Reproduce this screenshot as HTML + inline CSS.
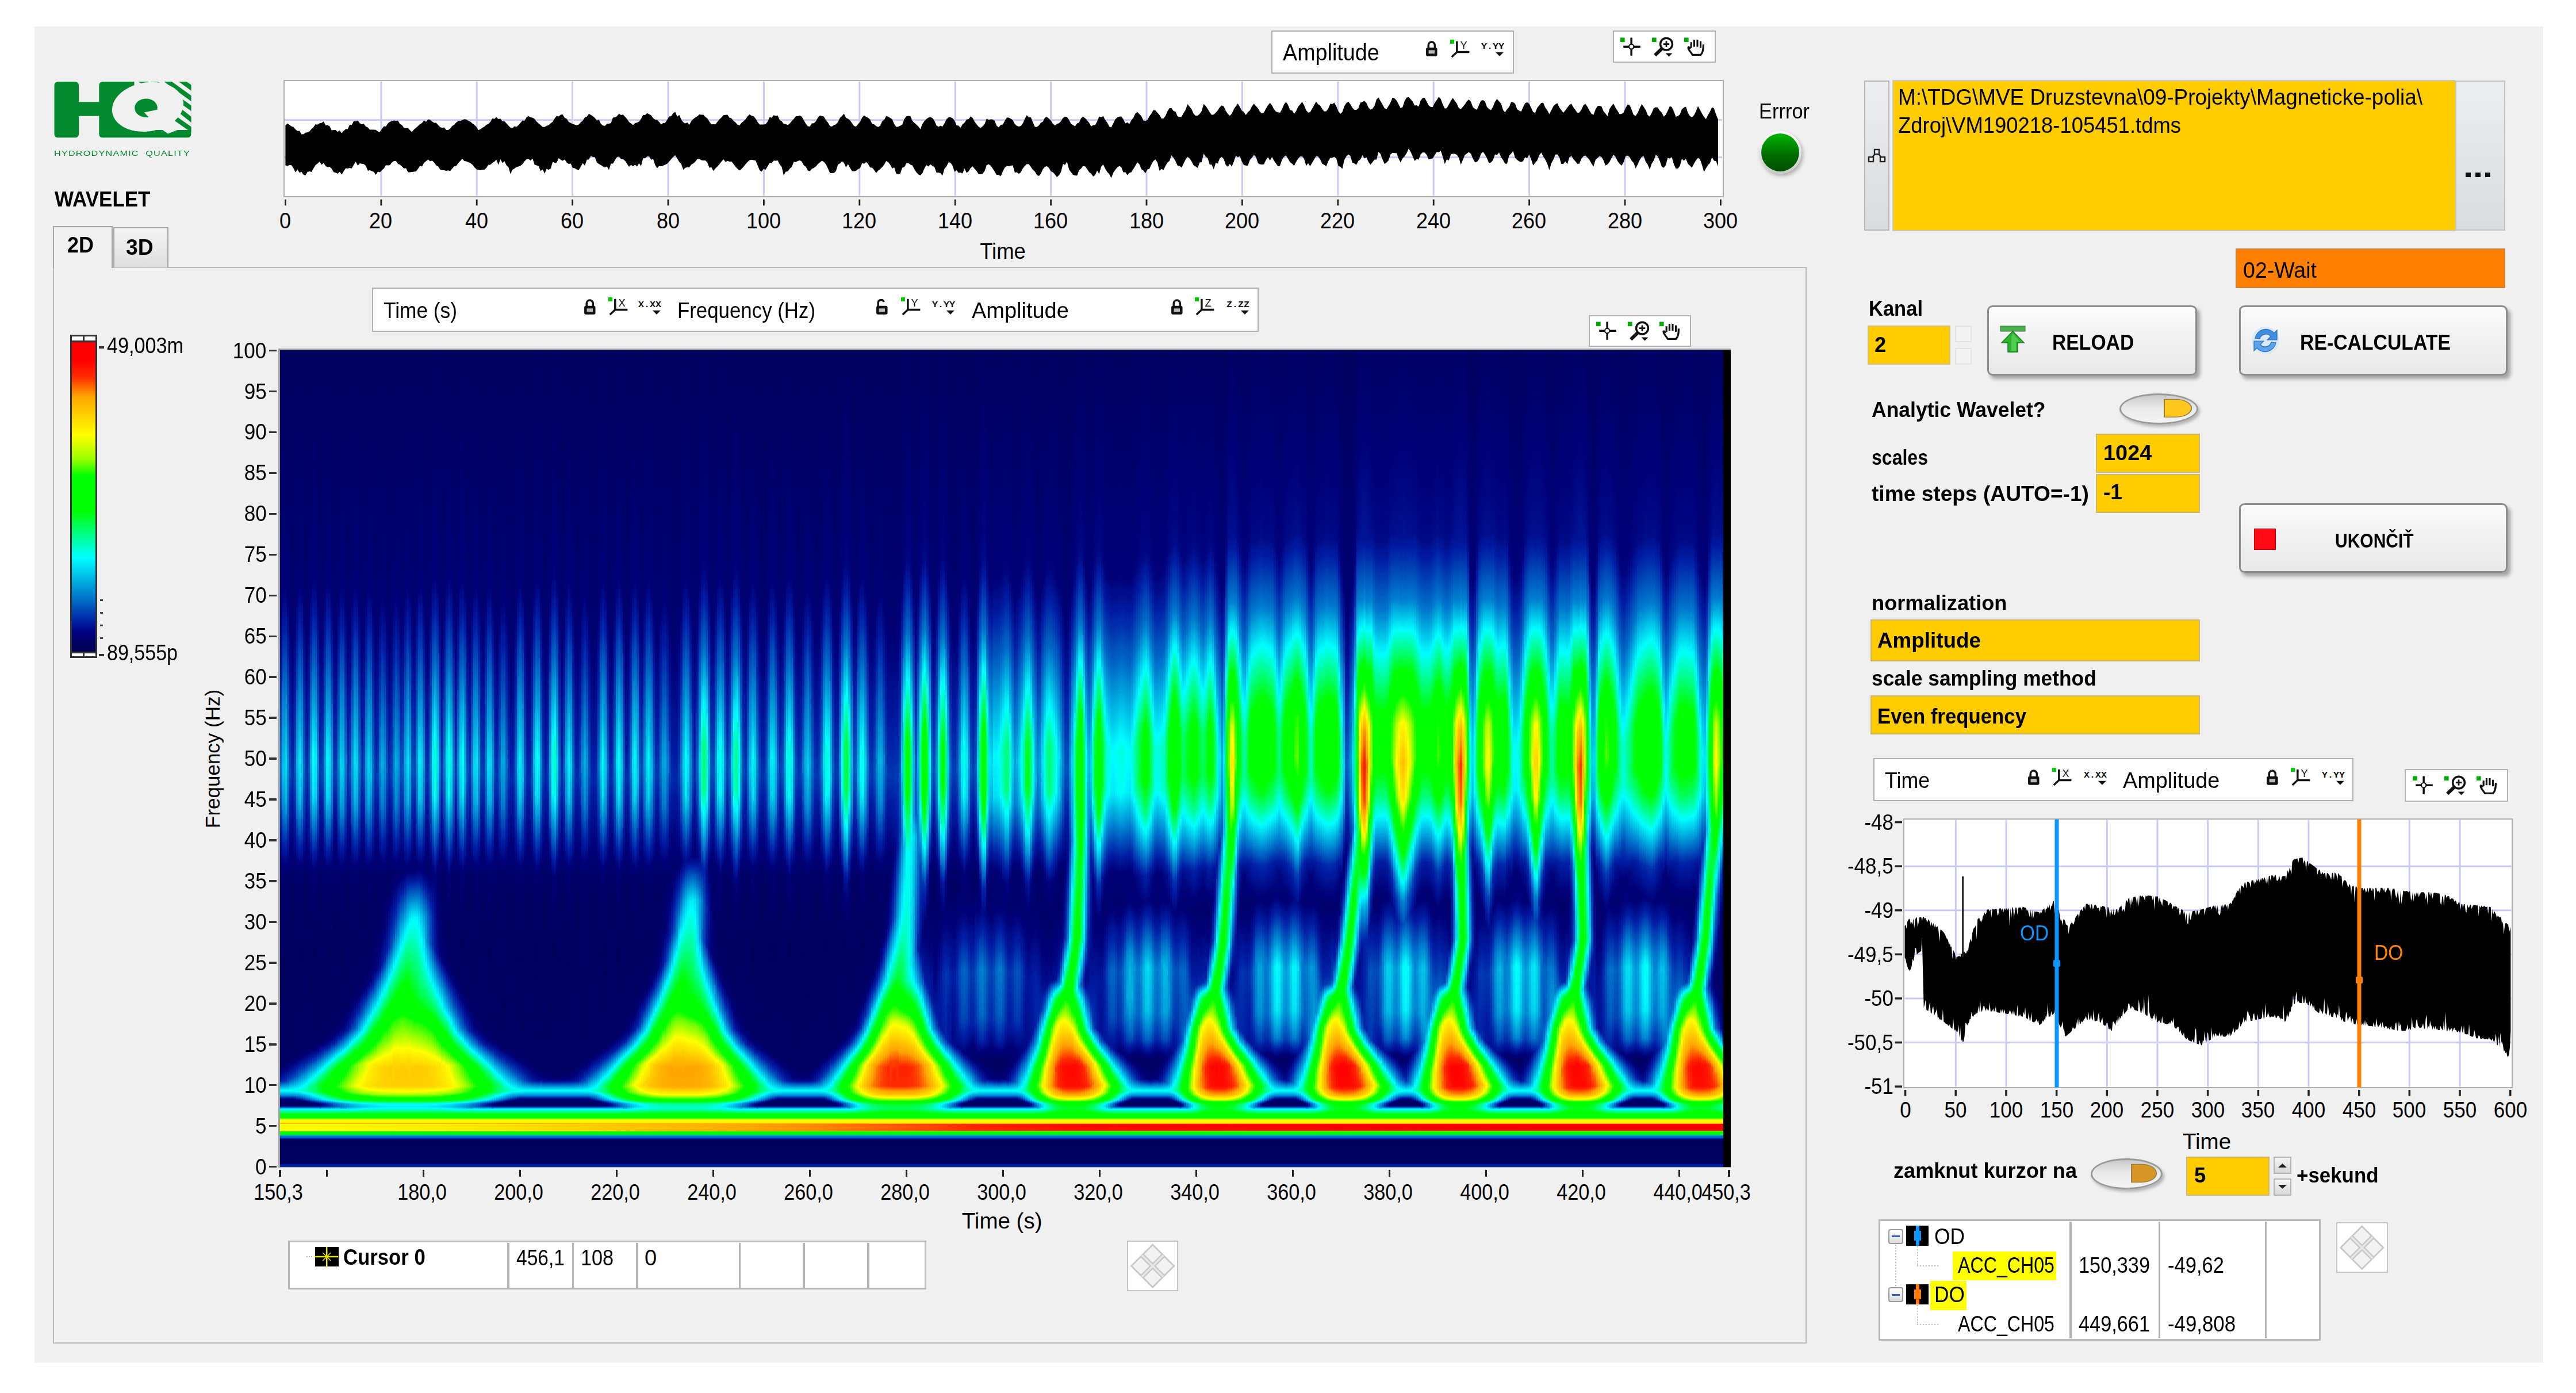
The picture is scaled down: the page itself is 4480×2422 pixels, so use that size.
<!DOCTYPE html><html><head><meta charset="utf-8"><title>WAVELET</title><style>html,body{margin:0;padding:0;background:#fff}
body{width:4480px;height:2422px;position:relative;overflow:hidden;font-family:"Liberation Sans",sans-serif;color:#000}
.a{position:absolute}
.t{position:absolute;white-space:nowrap;line-height:1;display:block}
#spec{position:absolute;left:0;top:0;width:2510px;height:1420px}
#spec .cols{display:flex;width:2510px}
#spec .cols i{flex:1 1 0;display:block;background:linear-gradient(var(--g))}
#spec .low{position:relative;width:2510px}
#spec .low b{position:absolute;left:0;width:2510px;display:block}
</style></head><body><svg width="0" height="0" style="position:absolute"><filter id="cm" x="0" y="0" width="100%" height="100%" color-interpolation-filters="sRGB"><feColorMatrix type="matrix" values="0.9412 0.0588 0 0 0 0.9412 0.0588 0 0 0 0.9412 0.0588 0 0 0 0 0 0 0 1"/><feComponentTransfer><feFuncR type="table" tableValues="0 0 0 0 0 0 0 0 0 0 0 0 0 0 0 0 0 0 0 0 0 0 0 0 0 0 0 0 0 0 0 0 0 0 0 0 0 0 0 0 0 0 0 0 0 0 0 0 0 0 0 0 0 0 0 0 0 0 0.077 0.154 0.231 0.308 0.385 0.462 0.538 0.615 0.692 0.769 0.846 0.923 1 1 1 1 1 1 1 1 1 1 1 1 1 1 1 1 1 1 1 1 1 1 1 1 1 1 1 1 1 1 1"/><feFuncG type="table" tableValues="0 0 0 0 0 0 0.024 0.047 0.071 0.094 0.118 0.162 0.206 0.25 0.294 0.338 0.382 0.426 0.471 0.515 0.559 0.603 0.647 0.691 0.735 0.779 0.824 0.868 0.912 0.956 1 1 1 1 1 1 1 1 1 1 1 1 1 1 1 1 1 1 1 1 1 1 1 1 1 1 1 1 1 1 1 1 1 1 1 1 1 1 1 1 1 0.971 0.941 0.912 0.882 0.853 0.824 0.794 0.765 0.735 0.706 0.676 0.647 0.577 0.507 0.437 0.367 0.297 0.227 0.157 0.125 0.094 0.063 0.031 0 0 0 0 0 0 0"/><feFuncB type="table" tableValues="0.361 0.383 0.405 0.427 0.449 0.471 0.506 0.541 0.576 0.612 0.647 0.667 0.686 0.706 0.725 0.745 0.765 0.784 0.804 0.82 0.837 0.853 0.869 0.886 0.902 0.918 0.935 0.951 0.967 0.984 1 0.938 0.875 0.813 0.751 0.689 0.626 0.564 0.502 0.439 0.376 0.314 0.251 0.188 0.125 0.063 0 0 0 0 0 0 0 0 0 0 0 0 0 0 0 0 0 0 0 0 0 0 0 0 0 0 0 0 0 0 0 0 0 0 0 0 0 0 0 0 0 0 0 0 0 0 0 0 0 0 0 0 0 0 0"/></feComponentTransfer></filter></svg><div class="a" style="left:60px;top:46px;width:4363px;height:2323px;background:#f0f0f0"></div><svg class="a" style="left:94px;top:141.6px" width="239" height="98" viewBox="0 0 239 98"><defs><clipPath id="lc"><rect x="0" y="0" width="238.5" height="97.5" rx="6"/></clipPath></defs><g clip-path="url(#lc)"><rect x="0.5" y="0" width="42.5" height="97.5" rx="6" fill="#038a2e"/><rect x="30" y="35.3" width="60" height="24.4" fill="#038a2e"/><path d="M78.3 6a6 6 0 0 1 6-6H238.5V91.5a6 6 0 0 1-6 6H84.3a6 6 0 0 1-6-6z" fill="#038a2e"/><rect x="139.5" y="-2" width="102" height="86" fill="#f0f0f0"/><g stroke="#038a2e" stroke-width="8" fill="none"><path d="M147 -4L171 8.5"/><path d="M170 -3L241 48"/><path d="M194 -3L241 31"/><path d="M219 -3.5L241 12.5"/><path d="M216 48L241 68"/><path d="M209 62.5L241 85"/></g><ellipse cx="163" cy="43.8" rx="62.5" ry="42.5" fill="#f0f0f0" transform="rotate(-9 163 44)"/><path d="M186 82L226 79.5L198 90.5z" fill="#f0f0f0"/><ellipse cx="160" cy="45.7" rx="19.8" ry="16.2" fill="#038a2e"/><path d="M156.5 53.4L183 48V66L166 63L161.5 58.5z" fill="#f0f0f0"/></g></svg><span class="t" id="t1" style="font-size:13.5px;top:260.1px;color:#038a2e;left:94.0px;transform-origin:0 0;transform:scaleX(1.2013);letter-spacing:1px;">HYDRODYNAMIC&nbsp;&nbsp;QUALITY</span><span class="t" id="t2" style="font-size:37.4px;top:328.1px;font-weight:bold;left:94.5px;transform-origin:0 0;transform:scaleX(0.9356);">WAVELET</span><div class="a" style="left:92.0px;top:464.0px;width:3050.0px;height:1872.0px;border:2.5px solid #b9b9b9;box-sizing:border-box;background:#f0f0f0"></div><div class="a" style="left:92.0px;top:393.0px;width:104.0px;height:73.0px;border:2px solid #a6a6a6;border-bottom:none;box-sizing:border-box;background:#f0f0f0"></div><div class="a" style="left:197.0px;top:395.0px;width:96.0px;height:70.0px;border:2px solid #a6a6a6;border-bottom:none;box-sizing:border-box;background:linear-gradient(#f4f4f4,#dedede)"></div><span class="t" id="t3" style="font-size:39.0px;top:405.8px;font-weight:bold;left:117.4px;transform-origin:0 0;transform:scaleX(0.9226);">2D</span><span class="t" id="t4" style="font-size:39.0px;top:410.0px;font-weight:bold;left:219.0px;transform-origin:0 0;transform:scaleX(0.9567);">3D</span><div class="a" style="left:492.5px;top:139.0px;width:2505.0px;height:204.0px;background:#fff;border:2.5px solid #b0b0b0;box-sizing:border-box"></div><svg class="a" style="left:0;top:0" width="3100" height="360" viewBox="0 0 3100 360"><rect x="661.3" y="141.5" width="3" height="199" fill="#c9c9f5"/><rect x="827.7" y="141.5" width="3" height="199" fill="#c9c9f5"/><rect x="994.1" y="141.5" width="3" height="199" fill="#c9c9f5"/><rect x="1160.5" y="141.5" width="3" height="199" fill="#c9c9f5"/><rect x="1326.9" y="141.5" width="3" height="199" fill="#c9c9f5"/><rect x="1493.3" y="141.5" width="3" height="199" fill="#c9c9f5"/><rect x="1659.7" y="141.5" width="3" height="199" fill="#c9c9f5"/><rect x="1826.1" y="141.5" width="3" height="199" fill="#c9c9f5"/><rect x="1992.5" y="141.5" width="3" height="199" fill="#c9c9f5"/><rect x="2158.9" y="141.5" width="3" height="199" fill="#c9c9f5"/><rect x="2325.3" y="141.5" width="3" height="199" fill="#c9c9f5"/><rect x="2491.7" y="141.5" width="3" height="199" fill="#c9c9f5"/><rect x="2658.1" y="141.5" width="3" height="199" fill="#c9c9f5"/><rect x="2824.5" y="141.5" width="3" height="199" fill="#c9c9f5"/><rect x="495" y="207.2" width="2500" height="3" fill="#c9c9f5"/><rect x="495" y="271.9" width="2500" height="3" fill="#c9c9f5"/><polygon points="496.4,217.9 499.9,214.8 503.4,217.0 506.9,219.8 510.4,220.7 513.9,225.0 517.4,227.8 520.9,227.4 524.4,233.4 527.8,233.2 531.3,230.7 534.8,229.9 538.3,228.6 541.8,224.3 545.3,221.1 548.8,216.1 552.3,216.8 555.8,214.3 559.3,213.8 562.8,211.3 566.3,217.7 569.8,217.5 573.3,219.5 576.8,226.4 580.3,225.9 583.8,226.1 587.3,229.3 590.7,226.8 594.2,231.5 597.7,227.6 601.2,224.6 604.7,224.5 608.2,216.8 611.7,217.3 615.2,210.6 618.7,211.1 622.2,209.6 625.7,214.3 629.2,216.3 632.7,215.2 636.2,220.0 639.7,221.4 643.2,225.4 646.7,225.6 650.2,225.5 653.6,225.7 657.1,228.5 660.6,229.7 664.1,223.9 667.6,219.5 671.1,220.1 674.6,214.4 678.1,211.8 681.6,210.5 685.1,209.5 688.6,209.9 692.1,209.8 695.6,215.4 699.1,217.4 702.6,222.5 706.1,222.8 709.6,222.4 713.1,226.5 716.5,229.4 720.0,225.0 723.5,222.2 727.0,218.9 730.5,215.9 734.0,213.8 737.5,209.5 741.0,211.7 744.5,207.6 748.0,208.2 751.5,211.3 755.0,213.5 758.5,213.5 762.0,217.4 765.5,221.1 769.0,222.2 772.5,221.4 776.0,226.0 779.4,226.0 782.9,223.6 786.4,218.9 789.9,216.9 793.4,212.9 796.9,210.2 800.4,210.2 803.9,209.0 807.4,207.2 810.9,207.8 814.4,209.9 817.9,211.6 821.4,214.6 824.9,216.9 828.4,220.6 831.9,226.2 835.4,224.7 838.9,222.2 842.3,220.3 845.8,216.9 849.3,215.6 852.8,212.1 856.3,206.0 859.8,206.7 863.3,203.7 866.8,206.9 870.3,206.2 873.8,211.1 877.3,210.7 880.8,214.4 884.3,218.4 887.8,222.0 891.3,222.5 894.8,219.5 898.3,220.4 901.8,217.6 905.2,213.5 908.7,209.5 912.2,210.0 915.7,204.0 919.2,201.8 922.7,204.1 926.2,204.7 929.7,206.8 933.2,211.5 936.7,214.5 940.2,217.4 943.7,220.7 947.2,220.7 950.7,218.8 954.2,217.4 957.7,214.2 961.2,211.7 964.6,205.9 968.1,201.5 971.6,202.4 975.1,199.4 978.6,199.1 982.1,205.0 985.6,206.4 989.1,211.9 992.6,213.7 996.1,215.4 999.6,216.7 1003.1,217.7 1006.6,216.4 1010.1,212.6 1013.6,209.8 1017.1,203.9 1020.6,203.0 1024.1,197.9 1027.5,199.8 1031.0,202.1 1034.5,205.1 1038.0,209.5 1041.5,208.0 1045.0,215.2 1048.5,218.3 1052.0,219.0 1055.5,215.2 1059.0,215.1 1062.5,214.0 1066.0,204.6 1069.5,204.0 1073.0,202.1 1076.5,197.7 1080.0,200.0 1083.5,199.3 1087.0,202.9 1090.4,206.8 1093.9,212.1 1097.4,214.5 1100.9,217.5 1104.4,214.1 1107.9,213.2 1111.4,211.5 1114.9,206.7 1118.4,199.7 1121.9,199.9 1125.4,196.7 1128.9,198.5 1132.4,200.6 1135.9,205.6 1139.4,207.9 1142.9,208.6 1146.4,212.1 1149.9,216.4 1153.3,213.9 1156.8,213.5 1160.3,208.3 1163.8,202.5 1167.3,201.9 1170.8,196.7 1174.3,194.4 1177.8,202.7 1181.3,199.7 1184.8,208.0 1188.3,212.6 1191.8,214.6 1195.3,213.1 1198.8,216.9 1202.3,210.5 1205.8,206.9 1209.3,204.2 1212.8,202.2 1216.2,199.1 1219.7,199.6 1223.2,199.4 1226.7,203.3 1230.2,206.1 1233.7,211.6 1237.2,216.2 1240.7,216.0 1244.2,216.3 1247.7,211.7 1251.2,207.6 1254.7,204.2 1258.2,200.3 1261.7,199.8 1265.2,199.6 1268.7,204.7 1272.2,205.7 1275.7,210.2 1279.1,212.8 1282.6,216.8 1286.1,217.9 1289.6,213.4 1293.1,210.7 1296.6,207.4 1300.1,202.0 1303.6,198.9 1307.1,201.2 1310.6,201.9 1314.1,206.3 1317.6,212.3 1321.1,216.4 1324.6,216.6 1328.1,216.6 1331.6,215.8 1335.1,211.2 1338.6,203.7 1342.0,204.7 1345.5,200.3 1349.0,201.4 1352.5,200.8 1356.0,209.0 1359.5,210.8 1363.0,215.6 1366.5,215.8 1370.0,217.5 1373.5,214.7 1377.0,210.4 1380.5,206.7 1384.0,202.3 1387.5,202.1 1391.0,200.7 1394.5,203.1 1398.0,209.3 1401.4,215.1 1404.9,219.6 1408.4,220.1 1411.9,214.5 1415.4,214.2 1418.9,211.1 1422.4,204.4 1425.9,200.7 1429.4,201.7 1432.9,202.8 1436.4,208.9 1439.9,212.9 1443.4,219.3 1446.9,219.9 1450.4,217.3 1453.9,216.2 1457.4,212.0 1460.9,204.8 1464.3,201.7 1467.8,197.8 1471.3,204.8 1474.8,206.6 1478.3,209.2 1481.8,214.2 1485.3,219.1 1488.8,220.3 1492.3,215.8 1495.8,212.0 1499.3,204.5 1502.8,200.6 1506.3,203.3 1509.8,204.7 1513.3,208.1 1516.8,215.4 1520.3,216.3 1523.8,219.3 1527.2,220.8 1530.7,218.7 1534.2,210.7 1537.7,208.5 1541.2,201.8 1544.7,203.1 1548.2,205.0 1551.7,207.5 1555.2,215.7 1558.7,220.7 1562.2,220.2 1565.7,218.5 1569.2,216.6 1572.7,207.1 1576.2,202.3 1579.7,201.6 1583.2,201.9 1586.7,209.9 1590.1,213.6 1593.6,216.6 1597.1,219.7 1600.6,224.8 1604.1,215.8 1607.6,210.4 1611.1,207.0 1614.6,204.5 1618.1,203.8 1621.6,205.2 1625.1,210.0 1628.6,218.1 1632.1,220.5 1635.6,218.4 1639.1,220.0 1642.6,214.3 1646.1,207.3 1649.6,203.7 1653.0,204.0 1656.5,205.4 1660.0,209.5 1663.5,217.7 1667.0,218.6 1670.5,222.0 1674.0,216.3 1677.5,213.3 1681.0,207.8 1684.5,207.3 1688.0,202.4 1691.5,204.9 1695.0,211.5 1698.5,216.2 1702.0,220.5 1705.5,222.2 1709.0,219.4 1712.5,215.4 1715.9,206.2 1719.4,208.4 1722.9,207.6 1726.4,207.7 1729.9,210.0 1733.4,218.7 1736.9,221.6 1740.4,216.9 1743.9,216.5 1747.4,210.3 1750.9,204.4 1754.4,204.5 1757.9,206.6 1761.4,208.8 1764.9,215.8 1768.4,218.8 1771.9,220.0 1775.4,218.9 1778.8,214.4 1782.3,206.8 1785.8,200.3 1789.3,204.3 1792.8,204.1 1796.3,212.5 1799.8,220.6 1803.3,220.7 1806.8,218.0 1810.3,213.3 1813.8,211.5 1817.3,204.6 1820.8,203.6 1824.3,206.2 1827.8,209.8 1831.3,215.2 1834.8,218.3 1838.2,215.3 1841.7,214.3 1845.2,210.8 1848.7,205.1 1852.2,203.1 1855.7,203.4 1859.2,208.5 1862.7,215.6 1866.2,217.5 1869.7,219.6 1873.2,214.6 1876.7,213.0 1880.2,205.6 1883.7,203.0 1887.2,205.5 1890.7,209.2 1894.2,213.5 1897.7,219.7 1901.1,217.5 1904.6,217.6 1908.1,211.3 1911.6,202.6 1915.1,204.0 1918.6,201.7 1922.1,208.6 1925.6,213.0 1929.1,220.0 1932.6,221.4 1936.1,214.6 1939.6,207.4 1943.1,203.9 1946.6,202.7 1950.1,202.5 1953.6,207.2 1957.1,214.5 1960.6,212.8 1964.0,215.4 1967.5,209.3 1971.0,204.9 1974.5,197.4 1978.0,194.7 1981.5,198.3 1985.0,201.9 1988.5,209.5 1992.0,210.6 1995.5,208.6 1999.0,201.9 2002.5,197.5 2006.0,191.3 2009.5,192.1 2013.0,196.1 2016.5,199.9 2020.0,206.3 2023.5,206.0 2026.9,201.4 2030.4,193.6 2033.9,187.9 2037.4,187.9 2040.9,192.9 2044.4,194.1 2047.9,202.2 2051.4,203.4 2054.9,203.1 2058.4,196.6 2061.9,191.1 2065.4,181.1 2068.9,185.6 2072.4,190.1 2075.9,198.0 2079.4,201.2 2082.9,200.9 2086.4,198.1 2089.8,193.3 2093.3,180.7 2096.8,184.1 2100.3,189.2 2103.8,195.2 2107.3,199.8 2110.8,199.2 2114.3,195.9 2117.8,191.9 2121.3,186.6 2124.8,183.2 2128.3,184.9 2131.8,192.7 2135.3,198.0 2138.8,201.3 2142.3,197.5 2145.8,189.8 2149.3,184.7 2152.7,179.9 2156.2,185.7 2159.7,192.4 2163.2,194.8 2166.7,199.9 2170.2,195.1 2173.7,192.0 2177.2,185.1 2180.7,180.3 2184.2,184.5 2187.7,188.3 2191.2,194.3 2194.7,197.2 2198.2,195.4 2201.7,188.7 2205.2,182.9 2208.7,178.7 2212.2,183.3 2215.6,190.0 2219.1,194.0 2222.6,195.2 2226.1,195.9 2229.6,190.1 2233.1,181.6 2236.6,177.2 2240.1,182.6 2243.6,191.2 2247.1,191.9 2250.6,197.8 2254.1,193.1 2257.6,185.4 2261.1,181.5 2264.6,176.9 2268.1,183.2 2271.6,191.8 2275.0,195.7 2278.5,194.9 2282.0,189.0 2285.5,182.7 2289.0,176.4 2292.5,181.6 2296.0,183.6 2299.5,189.4 2303.0,193.7 2306.5,193.4 2310.0,188.9 2313.5,180.2 2317.0,180.9 2320.5,178.6 2324.0,184.7 2327.5,193.3 2331.0,197.9 2334.5,194.7 2337.9,184.8 2341.4,179.2 2344.9,176.8 2348.4,180.9 2351.9,187.3 2355.4,190.9 2358.9,191.0 2362.4,188.2 2365.9,178.5 2369.4,177.3 2372.9,175.4 2376.4,179.0 2379.9,187.1 2383.4,190.5 2386.9,189.1 2390.4,184.1 2393.9,173.1 2397.4,169.4 2400.8,175.7 2404.3,181.5 2407.8,188.1 2411.3,189.7 2414.8,184.2 2418.3,178.2 2421.8,169.8 2425.3,171.0 2428.8,174.7 2432.3,181.2 2435.8,188.1 2439.3,186.3 2442.8,175.6 2446.3,169.7 2449.8,168.7 2453.3,172.6 2456.8,176.5 2460.3,183.4 2463.7,183.1 2467.2,185.2 2470.7,174.8 2474.2,170.2 2477.7,170.2 2481.2,176.4 2484.7,183.3 2488.2,186.1 2491.7,186.1 2495.2,178.7 2498.7,173.9 2502.2,168.3 2505.7,172.2 2509.2,181.5 2512.7,188.7 2516.2,187.9 2519.7,181.7 2523.2,175.4 2526.6,170.2 2530.1,175.2 2533.6,180.0 2537.1,187.9 2540.6,189.8 2544.1,185.7 2547.6,181.6 2551.1,176.1 2554.6,173.1 2558.1,176.9 2561.6,186.3 2565.1,189.3 2568.6,190.7 2572.1,182.5 2575.6,175.0 2579.1,174.1 2582.6,176.5 2586.1,186.1 2589.5,189.4 2593.0,191.6 2596.5,185.5 2600.0,177.0 2603.5,172.0 2607.0,176.3 2610.5,179.9 2614.0,191.1 2617.5,195.2 2621.0,190.0 2624.5,186.2 2628.0,177.5 2631.5,177.7 2635.0,180.4 2638.5,190.0 2642.0,192.2 2645.5,194.0 2649.0,186.1 2652.4,179.6 2655.9,177.8 2659.4,180.5 2662.9,187.5 2666.4,195.1 2669.9,196.2 2673.4,187.6 2676.9,183.3 2680.4,179.0 2683.9,178.5 2687.4,187.1 2690.9,191.5 2694.4,198.4 2697.9,191.9 2701.4,184.7 2704.9,181.2 2708.4,179.4 2711.8,186.6 2715.3,191.6 2718.8,196.1 2722.3,192.1 2725.8,186.9 2729.3,182.5 2732.8,180.2 2736.3,186.5 2739.8,191.2 2743.3,196.2 2746.8,195.4 2750.3,190.4 2753.8,183.1 2757.3,180.4 2760.8,185.8 2764.3,192.2 2767.8,198.1 2771.3,199.7 2774.7,190.5 2778.2,184.5 2781.7,183.7 2785.2,184.9 2788.7,193.4 2792.2,197.5 2795.7,202.0 2799.2,189.6 2802.7,184.0 2806.2,180.3 2809.7,187.4 2813.2,192.8 2816.7,198.5 2820.2,198.0 2823.7,195.4 2827.2,187.4 2830.7,181.8 2834.2,182.8 2837.6,190.7 2841.1,199.8 2844.6,201.5 2848.1,196.3 2851.6,188.3 2855.1,181.0 2858.6,185.8 2862.1,191.2 2865.6,200.1 2869.1,202.7 2872.6,196.2 2876.1,188.0 2879.6,186.4 2883.1,187.0 2886.6,192.4 2890.1,195.9 2893.6,202.7 2897.1,199.3 2900.5,192.4 2904.0,184.5 2907.5,186.2 2911.0,193.5 2914.5,202.9 2918.0,201.8 2921.5,198.9 2925.0,189.9 2928.5,186.9 2932.0,185.6 2935.5,195.9 2939.0,201.7 2942.5,204.1 2946.0,200.5 2949.5,193.7 2953.0,184.5 2956.5,190.8 2960.0,197.4 2963.4,203.0 2966.9,207.2 2970.4,200.0 2973.9,193.9 2977.4,186.5 2980.9,188.4 2984.4,199.2 2987.9,207.4 2987.9,289.3 2984.4,280.1 2980.9,279.6 2977.4,273.3 2973.9,283.5 2970.4,287.0 2966.9,292.7 2963.4,298.9 2960.0,286.7 2956.5,277.0 2953.0,274.5 2949.5,278.7 2946.0,284.4 2942.5,291.6 2939.0,288.0 2935.5,284.9 2932.0,276.1 2928.5,279.6 2925.0,276.1 2921.5,288.8 2918.0,293.0 2914.5,293.2 2911.0,285.4 2907.5,272.9 2904.0,275.8 2900.5,274.3 2897.1,286.7 2893.6,291.8 2890.1,290.1 2886.6,280.1 2883.1,271.7 2879.6,269.3 2876.1,279.1 2872.6,284.2 2869.1,294.8 2865.6,286.0 2862.1,281.2 2858.6,271.4 2855.1,272.8 2851.6,278.2 2848.1,285.9 2844.6,292.8 2841.1,283.2 2837.6,279.5 2834.2,273.0 2830.7,270.6 2827.2,271.6 2823.7,281.9 2820.2,288.1 2816.7,284.7 2813.2,280.2 2809.7,273.0 2806.2,269.1 2802.7,274.7 2799.2,281.6 2795.7,285.7 2792.2,287.7 2788.7,278.9 2785.2,272.8 2781.7,271.4 2778.2,274.7 2774.7,278.2 2771.3,289.4 2767.8,284.5 2764.3,278.0 2760.8,273.9 2757.3,270.5 2753.8,271.4 2750.3,275.9 2746.8,284.6 2743.3,285.1 2739.8,280.5 2736.3,276.6 2732.8,271.0 2729.3,273.4 2725.8,285.4 2722.3,280.5 2718.8,285.3 2715.3,285.1 2711.8,272.9 2708.4,268.4 2704.9,268.8 2701.4,277.8 2697.9,284.1 2694.4,296.1 2690.9,284.3 2687.4,277.6 2683.9,272.1 2680.4,265.2 2676.9,270.1 2673.4,278.9 2669.9,283.2 2666.4,287.5 2662.9,277.2 2659.4,268.5 2655.9,275.0 2652.4,273.2 2649.0,280.0 2645.5,281.7 2642.0,280.6 2638.5,277.9 2635.0,274.4 2631.5,262.6 2628.0,267.3 2624.5,270.6 2621.0,284.8 2617.5,284.5 2614.0,278.2 2610.5,273.2 2607.0,265.2 2603.5,269.3 2600.0,268.6 2596.5,278.3 2593.0,282.4 2589.5,283.6 2586.1,275.3 2582.6,268.8 2579.1,264.0 2575.6,267.4 2572.1,277.1 2568.6,281.5 2565.1,282.2 2561.6,275.8 2558.1,267.5 2554.6,264.6 2551.1,267.1 2547.6,269.4 2544.1,278.0 2540.6,286.2 2537.1,274.2 2533.6,269.0 2530.1,267.4 2526.6,267.2 2523.2,268.6 2519.7,278.9 2516.2,277.1 2512.7,285.3 2509.2,272.8 2505.7,262.3 2502.2,264.7 2498.7,264.3 2495.2,269.6 2491.7,275.3 2488.2,276.2 2484.7,276.9 2481.2,269.2 2477.7,265.3 2474.2,265.1 2470.7,268.5 2467.2,277.5 2463.7,276.5 2460.3,279.7 2456.8,271.7 2453.3,263.9 2449.8,258.3 2446.3,266.6 2442.8,271.7 2439.3,275.2 2435.8,282.5 2432.3,275.5 2428.8,266.3 2425.3,266.2 2421.8,265.8 2418.3,268.6 2414.8,279.1 2411.3,282.7 2407.8,285.0 2404.3,276.8 2400.8,267.5 2397.4,264.0 2393.9,277.4 2390.4,277.6 2386.9,281.9 2383.4,286.2 2379.9,281.6 2376.4,273.4 2372.9,275.6 2369.4,269.8 2365.9,277.2 2362.4,279.8 2358.9,286.6 2355.4,284.2 2351.9,282.8 2348.4,271.0 2344.9,268.5 2341.4,272.0 2337.9,278.3 2334.5,293.5 2331.0,290.0 2327.5,288.2 2324.0,275.5 2320.5,272.6 2317.0,274.3 2313.5,274.5 2310.0,280.3 2306.5,289.2 2303.0,286.6 2299.5,284.7 2296.0,277.2 2292.5,272.3 2289.0,271.3 2285.5,277.3 2282.0,283.0 2278.5,288.7 2275.0,283.8 2271.6,288.4 2268.1,276.2 2264.6,271.7 2261.1,271.9 2257.6,275.9 2254.1,281.5 2250.6,288.3 2247.1,284.4 2243.6,282.1 2240.1,275.9 2236.6,270.3 2233.1,272.5 2229.6,277.7 2226.1,287.9 2222.6,289.2 2219.1,284.3 2215.6,279.2 2212.2,272.8 2208.7,279.2 2205.2,273.2 2201.7,277.9 2198.2,285.7 2194.7,286.0 2191.2,285.8 2187.7,283.4 2184.2,272.7 2180.7,269.6 2177.2,274.2 2173.7,278.0 2170.2,288.0 2166.7,287.7 2163.2,287.1 2159.7,280.7 2156.2,271.5 2152.7,273.2 2149.3,270.6 2145.8,280.9 2142.3,289.5 2138.8,285.0 2135.3,289.9 2131.8,286.8 2128.3,276.6 2124.8,272.5 2121.3,275.2 2117.8,284.5 2114.3,283.3 2110.8,294.5 2107.3,286.2 2103.8,285.9 2100.3,275.0 2096.8,272.2 2093.3,267.3 2089.8,281.8 2086.4,282.6 2082.9,292.1 2079.4,289.5 2075.9,287.6 2072.4,280.7 2068.9,275.5 2065.4,272.6 2061.9,277.3 2058.4,284.6 2054.9,291.4 2051.4,288.5 2047.9,288.1 2044.4,280.3 2040.9,274.6 2037.4,270.3 2033.9,279.7 2030.4,282.7 2026.9,288.4 2023.5,295.6 2020.0,293.8 2016.5,296.9 2013.0,282.8 2009.5,277.2 2006.0,280.1 2002.5,285.8 1999.0,293.6 1995.5,294.5 1992.0,301.2 1988.5,296.6 1985.0,294.3 1981.5,285.4 1978.0,282.2 1974.5,288.3 1971.0,294.0 1967.5,299.4 1964.0,300.6 1960.6,304.5 1957.1,299.3 1953.6,299.7 1950.1,290.4 1946.6,288.7 1943.1,291.1 1939.6,295.3 1936.1,300.4 1932.6,309.4 1929.1,302.6 1925.6,298.9 1922.1,293.2 1918.6,286.0 1915.1,289.8 1911.6,302.6 1908.1,296.6 1904.6,304.2 1901.1,307.0 1897.7,301.7 1894.2,299.4 1890.7,294.0 1887.2,289.2 1883.7,288.8 1880.2,293.1 1876.7,296.0 1873.2,305.2 1869.7,304.9 1866.2,304.1 1862.7,299.4 1859.2,294.8 1855.7,281.3 1852.2,286.8 1848.7,284.9 1845.2,299.0 1841.7,304.8 1838.2,308.0 1834.8,303.6 1831.3,299.4 1827.8,297.9 1824.3,292.0 1820.8,288.9 1817.3,290.1 1813.8,294.0 1810.3,301.7 1806.8,306.0 1803.3,304.2 1799.8,298.3 1796.3,295.3 1792.8,290.2 1789.3,285.6 1785.8,285.2 1782.3,288.5 1778.8,292.9 1775.4,299.5 1771.9,302.3 1768.4,299.6 1764.9,300.0 1761.4,287.5 1757.9,288.1 1754.4,289.0 1750.9,288.6 1747.4,291.6 1743.9,298.2 1740.4,306.6 1736.9,303.8 1733.4,304.2 1729.9,298.6 1726.4,293.1 1722.9,288.0 1719.4,285.6 1715.9,287.2 1712.5,297.2 1709.0,301.9 1705.5,303.1 1702.0,302.7 1698.5,297.4 1695.0,293.4 1691.5,289.2 1688.0,292.3 1684.5,298.1 1681.0,300.6 1677.5,293.0 1674.0,301.6 1670.5,299.9 1667.0,300.6 1663.5,295.9 1660.0,298.7 1656.5,287.8 1653.0,283.1 1649.6,282.2 1646.1,289.2 1642.6,293.2 1639.1,305.2 1635.6,301.1 1632.1,300.0 1628.6,299.9 1625.1,290.5 1621.6,288.6 1618.1,285.8 1614.6,289.6 1611.1,286.9 1607.6,292.9 1604.1,301.3 1600.6,304.8 1597.1,303.3 1593.6,299.6 1590.1,294.0 1586.7,287.5 1583.2,286.2 1579.7,283.5 1576.2,284.2 1572.7,290.4 1569.2,291.5 1565.7,301.8 1562.2,302.6 1558.7,302.3 1555.2,291.1 1551.7,293.1 1548.2,286.6 1544.7,281.7 1541.2,280.0 1537.7,286.2 1534.2,290.4 1530.7,294.0 1527.2,296.7 1523.8,300.7 1520.3,295.7 1516.8,291.6 1513.3,291.2 1509.8,285.2 1506.3,281.7 1502.8,284.8 1499.3,283.8 1495.8,292.6 1492.3,293.9 1488.8,297.0 1485.3,297.7 1481.8,297.5 1478.3,291.9 1474.8,285.2 1471.3,291.1 1467.8,283.3 1464.3,280.5 1460.9,284.3 1457.4,286.0 1453.9,297.2 1450.4,300.8 1446.9,301.0 1443.4,301.0 1439.9,292.9 1436.4,285.7 1432.9,281.5 1429.4,279.5 1425.9,282.3 1422.4,285.2 1418.9,289.6 1415.4,292.1 1411.9,293.6 1408.4,297.8 1404.9,296.6 1401.4,289.7 1398.0,287.4 1394.5,281.1 1391.0,278.7 1387.5,280.1 1384.0,281.7 1380.5,281.5 1377.0,290.2 1373.5,293.3 1370.0,298.1 1366.5,298.4 1363.0,305.1 1359.5,290.3 1356.0,285.7 1352.5,279.1 1349.0,279.6 1345.5,279.2 1342.0,283.6 1338.6,283.2 1335.1,289.0 1331.6,295.0 1328.1,293.4 1324.6,298.6 1321.1,295.9 1317.6,287.4 1314.1,279.1 1310.6,278.6 1307.1,277.7 1303.6,278.4 1300.1,281.6 1296.6,285.6 1293.1,290.0 1289.6,293.7 1286.1,296.4 1282.6,293.6 1279.1,290.0 1275.7,285.3 1272.2,280.7 1268.7,280.9 1265.2,279.7 1261.7,281.5 1258.2,276.9 1254.7,281.0 1251.2,285.4 1247.7,289.4 1244.2,292.8 1240.7,297.2 1237.2,290.7 1233.7,291.8 1230.2,282.5 1226.7,279.0 1223.2,279.1 1219.7,278.5 1216.2,276.3 1212.8,276.6 1209.3,280.9 1205.8,284.2 1202.3,285.9 1198.8,290.9 1195.3,290.7 1191.8,291.8 1188.3,295.2 1184.8,284.9 1181.3,281.6 1177.8,275.6 1174.3,269.9 1170.8,272.8 1167.3,276.7 1163.8,280.7 1160.3,284.8 1156.8,286.6 1153.3,287.9 1149.9,289.2 1146.4,288.6 1142.9,292.4 1139.4,287.1 1135.9,276.3 1132.4,277.8 1128.9,271.7 1125.4,272.1 1121.9,275.3 1118.4,275.1 1114.9,288.8 1111.4,283.9 1107.9,289.3 1104.4,286.5 1100.9,289.1 1097.4,286.7 1093.9,290.0 1090.4,284.4 1087.0,279.6 1083.5,276.7 1080.0,276.4 1076.5,272.2 1073.0,273.1 1069.5,278.5 1066.0,284.6 1062.5,284.4 1059.0,295.6 1055.5,289.2 1052.0,291.2 1048.5,289.2 1045.0,287.0 1041.5,284.9 1038.0,282.5 1034.5,273.2 1031.0,272.8 1027.5,271.2 1024.1,277.3 1020.6,277.7 1017.1,288.1 1013.6,283.6 1010.1,289.6 1006.6,295.7 1003.1,294.7 999.6,292.4 996.1,292.1 992.6,284.4 989.1,285.1 985.6,282.5 982.1,277.3 978.6,279.6 975.1,277.8 971.6,275.0 968.1,282.7 964.6,283.1 961.2,281.5 957.7,293.1 954.2,295.2 950.7,293.6 947.2,301.7 943.7,294.4 940.2,297.4 936.7,288.7 933.2,287.5 929.7,286.3 926.2,275.7 922.7,279.0 919.2,276.4 915.7,276.7 912.2,280.4 908.7,285.6 905.2,288.0 901.8,289.5 898.3,290.5 894.8,292.9 891.3,295.1 887.8,302.5 884.3,290.6 880.8,287.4 877.3,280.2 873.8,283.4 870.3,276.8 866.8,286.5 863.3,277.7 859.8,281.0 856.3,283.3 852.8,286.4 849.3,286.5 845.8,292.0 842.3,294.9 838.9,294.9 835.4,296.1 831.9,295.4 828.4,294.2 824.9,290.5 821.4,286.0 817.9,283.6 814.4,281.9 810.9,280.4 807.4,280.0 803.9,276.1 800.4,280.0 796.9,283.8 793.4,288.6 789.9,289.2 786.4,293.3 782.9,297.2 779.4,296.2 776.0,297.0 772.5,296.1 769.0,295.9 765.5,294.8 762.0,289.6 758.5,287.4 755.0,282.5 751.5,279.3 748.0,280.6 744.5,277.2 741.0,280.2 737.5,283.0 734.0,289.4 730.5,288.2 727.0,293.4 723.5,298.1 720.0,298.6 716.5,298.9 713.1,299.5 709.6,299.5 706.1,292.4 702.6,292.9 699.1,289.6 695.6,286.2 692.1,284.7 688.6,279.7 685.1,279.9 681.6,282.2 678.1,287.3 674.6,287.6 671.1,287.2 667.6,292.9 664.1,296.1 660.6,299.5 657.1,298.6 653.6,304.0 650.2,299.1 646.7,297.6 643.2,295.9 639.7,296.8 636.2,288.3 632.7,285.2 629.2,284.7 625.7,284.1 622.2,288.0 618.7,281.0 615.2,286.8 611.7,292.8 608.2,292.1 604.7,293.1 601.2,292.4 597.7,298.0 594.2,303.4 590.7,298.4 587.3,302.1 583.8,300.2 580.3,299.3 576.8,293.5 573.3,290.1 569.8,290.7 566.3,288.8 562.8,283.5 559.3,286.5 555.8,281.1 552.3,284.3 548.8,287.0 545.3,292.6 541.8,298.9 538.3,298.1 534.8,298.7 531.3,304.9 527.8,303.7 524.4,298.7 520.9,300.2 517.4,294.9 513.9,299.4 510.4,292.6 506.9,287.3 503.4,286.9 499.9,288.5 496.4,287.6" fill="#000"/><rect x="495.0" y="346.8" width="2.8" height="10.5" fill="#222"/><rect x="661.4" y="346.8" width="2.8" height="10.5" fill="#222"/><rect x="827.8" y="346.8" width="2.8" height="10.5" fill="#222"/><rect x="994.2" y="346.8" width="2.8" height="10.5" fill="#222"/><rect x="1160.6" y="346.8" width="2.8" height="10.5" fill="#222"/><rect x="1327.0" y="346.8" width="2.8" height="10.5" fill="#222"/><rect x="1493.4" y="346.8" width="2.8" height="10.5" fill="#222"/><rect x="1659.8" y="346.8" width="2.8" height="10.5" fill="#222"/><rect x="1826.2" y="346.8" width="2.8" height="10.5" fill="#222"/><rect x="1992.6" y="346.8" width="2.8" height="10.5" fill="#222"/><rect x="2159.0" y="346.8" width="2.8" height="10.5" fill="#222"/><rect x="2325.4" y="346.8" width="2.8" height="10.5" fill="#222"/><rect x="2491.8" y="346.8" width="2.8" height="10.5" fill="#222"/><rect x="2658.2" y="346.8" width="2.8" height="10.5" fill="#222"/><rect x="2824.6" y="346.8" width="2.8" height="10.5" fill="#222"/><rect x="2991.0" y="346.8" width="2.8" height="10.5" fill="#222"/></svg><span class="t" id="t5" style="font-size:38.3px;top:364.9px;left:495.9px;transform-origin:0 0;transform-origin:50% 0;transform:translateX(-50%) scaleX(0.9400);">0</span><span class="t" id="t6" style="font-size:38.3px;top:364.9px;left:662.3px;transform-origin:0 0;transform-origin:50% 0;transform:translateX(-50%) scaleX(0.9400);">20</span><span class="t" id="t7" style="font-size:38.3px;top:364.9px;left:828.7px;transform-origin:0 0;transform-origin:50% 0;transform:translateX(-50%) scaleX(0.9400);">40</span><span class="t" id="t8" style="font-size:38.3px;top:364.9px;left:995.1px;transform-origin:0 0;transform-origin:50% 0;transform:translateX(-50%) scaleX(0.9400);">60</span><span class="t" id="t9" style="font-size:38.3px;top:364.9px;left:1161.5px;transform-origin:0 0;transform-origin:50% 0;transform:translateX(-50%) scaleX(0.9400);">80</span><span class="t" id="t10" style="font-size:38.3px;top:364.9px;left:1327.9px;transform-origin:0 0;transform-origin:50% 0;transform:translateX(-50%) scaleX(0.9400);">100</span><span class="t" id="t11" style="font-size:38.3px;top:364.9px;left:1494.3px;transform-origin:0 0;transform-origin:50% 0;transform:translateX(-50%) scaleX(0.9400);">120</span><span class="t" id="t12" style="font-size:38.3px;top:364.9px;left:1660.7px;transform-origin:0 0;transform-origin:50% 0;transform:translateX(-50%) scaleX(0.9400);">140</span><span class="t" id="t13" style="font-size:38.3px;top:364.9px;left:1827.1px;transform-origin:0 0;transform-origin:50% 0;transform:translateX(-50%) scaleX(0.9400);">160</span><span class="t" id="t14" style="font-size:38.3px;top:364.9px;left:1993.5px;transform-origin:0 0;transform-origin:50% 0;transform:translateX(-50%) scaleX(0.9400);">180</span><span class="t" id="t15" style="font-size:38.3px;top:364.9px;left:2159.9px;transform-origin:0 0;transform-origin:50% 0;transform:translateX(-50%) scaleX(0.9400);">200</span><span class="t" id="t16" style="font-size:38.3px;top:364.9px;left:2326.3px;transform-origin:0 0;transform-origin:50% 0;transform:translateX(-50%) scaleX(0.9400);">220</span><span class="t" id="t17" style="font-size:38.3px;top:364.9px;left:2492.7px;transform-origin:0 0;transform-origin:50% 0;transform:translateX(-50%) scaleX(0.9400);">240</span><span class="t" id="t18" style="font-size:38.3px;top:364.9px;left:2659.1px;transform-origin:0 0;transform-origin:50% 0;transform:translateX(-50%) scaleX(0.9400);">260</span><span class="t" id="t19" style="font-size:38.3px;top:364.9px;left:2825.5px;transform-origin:0 0;transform-origin:50% 0;transform:translateX(-50%) scaleX(0.9400);">280</span><span class="t" id="t20" style="font-size:38.3px;top:364.9px;left:2991.9px;transform-origin:0 0;transform-origin:50% 0;transform:translateX(-50%) scaleX(0.9400);">300</span><span class="t" id="t21" style="font-size:38.7px;top:417.8px;left:1743.6px;transform-origin:0 0;transform-origin:50% 0;transform:translateX(-50%) scaleX(0.9415);">Time</span><div class="a" style="left:2210.7px;top:53.3px;width:422.5px;height:74.7px;background:#fff;border:2px solid #b0b0b0;box-sizing:border-box"></div><span class="t" id="t22" style="font-size:40.0px;top:70.7px;left:2230.7px;transform-origin:0 0;transform:scaleX(0.9428);">Amplitude</span><svg class="a" style="left:2479.0px;top:70.5px" width="21.6" height="27.8" viewBox="0 0 6.2 8"><path d="M1.5 3.6V2.2a1.6 1.6 0 0 1 3.2 0V3.6" fill="none" stroke="#111" stroke-width="1"/><rect x=".3" y="3.4" width="5.6" height="4.3" rx=".8" fill="#111"/><rect x="1.6" y="4.7" width="3" height="1.7" fill="#bbb"/></svg><svg class="a" style="left:2522.0px;top:69.0px" width="35.5" height="31.3" viewBox="0 0 10.2 9"><rect x="0" y="0" width="2" height="2" fill="#0c0"/><path d="M3.4 .8V6.2H9.6M3.4 6.2L.8 8.6" fill="none" stroke="#111" stroke-width="1"/><text x="5" y="4.6" font-family="Liberation Sans" font-size="5.2" fill="#111">Y</text></svg><svg class="a" style="left:2576.0px;top:72.0px" width="41.7" height="27.8" viewBox="0 0 12 8"><text x="0" y="3.6" font-family="Liberation Mono" font-weight="bold" font-size="4.3" fill="#111" textLength="11.5" lengthAdjust="spacingAndGlyphs">Y.YY</text><path d="M7.2 5.4h4l-2 2z" fill="#111"/></svg><div class="a" style="left:2804.7px;top:53.3px;width:179.0px;height:56.0px;background:#fff;border:2px solid #b4b4b4;box-sizing:border-box"></div><svg class="a" style="left:2817.8px;top:62.2px" width="38.3" height="38.3" viewBox="0 0 11 11"><rect x="0" y="1" width="2.2" height="2.2" fill="#0a0"/><path d="M5.5 1V10M1.5 5.5H10" stroke="#111" stroke-width="1"/><circle cx="5.5" cy="5.5" r="1.2" fill="#fff" stroke="#111" stroke-width=".6"/></svg><svg class="a" style="left:2873.3px;top:62.2px" width="41.7" height="38.3" viewBox="0 0 12 11"><rect x="0" y="1" width="2.2" height="2.2" fill="#0a0"/><circle cx="7.2" cy="4.2" r="3" fill="#fff" stroke="#111" stroke-width="1"/><path d="M5.7 4.2h3M7.2 2.7v3" stroke="#111" stroke-width=".8"/><path d="M5 6.4L1.5 9.8" stroke="#111" stroke-width="1.7"/><path d="M6.8 8.8h3.4l-1.7 1.7z" fill="#111"/></svg><svg class="a" style="left:2928.8px;top:62.2px" width="38.3" height="38.3" viewBox="0 0 11 11"><rect x="0" y="1" width="2.2" height="2.2" fill="#0a0"/><path d="M3.5 6V3.2M5 5.5V2M6.6 5.5V2M8.2 6V2.8M3.2 6.5C2 5 1.6 5.8 2.5 7.2L4.2 9.6H8.2C9.4 8.6 9.6 7 9.6 4.4" fill="none" stroke="#111" stroke-width=".9"/></svg><span class="t" id="t23" style="font-size:37.0px;top:175.3px;left:3058.6px;transform-origin:0 0;transform:scaleX(0.9308);">Errror</span><div class="a" style="left:3059.0px;top:227.5px;width:74.0px;height:74.0px;border-radius:50%;background:linear-gradient(#fdfdfd,#c8c8c8);box-shadow:3px 4px 6px rgba(0,0,0,.28)"></div><div class="a" style="left:3063.0px;top:231.5px;width:66.0px;height:66.0px;border-radius:50%;background:linear-gradient(#00b400,#006a00 60%,#004f00)"></div><div class="a" style="left:3242.4px;top:140.0px;width:43.5px;height:261.0px;background:linear-gradient(#eceef0,#d9dcde);border:2px solid #b8b8b8;box-sizing:border-box"></div><svg class="a" style="left:3248px;top:258px" width="32" height="26" viewBox="0 0 32 26"><g fill="#eee" stroke="#222" stroke-width="2.4"><path d="M6 18L16 6L26 18" fill="none"/><rect x="12" y="2" width="8" height="8"/><rect x="2" y="15" width="8" height="8"/><rect x="22" y="15" width="8" height="8"/></g></svg><div class="a" style="left:3290.5px;top:139.0px;width:979.0px;height:263.0px;background:#ffcc00;border:2px solid #c8c8c8;border-right:none;box-sizing:border-box"></div><span class="t" id="t24" style="font-size:38.5px;top:150.4px;left:3301.4px;transform-origin:0 0;transform:scaleX(0.9579);">M:\TDG\MVE Druzstevna\09-Projekty\Magneticke-polia\</span><span class="t" id="t25" style="font-size:38.5px;top:199.2px;left:3301.4px;transform-origin:0 0;transform:scaleX(0.9460);">Zdroj\VM190218-105451.tdms</span><div class="a" style="left:4269.5px;top:140.0px;width:87.5px;height:261.0px;background:linear-gradient(#eceef0,#d9dcde);border:2px solid #c4c4c4;box-sizing:border-box"></div><div class="a" style="left:4288.0px;top:300.0px;width:9.0px;height:8.0px;background:#111"></div><div class="a" style="left:4305.0px;top:300.0px;width:9.0px;height:8.0px;background:#111"></div><div class="a" style="left:4322.0px;top:300.0px;width:9.0px;height:8.0px;background:#111"></div><div class="a" style="left:3888.4px;top:431.7px;width:468.4px;height:69.0px;background:#ff8000;border:2px solid #c88040;box-sizing:border-box"></div><span class="t" id="t26" style="font-size:38.0px;top:450.8px;left:3901.0px;transform-origin:0 0;transform:scaleX(0.9883);">02-Wait</span><span class="t" id="t27" style="font-size:36.5px;top:518.8px;font-weight:bold;left:3250.0px;transform-origin:0 0;transform:scaleX(0.9456);">Kanal</span><div class="a" style="left:3247.7px;top:566.3px;width:144.5px;height:68.0px;background:#ffcc00;border:2px solid #d4c070;box-sizing:border-box"></div><span class="t" id="t28" style="font-size:36.0px;top:582.1px;font-weight:bold;left:3260.0px;transform-origin:0 0;">2</span><div class="a" style="left:3399.5px;top:566.3px;width:29.0px;height:29.0px;border:2px solid #e4e4e4;box-sizing:border-box;background:#f3f3f3"></div><div class="a" style="left:3399.5px;top:605.0px;width:29.0px;height:29.0px;border:2px solid #e4e4e4;box-sizing:border-box;background:#f3f3f3"></div><div class="a" style="left:3456.3px;top:531.2px;width:364.5px;height:121.6px;border:3px solid #8c8c8c;border-radius:9px;box-sizing:border-box;background:linear-gradient(#fcfcfc,#f1f1f1 50%,#e9e9e9);box-shadow:5px 6px 6px rgba(0,0,0,.32)"></div><svg class="a" style="left:3478px;top:566px" width="46" height="48" viewBox="0 0 46 48"><rect x="1" y="1" width="43" height="9" fill="#4caf50" stroke="#2e7d32" stroke-width="1"/><path d="M22.5 10L42 30H31V46H14V30H3z" fill="#2eb52e" stroke="#1b7a1b" stroke-width="1.5"/><path d="M22.5 14L35 28H28V44H20V20z" fill="#6fdc6f" opacity=".55"/></svg><span class="t" id="t29" style="font-size:37.5px;top:576.8px;font-weight:bold;left:3569.3px;transform-origin:0 0;transform:scaleX(0.8987);">RELOAD</span><div class="a" style="left:3893.5px;top:531.2px;width:467.5px;height:121.6px;border:3px solid #8c8c8c;border-radius:9px;box-sizing:border-box;background:linear-gradient(#fcfcfc,#f1f1f1 50%,#e9e9e9);box-shadow:5px 6px 6px rgba(0,0,0,.32)"></div><svg class="a" style="left:3914px;top:566px" width="52" height="52" viewBox="0 0 52 52"><circle cx="26" cy="26" r="24" fill="#dbeaf8"/><path d="M8 22A19 19 0 0 1 41 13L46 8V25H29L35 19A11 11 0 0 0 16 23z" fill="#3f8ee0" stroke="#2a6fc0" stroke-width="1.2"/><path d="M44 30A19 19 0 0 1 11 39L6 44V27H23L17 33A11 11 0 0 0 36 29z" fill="#5aa2ea" stroke="#2a6fc0" stroke-width="1.2"/></svg><span class="t" id="t30" style="font-size:37.5px;top:576.8px;font-weight:bold;left:4000.0px;transform-origin:0 0;transform:scaleX(0.9005);">RE-CALCULATE</span><span class="t" id="t31" style="font-size:37.0px;top:694.3px;font-weight:bold;left:3255.3px;transform-origin:0 0;transform:scaleX(0.9595);">Analytic Wavelet?</span><div class="a" style="left:3686.4px;top:684.0px;width:136.6px;height:54.0px;border-radius:50%;background:linear-gradient(#c9c9c9,#e9e9e9 45%,#f4f4f4);border:3px solid #9a9a9a;box-sizing:border-box;box-shadow:3px 4px 5px rgba(0,0,0,.25)"></div><svg class="a" style="left:3762.9px;top:693.2px" width="49.2" height="33.5" viewBox="0 0 100 100" preserveAspectRatio="none"><path d="M2 4H40C80 4 98 30 98 50C98 70 80 96 40 96H2z" fill="#ffc81e" stroke="#9a8040" stroke-width="4"/></svg><span class="t" id="t32" style="font-size:37.0px;top:777.0px;font-weight:bold;left:3255.0px;transform-origin:0 0;transform:scaleX(0.8659);">scales</span><div class="a" style="left:3644.7px;top:754.0px;width:181.0px;height:68.4px;background:#ffcc00;border:2px solid #cdb870;box-sizing:border-box"></div><span class="t" id="t33" style="font-size:36.5px;top:769.9px;font-weight:bold;left:3658.3px;transform-origin:0 0;transform:scaleX(1.0394);">1024</span><span class="t" id="t34" style="font-size:37.0px;top:839.7px;font-weight:bold;left:3255.0px;transform-origin:0 0;transform:scaleX(1.0037);">time steps (AUTO=-1)</span><div class="a" style="left:3644.7px;top:824.4px;width:181.0px;height:68.0px;background:#ffcc00;border:2px solid #cdb870;box-sizing:border-box"></div><span class="t" id="t35" style="font-size:36.5px;top:838.1px;font-weight:bold;left:3658.3px;transform-origin:0 0;transform:scaleX(1.0164);">-1</span><div class="a" style="left:3893.5px;top:874.6px;width:467.5px;height:121.2px;border:3px solid #8c8c8c;border-radius:9px;box-sizing:border-box;background:linear-gradient(#fcfcfc,#f1f1f1 50%,#e9e9e9);box-shadow:5px 6px 6px rgba(0,0,0,.32)"></div><div class="a" style="left:3919.6px;top:918.8px;width:38.2px;height:37.7px;background:#ff0a14;border:1px solid #c00;box-sizing:border-box"></div><span class="t" id="t36" style="font-size:35.0px;top:921.9px;font-weight:bold;left:4060.8px;transform-origin:0 0;transform:scaleX(0.8574);">UKONČIŤ</span><span class="t" id="t37" style="font-size:37.0px;top:1029.7px;font-weight:bold;left:3255.0px;transform-origin:0 0;transform:scaleX(0.9791);">normalization</span><div class="a" style="left:3252.8px;top:1077.0px;width:573.0px;height:73.0px;background:#ffcc00;border:2px solid #cdb870;box-sizing:border-box"></div><span class="t" id="t38" style="font-size:37.0px;top:1095.1px;font-weight:bold;left:3265.3px;transform-origin:0 0;transform:scaleX(0.9951);">Amplitude</span><span class="t" id="t39" style="font-size:37.0px;top:1161.4px;font-weight:bold;left:3255.0px;transform-origin:0 0;transform:scaleX(0.9549);">scale sampling method</span><div class="a" style="left:3252.8px;top:1208.8px;width:573.0px;height:68.0px;background:#ffcc00;border:2px solid #cdb870;box-sizing:border-box"></div><span class="t" id="t40" style="font-size:37.0px;top:1226.7px;font-weight:bold;left:3265.3px;transform-origin:0 0;transform:scaleX(0.9399);">Even frequency</span><div class="a" style="left:3257.8px;top:1317.6px;width:835.7px;height:75.4px;background:#fff;border:2px solid #b0b0b0;box-sizing:border-box"></div><span class="t" id="t41" style="font-size:38.5px;top:1337.8px;left:3278.0px;transform-origin:0 0;transform:scaleX(0.9272);">Time</span><svg class="a" style="left:3526.0px;top:1337.5px" width="21.6" height="27.8" viewBox="0 0 6.2 8"><path d="M1.5 3.6V2.2a1.6 1.6 0 0 1 3.2 0V3.6" fill="none" stroke="#111" stroke-width="1"/><rect x=".3" y="3.4" width="5.6" height="4.3" rx=".8" fill="#111"/><rect x="1.6" y="4.7" width="3" height="1.7" fill="#bbb"/></svg><svg class="a" style="left:3569.0px;top:1335.0px" width="35.5" height="31.3" viewBox="0 0 10.2 9"><rect x="0" y="0" width="2" height="2" fill="#0c0"/><path d="M3.4 .8V6.2H9.6M3.4 6.2L.8 8.6" fill="none" stroke="#111" stroke-width="1"/><text x="5" y="4.6" font-family="Liberation Sans" font-size="5.2" fill="#111">X</text></svg><svg class="a" style="left:3623.5px;top:1338.5px" width="41.7" height="27.8" viewBox="0 0 12 8"><text x="0" y="3.6" font-family="Liberation Mono" font-weight="bold" font-size="4.3" fill="#111" textLength="11.5" lengthAdjust="spacingAndGlyphs">X.XX</text><path d="M7.2 5.4h4l-2 2z" fill="#111"/></svg><span class="t" id="t42" style="font-size:38.5px;top:1337.8px;left:3691.5px;transform-origin:0 0;transform:scaleX(0.9830);">Amplitude</span><svg class="a" style="left:3940.5px;top:1337.5px" width="21.6" height="27.8" viewBox="0 0 6.2 8"><path d="M1.5 3.6V2.2a1.6 1.6 0 0 1 3.2 0V3.6" fill="none" stroke="#111" stroke-width="1"/><rect x=".3" y="3.4" width="5.6" height="4.3" rx=".8" fill="#111"/><rect x="1.6" y="4.7" width="3" height="1.7" fill="#bbb"/></svg><svg class="a" style="left:3983.5px;top:1335.0px" width="35.5" height="31.3" viewBox="0 0 10.2 9"><rect x="0" y="0" width="2" height="2" fill="#0c0"/><path d="M3.4 .8V6.2H9.6M3.4 6.2L.8 8.6" fill="none" stroke="#111" stroke-width="1"/><text x="5" y="4.6" font-family="Liberation Sans" font-size="5.2" fill="#111">Y</text></svg><svg class="a" style="left:4037.5px;top:1338.5px" width="41.7" height="27.8" viewBox="0 0 12 8"><text x="0" y="3.6" font-family="Liberation Mono" font-weight="bold" font-size="4.3" fill="#111" textLength="11.5" lengthAdjust="spacingAndGlyphs">Y.YY</text><path d="M7.2 5.4h4l-2 2z" fill="#111"/></svg><div class="a" style="left:4182.4px;top:1336.7px;width:179.4px;height:57.3px;background:#fff;border:2px solid #b4b4b4;box-sizing:border-box"></div><svg class="a" style="left:4195.6px;top:1346.2px" width="38.3" height="38.3" viewBox="0 0 11 11"><rect x="0" y="1" width="2.2" height="2.2" fill="#0a0"/><path d="M5.5 1V10M1.5 5.5H10" stroke="#111" stroke-width="1"/><circle cx="5.5" cy="5.5" r="1.2" fill="#fff" stroke="#111" stroke-width=".6"/></svg><svg class="a" style="left:4251.2px;top:1346.2px" width="41.7" height="38.3" viewBox="0 0 12 11"><rect x="0" y="1" width="2.2" height="2.2" fill="#0a0"/><circle cx="7.2" cy="4.2" r="3" fill="#fff" stroke="#111" stroke-width="1"/><path d="M5.7 4.2h3M7.2 2.7v3" stroke="#111" stroke-width=".8"/><path d="M5 6.4L1.5 9.8" stroke="#111" stroke-width="1.7"/><path d="M6.8 8.8h3.4l-1.7 1.7z" fill="#111"/></svg><svg class="a" style="left:4306.8px;top:1346.2px" width="38.3" height="38.3" viewBox="0 0 11 11"><rect x="0" y="1" width="2.2" height="2.2" fill="#0a0"/><path d="M3.5 6V3.2M5 5.5V2M6.6 5.5V2M8.2 6V2.8M3.2 6.5C2 5 1.6 5.8 2.5 7.2L4.2 9.6H8.2C9.4 8.6 9.6 7 9.6 4.4" fill="none" stroke="#111" stroke-width=".9"/></svg><div class="a" style="left:3309.6px;top:1422.6px;width:1060.7px;height:469.9px;background:#fff;border:2.5px solid #b0b0b0;box-sizing:border-box"></div><svg class="a" style="left:0;top:0" width="4480" height="1910" viewBox="0 0 4480 1910"><rect x="3399.8" y="1425.6" width="3" height="463.9" fill="#c9c9f5"/><rect x="3487.5" y="1425.6" width="3" height="463.9" fill="#c9c9f5"/><rect x="3575.1" y="1425.6" width="3" height="463.9" fill="#c9c9f5"/><rect x="3662.8" y="1425.6" width="3" height="463.9" fill="#c9c9f5"/><rect x="3750.5" y="1425.6" width="3" height="463.9" fill="#c9c9f5"/><rect x="3838.2" y="1425.6" width="3" height="463.9" fill="#c9c9f5"/><rect x="3925.9" y="1425.6" width="3" height="463.9" fill="#c9c9f5"/><rect x="4013.5" y="1425.6" width="3" height="463.9" fill="#c9c9f5"/><rect x="4101.2" y="1425.6" width="3" height="463.9" fill="#c9c9f5"/><rect x="4188.9" y="1425.6" width="3" height="463.9" fill="#c9c9f5"/><rect x="4276.6" y="1425.6" width="3" height="463.9" fill="#c9c9f5"/><rect x="3312.6" y="1504.7" width="1054.7" height="3" fill="#c9c9f5"/><rect x="3312.6" y="1581.3" width="1054.7" height="3" fill="#c9c9f5"/><rect x="3312.6" y="1657.9" width="1054.7" height="3" fill="#c9c9f5"/><rect x="3312.6" y="1734.5" width="1054.7" height="3" fill="#c9c9f5"/><rect x="3312.6" y="1811.1" width="1054.7" height="3" fill="#c9c9f5"/><polygon points="3312.6,1609.9 3314.1,1607.4 3315.6,1614.7 3317.1,1602.4 3318.6,1599.9 3320.1,1597.3 3321.6,1598.7 3323.1,1607.4 3324.6,1602.8 3326.1,1607.8 3327.6,1596.5 3329.2,1614.5 3330.7,1599.5 3332.2,1595.3 3333.7,1595.2 3335.2,1612.2 3336.7,1603.9 3338.2,1594.7 3339.7,1594.8 3341.2,1594.4 3342.7,1601.4 3344.2,1594.1 3345.7,1594.0 3347.2,1597.4 3348.8,1595.9 3350.3,1600.0 3351.8,1604.0 3353.3,1598.7 3354.8,1599.6 3356.3,1603.3 3357.8,1610.1 3359.3,1602.5 3360.8,1610.5 3362.3,1604.4 3363.8,1613.7 3365.3,1606.6 3366.8,1612.5 3368.4,1611.2 3369.9,1610.6 3371.4,1618.4 3372.9,1638.3 3374.4,1616.7 3375.9,1616.6 3377.4,1618.1 3378.9,1619.6 3380.4,1621.1 3381.9,1623.5 3383.4,1626.4 3384.9,1631.1 3386.4,1632.1 3388.0,1635.0 3389.5,1642.5 3391.0,1640.6 3392.5,1646.5 3394.0,1646.3 3395.5,1667.3 3397.0,1652.0 3398.5,1654.9 3400.0,1657.7 3401.5,1668.7 3403.0,1663.4 3404.5,1663.6 3406.0,1662.6 3407.6,1661.5 3409.1,1664.4 3410.6,1659.3 3412.1,1658.2 3413.6,1657.7 3415.1,1656.1 3416.6,1655.0 3418.1,1657.7 3419.6,1657.3 3421.1,1651.8 3422.6,1656.0 3424.1,1643.5 3425.6,1638.0 3427.2,1631.7 3428.7,1637.7 3430.2,1621.6 3431.7,1616.6 3433.2,1612.2 3434.7,1613.4 3436.2,1607.4 3437.7,1633.3 3439.2,1598.5 3440.7,1597.0 3442.2,1595.5 3443.7,1602.9 3445.2,1599.7 3446.8,1603.4 3448.3,1593.4 3449.8,1591.3 3451.3,1586.5 3452.8,1590.2 3454.3,1587.8 3455.8,1581.9 3457.3,1581.3 3458.8,1581.2 3460.3,1585.1 3461.8,1581.0 3463.3,1595.6 3464.8,1580.7 3466.4,1580.6 3467.9,1581.8 3469.4,1580.3 3470.9,1580.2 3472.4,1580.2 3473.9,1591.8 3475.4,1590.0 3476.9,1579.7 3478.4,1579.6 3479.9,1579.5 3481.4,1583.8 3482.9,1579.2 3484.4,1586.2 3486.0,1579.0 3487.5,1582.3 3489.0,1578.7 3490.5,1581.1 3492.0,1581.8 3493.5,1578.3 3495.0,1610.7 3496.5,1578.1 3498.0,1596.0 3499.5,1577.8 3501.0,1577.7 3502.5,1595.8 3504.0,1585.3 3505.6,1577.3 3507.1,1578.7 3508.6,1590.6 3510.1,1579.0 3511.6,1576.8 3513.1,1579.2 3514.6,1576.6 3516.1,1583.8 3517.6,1576.7 3519.1,1577.2 3520.6,1577.7 3522.1,1578.2 3523.6,1578.7 3525.2,1584.8 3526.7,1582.1 3528.2,1588.8 3529.7,1594.3 3531.2,1581.3 3532.7,1596.1 3534.2,1582.3 3535.7,1597.7 3537.2,1591.1 3538.7,1583.8 3540.2,1586.0 3541.7,1584.8 3543.2,1585.3 3544.8,1585.8 3546.3,1586.3 3547.8,1589.3 3549.3,1584.4 3550.8,1587.3 3552.3,1582.0 3553.8,1580.8 3555.3,1579.6 3556.8,1588.3 3558.3,1578.8 3559.8,1580.7 3561.3,1574.8 3562.8,1578.9 3564.4,1572.4 3565.9,1583.6 3567.4,1575.6 3568.9,1574.4 3570.4,1567.6 3571.9,1566.4 3573.4,1588.8 3574.9,1571.8 3576.4,1574.5 3577.9,1582.0 3579.4,1581.9 3580.9,1582.6 3582.4,1594.8 3583.9,1600.9 3585.5,1600.3 3587.0,1609.2 3588.5,1598.3 3590.0,1598.9 3591.5,1601.6 3593.0,1608.2 3594.5,1607.2 3596.0,1609.8 3597.5,1623.8 3599.0,1614.5 3600.5,1606.9 3602.0,1604.9 3603.5,1602.9 3605.1,1607.2 3606.6,1606.5 3608.1,1601.0 3609.6,1594.8 3611.1,1592.8 3612.6,1590.8 3614.1,1588.8 3615.6,1597.4 3617.1,1584.8 3618.6,1582.8 3620.1,1580.8 3621.6,1584.6 3623.1,1577.9 3624.7,1574.7 3626.2,1581.9 3627.7,1571.7 3629.2,1571.6 3630.7,1571.7 3632.2,1573.4 3633.7,1572.5 3635.2,1580.5 3636.7,1572.3 3638.2,1572.5 3639.7,1581.3 3641.2,1578.2 3642.7,1572.9 3644.3,1573.1 3645.8,1574.9 3647.3,1579.1 3648.8,1578.4 3650.3,1578.4 3651.8,1585.4 3653.3,1576.1 3654.8,1577.6 3656.3,1574.9 3657.8,1575.3 3659.3,1576.7 3660.8,1576.0 3662.3,1584.5 3663.9,1595.5 3665.4,1577.2 3666.9,1577.5 3668.4,1584.9 3669.9,1593.7 3671.4,1580.1 3672.9,1588.1 3674.4,1591.1 3675.9,1579.9 3677.4,1591.7 3678.9,1588.1 3680.4,1580.9 3681.9,1581.3 3683.5,1589.3 3685.0,1581.2 3686.5,1577.4 3688.0,1575.9 3689.5,1574.4 3691.0,1585.4 3692.5,1580.5 3694.0,1582.1 3695.5,1586.6 3697.0,1566.9 3698.5,1565.3 3700.0,1569.4 3701.5,1562.3 3703.1,1561.2 3704.6,1580.0 3706.1,1561.8 3707.6,1573.5 3709.1,1563.4 3710.6,1559.7 3712.1,1559.4 3713.6,1559.1 3715.1,1563.2 3716.6,1574.6 3718.1,1558.2 3719.6,1576.2 3721.1,1557.6 3722.7,1557.3 3724.2,1559.4 3725.7,1556.7 3727.2,1559.4 3728.7,1560.9 3730.2,1566.3 3731.7,1556.7 3733.2,1558.8 3734.7,1557.4 3736.2,1557.2 3737.7,1557.3 3739.2,1557.5 3740.7,1557.6 3742.3,1558.5 3743.8,1565.6 3745.3,1558.1 3746.8,1582.1 3748.3,1558.8 3749.8,1558.5 3751.3,1558.7 3752.8,1558.8 3754.3,1570.0 3755.8,1560.3 3757.3,1567.0 3758.8,1569.3 3760.3,1575.6 3761.9,1563.7 3763.4,1564.1 3764.9,1564.8 3766.4,1565.6 3767.9,1566.4 3769.4,1567.1 3770.9,1574.4 3772.4,1573.0 3773.9,1569.4 3775.4,1570.1 3776.9,1572.7 3778.4,1580.7 3779.9,1575.2 3781.5,1576.4 3783.0,1575.3 3784.5,1576.8 3786.0,1576.2 3787.5,1581.7 3789.0,1578.1 3790.5,1590.8 3792.0,1589.7 3793.5,1580.7 3795.0,1581.6 3796.5,1582.5 3798.0,1591.0 3799.5,1584.3 3801.1,1603.3 3802.6,1586.7 3804.1,1606.1 3805.6,1606.4 3807.1,1585.7 3808.6,1597.3 3810.1,1600.0 3811.6,1590.0 3813.1,1584.4 3814.6,1584.1 3816.1,1583.8 3817.6,1583.5 3819.1,1591.8 3820.7,1582.9 3822.2,1583.4 3823.7,1590.7 3825.2,1587.3 3826.7,1581.7 3828.2,1581.4 3829.7,1581.0 3831.2,1580.5 3832.7,1580.1 3834.2,1592.1 3835.7,1581.7 3837.2,1578.7 3838.7,1578.3 3840.3,1577.8 3841.8,1577.4 3843.3,1576.9 3844.8,1576.5 3846.3,1581.5 3847.8,1576.3 3849.3,1575.1 3850.8,1574.6 3852.3,1580.0 3853.8,1573.8 3855.3,1585.2 3856.8,1574.0 3858.3,1588.5 3859.9,1591.8 3861.4,1588.5 3862.9,1572.9 3864.4,1579.4 3865.9,1572.6 3867.4,1579.1 3868.9,1572.3 3870.4,1572.2 3871.9,1577.7 3873.4,1572.8 3874.9,1582.7 3876.4,1571.6 3877.9,1571.4 3879.5,1569.6 3881.0,1572.2 3882.5,1566.1 3884.0,1565.0 3885.5,1559.1 3887.0,1561.7 3888.5,1553.8 3890.0,1551.2 3891.5,1548.5 3893.0,1550.2 3894.5,1543.2 3896.0,1555.1 3897.5,1538.0 3899.0,1541.4 3900.6,1540.3 3902.1,1544.5 3903.6,1534.7 3905.1,1534.2 3906.6,1544.9 3908.1,1533.3 3909.6,1532.9 3911.1,1534.1 3912.6,1536.1 3914.1,1544.1 3915.6,1531.1 3917.1,1530.6 3918.6,1530.2 3920.2,1537.6 3921.7,1531.5 3923.2,1536.3 3924.7,1528.6 3926.2,1532.4 3927.7,1527.7 3929.2,1534.2 3930.7,1526.9 3932.2,1531.4 3933.7,1527.2 3935.2,1527.1 3936.7,1529.4 3938.2,1525.0 3939.8,1529.3 3941.3,1536.6 3942.8,1523.9 3944.3,1540.1 3945.8,1523.1 3947.3,1522.8 3948.8,1531.1 3950.3,1522.0 3951.8,1522.1 3953.3,1523.3 3954.8,1526.9 3956.3,1521.4 3957.8,1521.6 3959.4,1530.9 3960.9,1531.5 3962.4,1529.5 3963.9,1522.4 3965.4,1528.7 3966.9,1531.9 3968.4,1524.8 3969.9,1523.1 3971.4,1523.3 3972.9,1523.5 3974.4,1522.6 3975.9,1530.6 3977.4,1516.6 3979.0,1513.6 3980.5,1518.9 3982.0,1508.1 3983.5,1513.3 3985.0,1521.0 3986.5,1498.5 3988.0,1495.5 3989.5,1494.6 3991.0,1493.1 3992.5,1493.9 3994.0,1492.9 3995.5,1492.4 3997.0,1500.6 3998.6,1491.9 4000.1,1491.6 4001.6,1491.7 4003.1,1491.1 4004.6,1491.3 4006.1,1501.7 4007.6,1496.1 4009.1,1498.2 4010.6,1514.9 4012.1,1497.0 4013.6,1498.1 4015.1,1506.4 4016.6,1500.4 4018.2,1501.7 4019.7,1502.7 4021.2,1503.8 4022.7,1504.9 4024.2,1506.0 4025.7,1507.0 4027.2,1508.5 4028.7,1508.9 4030.2,1521.4 4031.7,1515.0 4033.2,1511.7 4034.7,1512.6 4036.2,1521.2 4037.8,1519.0 4039.3,1516.0 4040.8,1520.6 4042.3,1518.0 4043.8,1518.3 4045.3,1528.6 4046.8,1518.3 4048.3,1518.1 4049.8,1520.3 4051.3,1521.9 4052.8,1525.7 4054.3,1529.6 4055.8,1517.2 4057.4,1518.2 4058.9,1530.1 4060.4,1516.6 4061.9,1518.5 4063.4,1520.8 4064.9,1531.8 4066.4,1518.2 4067.9,1519.8 4069.4,1523.6 4070.9,1522.6 4072.4,1524.1 4073.9,1542.8 4075.4,1532.6 4077.0,1530.5 4078.5,1530.2 4080.0,1531.7 4081.5,1535.6 4083.0,1541.5 4084.5,1542.0 4086.0,1536.8 4087.5,1539.9 4089.0,1555.1 4090.5,1540.3 4092.0,1541.6 4093.5,1539.6 4095.0,1569.2 4096.6,1541.9 4098.1,1541.3 4099.6,1545.6 4101.1,1547.2 4102.6,1543.5 4104.1,1543.5 4105.6,1546.7 4107.1,1543.7 4108.6,1544.0 4110.1,1548.7 4111.6,1543.7 4113.1,1546.3 4114.6,1552.0 4116.2,1548.5 4117.7,1543.7 4119.2,1552.3 4120.7,1543.7 4122.2,1543.7 4123.7,1546.8 4125.2,1549.7 4126.7,1543.7 4128.2,1546.8 4129.7,1565.5 4131.2,1543.7 4132.7,1543.7 4134.2,1549.4 4135.8,1550.6 4137.3,1547.4 4138.8,1552.8 4140.3,1543.7 4141.8,1543.7 4143.3,1543.7 4144.8,1549.5 4146.3,1543.7 4147.8,1551.4 4149.3,1550.5 4150.8,1547.1 4152.3,1543.7 4153.8,1543.7 4155.4,1548.9 4156.9,1544.1 4158.4,1566.0 4159.9,1549.8 4161.4,1545.0 4162.9,1545.3 4164.4,1545.6 4165.9,1555.5 4167.4,1561.4 4168.9,1556.3 4170.4,1546.9 4171.9,1563.7 4173.4,1572.2 4175.0,1547.8 4176.5,1571.7 4178.0,1561.0 4179.5,1548.7 4181.0,1548.9 4182.5,1550.0 4184.0,1549.2 4185.5,1549.3 4187.0,1549.5 4188.5,1551.5 4190.0,1549.8 4191.5,1549.9 4193.0,1566.0 4194.6,1562.6 4196.1,1550.4 4197.6,1567.9 4199.1,1552.3 4200.6,1559.2 4202.1,1551.0 4203.6,1557.9 4205.1,1551.3 4206.6,1560.2 4208.1,1555.0 4209.6,1552.9 4211.1,1551.3 4212.6,1551.3 4214.1,1551.4 4215.7,1551.3 4217.2,1554.9 4218.7,1564.4 4220.2,1553.7 4221.7,1573.0 4223.2,1551.3 4224.7,1551.3 4226.2,1558.4 4227.7,1551.3 4229.2,1555.5 4230.7,1562.5 4232.2,1552.9 4233.7,1552.0 4235.3,1552.3 4236.8,1552.6 4238.3,1553.3 4239.8,1553.2 4241.3,1553.5 4242.8,1553.8 4244.3,1570.7 4245.8,1573.2 4247.3,1558.8 4248.8,1558.4 4250.3,1575.7 4251.8,1555.6 4253.3,1555.9 4254.9,1561.2 4256.4,1558.5 4257.9,1557.8 4259.4,1558.7 4260.9,1564.0 4262.4,1563.1 4263.9,1561.4 4265.4,1562.3 4266.9,1563.2 4268.4,1567.9 4269.9,1565.6 4271.4,1566.6 4272.9,1572.3 4274.5,1572.1 4276.0,1568.7 4277.5,1569.6 4279.0,1582.5 4280.5,1572.3 4282.0,1571.5 4283.5,1579.6 4285.0,1571.8 4286.5,1572.0 4288.0,1585.1 4289.5,1586.4 4291.0,1572.4 4292.5,1577.5 4294.1,1577.9 4295.6,1573.3 4297.1,1573.0 4298.6,1580.3 4300.1,1575.9 4301.6,1573.5 4303.1,1573.6 4304.6,1573.8 4306.1,1573.9 4307.6,1574.6 4309.1,1574.2 4310.6,1591.9 4312.1,1574.5 4313.7,1578.4 4315.2,1574.8 4316.7,1576.5 4318.2,1577.2 4319.7,1575.3 4321.2,1575.4 4322.7,1577.0 4324.2,1577.0 4325.7,1575.9 4327.2,1588.9 4328.7,1577.0 4330.2,1576.4 4331.7,1577.4 4333.3,1602.1 4334.8,1580.4 4336.3,1590.0 4337.8,1583.4 4339.3,1587.3 4340.8,1589.5 4342.3,1596.2 4343.8,1592.2 4345.3,1593.5 4346.8,1595.2 4348.3,1594.3 4349.8,1595.5 4351.3,1607.2 4352.9,1601.9 4354.4,1625.0 4355.9,1611.0 4357.4,1605.1 4358.9,1604.7 4360.4,1606.4 4361.9,1607.6 4363.4,1615.6 4364.9,1619.5 4366.4,1611.6 4366.4,1792.8 4364.9,1821.9 4363.4,1832.9 4361.9,1838.1 4360.4,1836.0 4358.9,1828.8 4357.4,1831.2 4355.9,1826.6 4354.4,1827.6 4352.9,1816.9 4351.3,1811.0 4349.8,1812.0 4348.3,1795.3 4346.8,1819.6 4345.3,1801.7 4343.8,1817.4 4342.3,1816.2 4340.8,1796.4 4339.3,1806.2 4337.8,1812.2 4336.3,1809.8 4334.8,1805.4 4333.3,1809.5 4331.7,1806.9 4330.2,1807.5 4328.7,1803.0 4327.2,1807.2 4325.7,1807.1 4324.2,1806.3 4322.7,1806.8 4321.2,1806.6 4319.7,1806.5 4318.2,1804.0 4316.7,1806.2 4315.2,1806.0 4313.7,1805.9 4312.1,1800.6 4310.6,1800.5 4309.1,1805.4 4307.6,1805.3 4306.1,1805.1 4304.6,1797.6 4303.1,1790.8 4301.6,1800.8 4300.1,1802.9 4298.6,1802.3 4297.1,1801.6 4295.6,1801.0 4294.1,1780.8 4292.5,1799.8 4291.0,1797.6 4289.5,1798.6 4288.0,1798.0 4286.5,1797.4 4285.0,1783.1 4283.5,1796.0 4282.0,1793.6 4280.5,1783.0 4279.0,1794.9 4277.5,1794.7 4276.0,1791.3 4274.5,1794.4 4272.9,1794.3 4271.4,1790.3 4269.9,1791.6 4268.4,1786.6 4266.9,1789.2 4265.4,1793.5 4263.9,1786.7 4262.4,1791.1 4260.9,1788.8 4259.4,1792.9 4257.9,1784.5 4256.4,1792.6 4254.9,1792.1 4253.3,1759.9 4251.8,1792.1 4250.3,1770.1 4248.8,1791.8 4247.3,1789.7 4245.8,1788.0 4244.3,1783.6 4242.8,1791.2 4241.3,1791.1 4239.8,1790.9 4238.3,1787.3 4236.8,1790.6 4235.3,1783.5 4233.7,1790.3 4232.2,1783.7 4230.7,1790.0 4229.2,1785.1 4227.7,1781.9 4226.2,1774.6 4224.7,1787.8 4223.2,1784.1 4221.7,1789.1 4220.2,1764.4 4218.7,1770.6 4217.2,1788.7 4215.7,1788.5 4214.1,1779.3 4212.6,1783.6 4211.1,1786.4 4209.6,1786.9 4208.1,1787.8 4206.6,1784.2 4205.1,1784.5 4203.6,1770.9 4202.1,1774.5 4200.6,1787.9 4199.1,1787.5 4197.6,1786.1 4196.1,1785.2 4194.6,1768.1 4193.0,1789.9 4191.5,1790.2 4190.0,1786.8 4188.5,1790.8 4187.0,1780.7 4185.5,1788.6 4184.0,1791.7 4182.5,1792.0 4181.0,1792.3 4179.5,1792.5 4178.0,1792.2 4176.5,1792.1 4175.0,1780.3 4173.4,1784.7 4171.9,1775.2 4170.4,1791.5 4168.9,1791.4 4167.4,1777.6 4165.9,1779.7 4164.4,1790.9 4162.9,1790.8 4161.4,1788.7 4159.9,1790.5 4158.4,1783.2 4156.9,1787.6 4155.4,1790.0 4153.8,1786.6 4152.3,1788.8 4150.8,1785.0 4149.3,1783.6 4147.8,1785.5 4146.3,1788.3 4144.8,1782.9 4143.3,1776.9 4141.8,1787.4 4140.3,1777.6 4138.8,1781.9 4137.3,1783.5 4135.8,1786.2 4134.2,1780.9 4132.7,1770.2 4131.2,1785.3 4129.7,1785.0 4128.2,1776.4 4126.7,1784.7 4125.2,1784.5 4123.7,1783.6 4122.2,1784.2 4120.7,1784.1 4119.2,1783.9 4117.7,1781.1 4116.2,1781.3 4114.6,1773.9 4113.1,1783.3 4111.6,1773.6 4110.1,1783.0 4108.6,1779.7 4107.1,1782.7 4105.6,1774.7 4104.1,1767.8 4102.6,1769.9 4101.1,1780.5 4099.6,1781.4 4098.1,1770.7 4096.6,1780.8 4095.0,1780.5 4093.5,1780.2 4092.0,1771.6 4090.5,1770.7 4089.0,1779.1 4087.5,1766.8 4086.0,1768.1 4084.5,1770.8 4083.0,1775.7 4081.5,1762.7 4080.0,1759.3 4078.5,1777.0 4077.0,1776.4 4075.4,1775.8 4073.9,1769.4 4072.4,1774.6 4070.9,1768.9 4069.4,1767.1 4067.9,1746.7 4066.4,1765.9 4064.9,1762.4 4063.4,1770.3 4061.9,1764.3 4060.4,1760.8 4058.9,1760.4 4057.4,1768.5 4055.8,1768.0 4054.3,1767.4 4052.8,1761.0 4051.3,1766.6 4049.8,1756.3 4048.3,1743.7 4046.8,1765.5 4045.3,1761.0 4043.8,1763.3 4042.3,1734.9 4040.8,1756.9 4039.3,1763.6 4037.8,1758.2 4036.2,1758.3 4034.7,1752.3 4033.2,1761.6 4031.7,1760.5 4030.2,1759.3 4028.7,1758.2 4027.2,1757.1 4025.7,1755.9 4024.2,1747.2 4022.7,1753.7 4021.2,1747.5 4019.7,1744.0 4018.2,1750.3 4016.6,1740.0 4015.1,1748.0 4013.6,1747.1 4012.1,1743.0 4010.6,1745.2 4009.1,1732.8 4007.6,1743.8 4006.1,1744.0 4004.6,1731.3 4003.1,1744.5 4001.6,1744.1 4000.1,1743.8 3998.6,1743.3 3997.0,1739.9 3995.5,1742.6 3994.0,1723.6 3992.5,1732.2 3991.0,1745.8 3989.5,1744.5 3988.0,1730.5 3986.5,1749.4 3985.0,1750.8 3983.5,1759.5 3982.0,1758.1 3980.5,1766.0 3979.0,1768.6 3977.4,1760.3 3975.9,1773.9 3974.4,1775.9 3972.9,1776.2 3971.4,1748.6 3969.9,1771.9 3968.4,1772.1 3966.9,1769.3 3965.4,1773.2 3963.9,1766.8 3962.4,1766.6 3960.9,1766.0 3959.4,1770.1 3957.8,1769.4 3956.3,1763.0 3954.8,1767.9 3953.3,1767.5 3951.8,1767.8 3950.3,1767.3 3948.8,1768.4 3947.3,1768.7 3945.8,1764.7 3944.3,1758.8 3942.8,1768.5 3941.3,1767.9 3939.8,1744.2 3938.2,1770.5 3936.7,1770.8 3935.2,1752.6 3933.7,1769.1 3932.2,1771.7 3930.7,1772.0 3929.2,1772.3 3927.7,1772.6 3926.2,1762.8 3924.7,1773.2 3923.2,1773.5 3921.7,1772.4 3920.2,1761.7 3918.6,1763.9 3917.1,1774.7 3915.6,1775.0 3914.1,1774.7 3912.6,1765.6 3911.1,1765.9 3909.6,1756.3 3908.1,1760.7 3906.6,1776.8 3905.1,1772.2 3903.6,1777.4 3902.1,1767.4 3900.6,1776.3 3899.0,1779.4 3897.5,1783.5 3896.0,1785.0 3894.5,1775.9 3893.0,1788.0 3891.5,1789.5 3890.0,1791.0 3888.5,1788.6 3887.0,1794.0 3885.5,1795.5 3884.0,1786.6 3882.5,1793.9 3881.0,1798.0 3879.5,1801.5 3877.9,1794.7 3876.4,1802.6 3874.9,1795.8 3873.4,1799.5 3871.9,1800.9 3870.4,1802.6 3868.9,1802.6 3867.4,1802.6 3865.9,1801.8 3864.4,1796.9 3862.9,1802.6 3861.4,1801.0 3859.9,1794.4 3858.3,1801.8 3856.8,1800.1 3855.3,1802.6 3853.8,1796.6 3852.3,1797.8 3850.8,1804.1 3849.3,1796.6 3847.8,1805.9 3846.3,1786.9 3844.8,1807.7 3843.3,1808.6 3841.8,1809.5 3840.3,1797.1 3838.7,1794.7 3837.2,1812.2 3835.7,1808.4 3834.2,1792.6 3832.7,1810.8 3831.2,1808.1 3829.7,1816.5 3828.2,1817.6 3826.7,1813.7 3825.2,1808.4 3823.7,1815.8 3822.2,1815.2 3820.7,1814.6 3819.1,1787.8 3817.6,1790.7 3816.1,1812.8 3814.6,1811.9 3813.1,1806.4 3811.6,1811.0 3810.1,1810.4 3808.6,1809.8 3807.1,1809.2 3805.6,1807.4 3804.1,1803.8 3802.6,1807.1 3801.1,1805.6 3799.5,1803.4 3798.0,1794.9 3796.5,1801.0 3795.0,1799.5 3793.5,1796.5 3792.0,1789.9 3790.5,1795.0 3789.0,1785.6 3787.5,1785.3 3786.0,1786.6 3784.5,1789.0 3783.0,1787.5 3781.5,1786.0 3779.9,1768.9 3778.4,1778.6 3776.9,1773.8 3775.4,1777.1 3773.9,1780.7 3772.4,1776.4 3770.9,1781.0 3769.4,1780.6 3767.9,1780.4 3766.4,1780.1 3764.9,1779.8 3763.4,1777.1 3761.9,1779.2 3760.3,1766.5 3758.8,1778.6 3757.3,1778.3 3755.8,1774.4 3754.3,1774.4 3752.8,1777.4 3751.3,1776.5 3749.8,1762.2 3748.3,1774.7 3746.8,1761.9 3745.3,1766.7 3743.8,1770.7 3742.3,1771.1 3740.7,1770.2 3739.2,1765.9 3737.7,1757.9 3736.2,1729.6 3734.7,1766.6 3733.2,1765.7 3731.7,1764.8 3730.2,1759.8 3728.7,1731.8 3727.2,1762.1 3725.7,1750.3 3724.2,1760.9 3722.7,1760.3 3721.1,1749.2 3719.6,1737.8 3718.1,1758.5 3716.6,1757.5 3715.1,1756.6 3713.6,1756.7 3712.1,1756.1 3710.6,1751.9 3709.1,1750.7 3707.6,1749.0 3706.1,1753.7 3704.6,1753.1 3703.1,1744.7 3701.5,1744.8 3700.0,1755.6 3698.5,1757.7 3697.0,1759.7 3695.5,1761.7 3694.0,1763.0 3692.5,1752.8 3691.0,1767.7 3689.5,1766.1 3688.0,1771.7 3686.5,1767.1 3685.0,1775.7 3683.5,1766.3 3681.9,1779.8 3680.4,1772.8 3678.9,1783.8 3677.4,1778.9 3675.9,1776.3 3674.4,1776.8 3672.9,1791.8 3671.4,1791.7 3669.9,1787.3 3668.4,1789.5 3666.9,1788.4 3665.4,1778.7 3663.9,1778.2 3662.3,1782.2 3660.8,1783.8 3659.3,1782.7 3657.8,1781.6 3656.3,1769.4 3654.8,1773.0 3653.3,1778.2 3651.8,1777.0 3650.3,1759.7 3648.8,1765.9 3647.3,1775.6 3645.8,1774.4 3644.3,1775.8 3642.7,1775.5 3641.2,1754.6 3639.7,1772.1 3638.2,1774.6 3636.7,1762.2 3635.2,1771.4 3633.7,1773.7 3632.2,1759.4 3630.7,1773.1 3629.2,1772.8 3627.7,1765.9 3626.2,1770.4 3624.7,1771.8 3623.1,1775.1 3621.6,1777.1 3620.1,1775.4 3618.6,1779.7 3617.1,1781.0 3615.6,1767.8 3614.1,1783.6 3612.6,1771.0 3611.1,1781.7 3609.6,1787.5 3608.1,1788.8 3606.6,1788.3 3605.1,1785.4 3603.5,1790.6 3602.0,1793.9 3600.5,1795.2 3599.0,1796.5 3597.5,1797.8 3596.0,1799.1 3594.5,1800.4 3593.0,1801.7 3591.5,1801.5 3590.0,1790.6 3588.5,1789.2 3587.0,1775.5 3585.5,1783.0 3583.9,1786.5 3582.4,1783.5 3580.9,1780.4 3579.4,1774.2 3577.9,1774.4 3576.4,1753.8 3574.9,1747.5 3573.4,1759.2 3571.9,1762.3 3570.4,1763.6 3568.9,1764.8 3567.4,1757.9 3565.9,1767.2 3564.4,1767.6 3562.8,1767.7 3561.3,1744.6 3559.8,1769.3 3558.3,1762.6 3556.8,1774.4 3555.3,1771.8 3553.8,1776.8 3552.3,1774.3 3550.8,1779.2 3549.3,1780.4 3547.8,1781.6 3546.3,1782.2 3544.8,1773.6 3543.2,1776.8 3541.7,1771.8 3540.2,1775.5 3538.7,1776.6 3537.2,1777.7 3535.7,1776.9 3534.2,1776.2 3532.7,1759.9 3531.2,1774.7 3529.7,1773.9 3528.2,1758.9 3526.7,1772.4 3525.2,1770.3 3523.6,1770.9 3522.1,1750.8 3520.6,1764.8 3519.1,1759.2 3517.6,1767.9 3516.1,1767.3 3514.6,1767.0 3513.1,1763.3 3511.6,1766.5 3510.1,1766.3 3508.6,1747.1 3507.1,1765.8 3505.6,1765.5 3504.0,1765.3 3502.5,1754.4 3501.0,1764.8 3499.5,1757.8 3498.0,1764.3 3496.5,1757.9 3495.0,1756.7 3493.5,1761.7 3492.0,1763.3 3490.5,1763.0 3489.0,1762.2 3487.5,1762.5 3486.0,1754.5 3484.4,1762.0 3482.9,1754.2 3481.4,1761.5 3479.9,1754.4 3478.4,1761.0 3476.9,1760.7 3475.4,1760.5 3473.9,1760.3 3472.4,1760.0 3470.9,1749.9 3469.4,1757.0 3467.9,1759.2 3466.4,1753.2 3464.8,1758.1 3463.3,1758.5 3461.8,1758.2 3460.3,1742.4 3458.8,1757.7 3457.3,1752.8 3455.8,1757.4 3454.3,1752.6 3452.8,1758.2 3451.3,1750.0 3449.8,1748.8 3448.3,1752.9 3446.8,1759.7 3445.2,1756.3 3443.7,1738.1 3442.2,1760.8 3440.7,1749.1 3439.2,1761.6 3437.7,1761.7 3436.2,1762.3 3434.7,1764.4 3433.2,1764.0 3431.7,1768.4 3430.2,1766.5 3428.7,1759.2 3427.2,1771.9 3425.6,1771.8 3424.1,1778.1 3422.6,1780.4 3421.1,1782.4 3419.6,1779.1 3418.1,1778.5 3416.6,1801.7 3415.1,1810.6 3413.6,1811.9 3412.1,1806.8 3410.6,1810.8 3409.1,1785.3 3407.6,1804.1 3406.0,1781.2 3404.5,1794.0 3403.0,1794.6 3401.5,1789.6 3400.0,1792.3 3398.5,1789.0 3397.0,1770.7 3395.5,1788.8 3394.0,1787.6 3392.5,1786.4 3391.0,1780.8 3389.5,1784.1 3388.0,1782.9 3386.4,1780.8 3384.9,1780.6 3383.4,1779.4 3381.9,1777.3 3380.4,1777.1 3378.9,1755.1 3377.4,1774.8 3375.9,1772.1 3374.4,1773.1 3372.9,1772.1 3371.4,1768.5 3369.9,1770.1 3368.4,1753.5 3366.8,1759.7 3365.3,1761.6 3363.8,1765.9 3362.3,1749.9 3360.8,1752.6 3359.3,1762.5 3357.8,1761.3 3356.3,1741.5 3354.8,1750.7 3353.3,1758.0 3351.8,1756.8 3350.3,1755.7 3348.8,1738.2 3347.2,1746.6 3345.7,1752.3 3344.2,1692.0 3342.7,1629.3 3341.2,1653.4 3339.7,1654.6 3338.2,1655.8 3336.7,1656.5 3335.2,1658.2 3333.7,1659.4 3332.2,1648.2 3330.7,1648.3 3329.2,1663.6 3327.6,1670.9 3326.1,1667.2 3324.6,1679.9 3323.1,1684.5 3321.6,1688.8 3320.1,1685.8 3318.6,1685.3 3317.1,1680.0 3315.6,1675.2 3314.1,1667.6 3312.6,1665.2" fill="#000"/><polygon points="3412.1,1664.4 3412.1,1523.6 3415.1,1523.6 3415.1,1664.4" fill="#222"/><rect x="3573.5" y="1424.6" width="7" height="465.9" fill="#0a96ff"/><rect x="3571" y="1669" width="12" height="12" rx="2" fill="#0a96ff"/><rect x="4099.5" y="1424.6" width="7" height="465.9" fill="#ff8000"/><rect x="4097" y="1698" width="12" height="12" rx="2" fill="#ff8000"/><rect x="3311.8" y="1895" width="3.5" height="10.5" fill="#222"/><rect x="3399.5" y="1895" width="3.5" height="10.5" fill="#222"/><rect x="3487.2" y="1895" width="3.5" height="10.5" fill="#222"/><rect x="3574.9" y="1895" width="3.5" height="10.5" fill="#222"/><rect x="3662.6" y="1895" width="3.5" height="10.5" fill="#222"/><rect x="3750.2" y="1895" width="3.5" height="10.5" fill="#222"/><rect x="3837.9" y="1895" width="3.5" height="10.5" fill="#222"/><rect x="3925.6" y="1895" width="3.5" height="10.5" fill="#222"/><rect x="4013.3" y="1895" width="3.5" height="10.5" fill="#222"/><rect x="4101.0" y="1895" width="3.5" height="10.5" fill="#222"/><rect x="4188.6" y="1895" width="3.5" height="10.5" fill="#222"/><rect x="4276.3" y="1895" width="3.5" height="10.5" fill="#222"/><rect x="4364.0" y="1895" width="3.5" height="10.5" fill="#222"/><rect x="3295.5" y="1427.8" width="12.5" height="3.5" fill="#222"/><rect x="3295.5" y="1504.4" width="12.5" height="3.5" fill="#222"/><rect x="3295.5" y="1581.0" width="12.5" height="3.5" fill="#222"/><rect x="3295.5" y="1657.6" width="12.5" height="3.5" fill="#222"/><rect x="3295.5" y="1734.2" width="12.5" height="3.5" fill="#222"/><rect x="3295.5" y="1810.8" width="12.5" height="3.5" fill="#222"/><rect x="3295.5" y="1887.4" width="12.5" height="3.5" fill="#222"/></svg><span class="t" id="t43" style="font-size:36.0px;top:1605.2px;color:#0a96ff;left:3512.6px;transform-origin:0 0;transform:scaleX(0.9259);">OD</span><span class="t" id="t44" style="font-size:36.0px;top:1638.8px;color:#ff8000;left:4128.6px;transform-origin:0 0;transform:scaleX(0.9333);">DO</span><span class="t" id="t45" style="font-size:38.0px;top:1410.8px;right:1187.0px;transform-origin:100% 0;transform:scaleX(0.9200);">-48</span><span class="t" id="t46" style="font-size:38.0px;top:1487.4px;right:1187.0px;transform-origin:100% 0;transform:scaleX(0.9200);">-48,5</span><span class="t" id="t47" style="font-size:38.0px;top:1564.0px;right:1187.0px;transform-origin:100% 0;transform:scaleX(0.9200);">-49</span><span class="t" id="t48" style="font-size:38.0px;top:1640.6px;right:1187.0px;transform-origin:100% 0;transform:scaleX(0.9200);">-49,5</span><span class="t" id="t49" style="font-size:38.0px;top:1717.2px;right:1187.0px;transform-origin:100% 0;transform:scaleX(0.9200);">-50</span><span class="t" id="t50" style="font-size:38.0px;top:1793.8px;right:1187.0px;transform-origin:100% 0;transform:scaleX(0.9200);">-50,5</span><span class="t" id="t51" style="font-size:38.0px;top:1870.4px;right:1187.0px;transform-origin:100% 0;transform:scaleX(0.9200);">-51</span><span class="t" id="t52" style="font-size:38.0px;top:1910.8px;left:3313.6px;transform-origin:0 0;transform-origin:50% 0;transform:translateX(-50%) scaleX(0.9200);">0</span><span class="t" id="t53" style="font-size:38.0px;top:1910.8px;left:3401.3px;transform-origin:0 0;transform-origin:50% 0;transform:translateX(-50%) scaleX(0.9200);">50</span><span class="t" id="t54" style="font-size:38.0px;top:1910.8px;left:3489.0px;transform-origin:0 0;transform-origin:50% 0;transform:translateX(-50%) scaleX(0.9200);">100</span><span class="t" id="t55" style="font-size:38.0px;top:1910.8px;left:3576.6px;transform-origin:0 0;transform-origin:50% 0;transform:translateX(-50%) scaleX(0.9200);">150</span><span class="t" id="t56" style="font-size:38.0px;top:1910.8px;left:3664.3px;transform-origin:0 0;transform-origin:50% 0;transform:translateX(-50%) scaleX(0.9200);">200</span><span class="t" id="t57" style="font-size:38.0px;top:1910.8px;left:3752.0px;transform-origin:0 0;transform-origin:50% 0;transform:translateX(-50%) scaleX(0.9200);">250</span><span class="t" id="t58" style="font-size:38.0px;top:1910.8px;left:3839.7px;transform-origin:0 0;transform-origin:50% 0;transform:translateX(-50%) scaleX(0.9200);">300</span><span class="t" id="t59" style="font-size:38.0px;top:1910.8px;left:3927.4px;transform-origin:0 0;transform-origin:50% 0;transform:translateX(-50%) scaleX(0.9200);">350</span><span class="t" id="t60" style="font-size:38.0px;top:1910.8px;left:4015.0px;transform-origin:0 0;transform-origin:50% 0;transform:translateX(-50%) scaleX(0.9200);">400</span><span class="t" id="t61" style="font-size:38.0px;top:1910.8px;left:4102.7px;transform-origin:0 0;transform-origin:50% 0;transform:translateX(-50%) scaleX(0.9200);">450</span><span class="t" id="t62" style="font-size:38.0px;top:1910.8px;left:4190.4px;transform-origin:0 0;transform-origin:50% 0;transform:translateX(-50%) scaleX(0.9200);">500</span><span class="t" id="t63" style="font-size:38.0px;top:1910.8px;left:4278.1px;transform-origin:0 0;transform-origin:50% 0;transform:translateX(-50%) scaleX(0.9200);">550</span><span class="t" id="t64" style="font-size:38.0px;top:1910.8px;left:4365.8px;transform-origin:0 0;transform-origin:50% 0;transform:translateX(-50%) scaleX(0.9200);">600</span><span class="t" id="t65" style="font-size:38.5px;top:1966.1px;left:3838.0px;transform-origin:0 0;transform-origin:50% 0;transform:translateX(-50%) scaleX(1.0000);">Time</span><span class="t" id="t66" style="font-size:36.5px;top:2017.5px;font-weight:bold;left:3293.4px;transform-origin:0 0;transform:scaleX(0.9892);">zamknut kurzor na</span><div class="a" style="left:3636.3px;top:2013.6px;width:125.2px;height:54.7px;border-radius:50%;background:linear-gradient(#c9c9c9,#e9e9e9 45%,#f4f4f4);border:3px solid #9a9a9a;box-sizing:border-box;box-shadow:3px 4px 5px rgba(0,0,0,.25)"></div><svg class="a" style="left:3706.4px;top:2022.9px" width="45.1" height="33.9" viewBox="0 0 100 100" preserveAspectRatio="none"><path d="M2 4H40C80 4 98 30 98 50C98 70 80 96 40 96H2z" fill="#d89628" stroke="#9a8040" stroke-width="4"/></svg><div class="a" style="left:3802.2px;top:2010.6px;width:144.6px;height:68.6px;background:#ffcc00;border:2px solid #cdb870;box-sizing:border-box"></div><span class="t" id="t67" style="font-size:36.0px;top:2026.3px;font-weight:bold;left:3816.0px;transform-origin:0 0;">5</span><div class="a" style="left:3953.8px;top:2010.6px;width:31.2px;height:30.4px;border:2px solid #b4b4b4;box-sizing:border-box;background:linear-gradient(#f4f4f4,#d8d8d8)"></div><div class="a" style="left:3953.8px;top:2049.4px;width:31.2px;height:29.8px;border:2px solid #b4b4b4;box-sizing:border-box;background:linear-gradient(#f4f4f4,#d8d8d8)"></div><svg class="a" style="left:3960px;top:2020px" width="19" height="52" viewBox="0 0 19 52"><path d="M2 10H17L9.5 3z" fill="#222"/><path d="M2 40H17L9.5 47z" fill="#222"/></svg><span class="t" id="t68" style="font-size:36.5px;top:2025.9px;font-weight:bold;left:3994.0px;transform-origin:0 0;transform:scaleX(0.9563);">+sekund</span><div class="a" style="left:3267.0px;top:2120.4px;width:768.8px;height:210.6px;background:#fff;border:3px solid #b8b8b8;box-sizing:border-box"></div><div class="a" style="left:3599.0px;top:2124.0px;width:3.5px;height:203.0px;background:#b4b4b4"></div><div class="a" style="left:3753.5px;top:2124.0px;width:3.5px;height:203.0px;background:#b4b4b4"></div><div class="a" style="left:3938.9px;top:2124.0px;width:3.5px;height:203.0px;background:#b4b4b4"></div><div class="a" style="left:3283.5px;top:2136.5px;width:26.0px;height:26.0px;border:2px solid #9a9a9a;border-radius:4px;box-sizing:border-box;background:linear-gradient(#fff,#dcdcdc)"></div><div class="a" style="left:3289.5px;top:2148.0px;width:14.0px;height:3.0px;background:#3a5fb0"></div><div class="a" style="left:3283.5px;top:2238.0px;width:26.0px;height:26.0px;border:2px solid #9a9a9a;border-radius:4px;box-sizing:border-box;background:linear-gradient(#fff,#dcdcdc)"></div><div class="a" style="left:3289.5px;top:2249.5px;width:14.0px;height:3.0px;background:#3a5fb0"></div><div class="a" style="left:3315.3px;top:2131.4px;width:38.7px;height:34.6px;background:#000"></div><div class="a" style="left:3332.0px;top:2131.4px;width:6.0px;height:34.6px;background:#0a96ff"></div><div class="a" style="left:3329.0px;top:2140.0px;width:12.0px;height:17.0px;background:#0a96ff"></div><div class="a" style="left:3315.3px;top:2233.0px;width:38.7px;height:34.6px;background:#000"></div><div class="a" style="left:3332.0px;top:2233.0px;width:6.0px;height:34.6px;background:#ff7a00"></div><div class="a" style="left:3329.0px;top:2242.0px;width:12.0px;height:17.0px;background:#ff7a00"></div><div class="a" style="left:3296.0px;top:2164.0px;width:2.0px;height:72.0px;background:repeating-linear-gradient(#bbb 0 2px,transparent 2px 5px)"></div><div class="a" style="left:3334.0px;top:2167.0px;width:2.0px;height:34.0px;background:repeating-linear-gradient(#bbb 0 2px,transparent 2px 5px)"></div><div class="a" style="left:3334.0px;top:2200.0px;width:40.0px;height:2.0px;background:repeating-linear-gradient(90deg,#bbb 0 2px,transparent 2px 5px)"></div><div class="a" style="left:3334.0px;top:2269.0px;width:2.0px;height:34.0px;background:repeating-linear-gradient(#bbb 0 2px,transparent 2px 5px)"></div><div class="a" style="left:3334.0px;top:2302.0px;width:40.0px;height:2.0px;background:repeating-linear-gradient(90deg,#bbb 0 2px,transparent 2px 5px)"></div><span class="t" id="t69" style="font-size:38.0px;top:2130.5px;left:3364.0px;transform-origin:0 0;transform:scaleX(0.9298);">OD</span><div class="a" style="left:3396.3px;top:2176.0px;width:179.7px;height:49.8px;background:#ffff00"></div><span class="t" id="t70" style="font-size:38.0px;top:2181.2px;left:3404.7px;transform-origin:0 0;transform:scaleX(0.8462);">ACC_CH05</span><span class="t" id="t71" style="font-size:38.0px;top:2181.2px;left:3615.0px;transform-origin:0 0;transform:scaleX(0.9026);">150,339</span><span class="t" id="t72" style="font-size:38.0px;top:2181.2px;left:3770.4px;transform-origin:0 0;transform:scaleX(0.9095);">-49,62</span><div class="a" style="left:3356.5px;top:2227.0px;width:63.0px;height:51.0px;background:#ffff00"></div><span class="t" id="t73" style="font-size:38.0px;top:2231.8px;left:3364.0px;transform-origin:0 0;transform:scaleX(0.9298);">DO</span><span class="t" id="t74" style="font-size:38.0px;top:2283.0px;left:3404.7px;transform-origin:0 0;transform:scaleX(0.8462);">ACC_CH05</span><span class="t" id="t75" style="font-size:38.0px;top:2283.0px;left:3615.0px;transform-origin:0 0;transform:scaleX(0.9026);">449,661</span><span class="t" id="t76" style="font-size:38.0px;top:2283.0px;left:3770.4px;transform-origin:0 0;transform:scaleX(0.9155);">-49,808</span><div class="a" style="left:4063.0px;top:2125.0px;width:89.5px;height:88.4px;background:#fff;border:2px solid #c4c4c4;box-sizing:border-box"></div><svg class="a" style="left:4063.0px;top:2125.0px" width="89.5" height="88.4" viewBox="0 0 100 100"><path d="M50 8L92 50L50 92L8 50z" fill="#f2f2f2" stroke="#c6c6c6" stroke-width="3"/><path d="M29 29L71 71M71 29L29 71" stroke="#c6c6c6" stroke-width="9"/><path d="M29 29L71 71M71 29L29 71" stroke="#e6e6e6" stroke-width="4"/></svg><div class="a" style="left:1959.7px;top:2157.0px;width:89.3px;height:88.3px;background:#fff;border:2px solid #c4c4c4;box-sizing:border-box"></div><svg class="a" style="left:1959.7px;top:2157.0px" width="89.3" height="88.3" viewBox="0 0 100 100"><path d="M50 8L92 50L50 92L8 50z" fill="#f2f2f2" stroke="#c6c6c6" stroke-width="3"/><path d="M29 29L71 71M71 29L29 71" stroke="#c6c6c6" stroke-width="9"/><path d="M29 29L71 71M71 29L29 71" stroke="#e6e6e6" stroke-width="4"/></svg><div class="a" style="left:501.4px;top:2157.0px;width:1109.2px;height:85.3px;background:#fff;border:3px solid #b8b8b8;box-sizing:border-box"></div><div class="a" style="left:882.4px;top:2160.5px;width:3.5px;height:78.0px;background:#b4b4b4"></div><div class="a" style="left:994.5px;top:2160.5px;width:3.5px;height:78.0px;background:#b4b4b4"></div><div class="a" style="left:1106.0px;top:2160.5px;width:3.5px;height:78.0px;background:#b4b4b4"></div><div class="a" style="left:1284.5px;top:2160.5px;width:3.5px;height:78.0px;background:#b4b4b4"></div><div class="a" style="left:1396.2px;top:2160.5px;width:3.5px;height:78.0px;background:#b4b4b4"></div><div class="a" style="left:1508.2px;top:2160.5px;width:3.5px;height:78.0px;background:#b4b4b4"></div><div class="a" style="left:548.3px;top:2168.0px;width:40.4px;height:34.0px;background:#000"></div><svg class="a" style="left:548.3px;top:2168px" width="40.4" height="34" viewBox="0 0 40 34"><path d="M20 0V34M0 17H40" stroke="#e6e600" stroke-width="2.5"/><path d="M13 10L27 24M27 10L13 24" stroke="#e6e600" stroke-width="1.6"/></svg><div class="a" style="left:533.0px;top:2184.0px;width:12.0px;height:2.0px;background:repeating-linear-gradient(90deg,#bbb 0 2px,transparent 2px 4px)"></div><span class="t" id="t77" style="font-size:38.5px;top:2167.4px;font-weight:bold;left:597.3px;transform-origin:0 0;transform:scaleX(0.9013);">Cursor 0</span><span class="t" id="t78" style="font-size:38.0px;top:2167.8px;left:898.0px;transform-origin:0 0;transform:scaleX(0.8833);">456,1</span><span class="t" id="t79" style="font-size:38.0px;top:2167.8px;left:1010.0px;transform-origin:0 0;transform:scaleX(0.8990);">108</span><span class="t" id="t80" style="font-size:38.0px;top:2167.8px;left:1121.0px;transform-origin:0 0;">0</span><div class="a" style="left:647.0px;top:499.5px;width:1542.4px;height:77.0px;background:#fff;border:2px solid #b0b0b0;box-sizing:border-box"></div><span class="t" id="t81" style="font-size:38.5px;top:521.1px;left:667.0px;transform-origin:0 0;transform:scaleX(0.9161);">Time (s)</span><svg class="a" style="left:1014.5px;top:519.5px" width="21.6" height="27.8" viewBox="0 0 6.2 8"><path d="M1.5 3.6V2.2a1.6 1.6 0 0 1 3.2 0V3.6" fill="none" stroke="#111" stroke-width="1"/><rect x=".3" y="3.4" width="5.6" height="4.3" rx=".8" fill="#111"/><rect x="1.6" y="4.7" width="3" height="1.7" fill="#bbb"/></svg><svg class="a" style="left:1058.0px;top:517.0px" width="35.5" height="31.3" viewBox="0 0 10.2 9"><rect x="0" y="0" width="2" height="2" fill="#0c0"/><path d="M3.4 .8V6.2H9.6M3.4 6.2L.8 8.6" fill="none" stroke="#111" stroke-width="1"/><text x="5" y="4.6" font-family="Liberation Sans" font-size="5.2" fill="#111">X</text></svg><svg class="a" style="left:1110.0px;top:520.5px" width="41.7" height="27.8" viewBox="0 0 12 8"><text x="0" y="3.6" font-family="Liberation Mono" font-weight="bold" font-size="4.3" fill="#111" textLength="11.5" lengthAdjust="spacingAndGlyphs">X.XX</text><path d="M7.2 5.4h4l-2 2z" fill="#111"/></svg><span class="t" id="t82" style="font-size:38.5px;top:521.1px;left:1177.8px;transform-origin:0 0;transform:scaleX(0.9046);">Frequency (Hz)</span><svg class="a" style="left:1523.0px;top:519.5px" width="21.6" height="27.8" viewBox="0 0 6.2 8"><path d="M1.2 3.6V1.9a1.5 1.5 0 0 1 2.9 -.5" fill="none" stroke="#111" stroke-width="1"/><rect x=".3" y="3.4" width="5.6" height="4.3" rx=".8" fill="#111"/><rect x="1.6" y="4.7" width="3" height="1.7" fill="#bbb"/></svg><svg class="a" style="left:1567.0px;top:517.0px" width="35.5" height="31.3" viewBox="0 0 10.2 9"><rect x="0" y="0" width="2" height="2" fill="#0c0"/><path d="M3.4 .8V6.2H9.6M3.4 6.2L.8 8.6" fill="none" stroke="#111" stroke-width="1"/><text x="5" y="4.6" font-family="Liberation Sans" font-size="5.2" fill="#111">Y</text></svg><svg class="a" style="left:1621.0px;top:520.5px" width="41.7" height="27.8" viewBox="0 0 12 8"><text x="0" y="3.6" font-family="Liberation Mono" font-weight="bold" font-size="4.3" fill="#111" textLength="11.5" lengthAdjust="spacingAndGlyphs">Y.YY</text><path d="M7.2 5.4h4l-2 2z" fill="#111"/></svg><span class="t" id="t83" style="font-size:38.5px;top:521.1px;left:1690.0px;transform-origin:0 0;transform:scaleX(0.9860);">Amplitude</span><svg class="a" style="left:2036.0px;top:519.5px" width="21.6" height="27.8" viewBox="0 0 6.2 8"><path d="M1.5 3.6V2.2a1.6 1.6 0 0 1 3.2 0V3.6" fill="none" stroke="#111" stroke-width="1"/><rect x=".3" y="3.4" width="5.6" height="4.3" rx=".8" fill="#111"/><rect x="1.6" y="4.7" width="3" height="1.7" fill="#bbb"/></svg><svg class="a" style="left:2078.0px;top:517.0px" width="35.5" height="31.3" viewBox="0 0 10.2 9"><rect x="0" y="0" width="2" height="2" fill="#0c0"/><path d="M3.4 .8V6.2H9.6M3.4 6.2L.8 8.6" fill="none" stroke="#111" stroke-width="1"/><text x="5" y="4.6" font-family="Liberation Sans" font-size="5.2" fill="#111">Z</text></svg><svg class="a" style="left:2133.0px;top:520.5px" width="41.7" height="27.8" viewBox="0 0 12 8"><text x="0" y="3.6" font-family="Liberation Mono" font-weight="bold" font-size="4.3" fill="#111" textLength="11.5" lengthAdjust="spacingAndGlyphs">Z.ZZ</text><path d="M7.2 5.4h4l-2 2z" fill="#111"/></svg><div class="a" style="left:2762.8px;top:548.0px;width:178.4px;height:54.5px;background:#fff;border:2px solid #b4b4b4;box-sizing:border-box"></div><svg class="a" style="left:2775.8px;top:556.1px" width="38.3" height="38.3" viewBox="0 0 11 11"><rect x="0" y="1" width="2.2" height="2.2" fill="#0a0"/><path d="M5.5 1V10M1.5 5.5H10" stroke="#111" stroke-width="1"/><circle cx="5.5" cy="5.5" r="1.2" fill="#fff" stroke="#111" stroke-width=".6"/></svg><svg class="a" style="left:2831.1px;top:556.1px" width="41.7" height="38.3" viewBox="0 0 12 11"><rect x="0" y="1" width="2.2" height="2.2" fill="#0a0"/><circle cx="7.2" cy="4.2" r="3" fill="#fff" stroke="#111" stroke-width="1"/><path d="M5.7 4.2h3M7.2 2.7v3" stroke="#111" stroke-width=".8"/><path d="M5 6.4L1.5 9.8" stroke="#111" stroke-width="1.7"/><path d="M6.8 8.8h3.4l-1.7 1.7z" fill="#111"/></svg><svg class="a" style="left:2886.4px;top:556.1px" width="38.3" height="38.3" viewBox="0 0 11 11"><rect x="0" y="1" width="2.2" height="2.2" fill="#0a0"/><path d="M3.5 6V3.2M5 5.5V2M6.6 5.5V2M8.2 6V2.8M3.2 6.5C2 5 1.6 5.8 2.5 7.2L4.2 9.6H8.2C9.4 8.6 9.6 7 9.6 4.4" fill="none" stroke="#111" stroke-width=".9"/></svg><div class="a" style="left:121.5px;top:581.5px;width:47.5px;height:562.5px;background:#fff;border:3px solid #333;box-sizing:border-box"></div><div class="a" style="left:124.5px;top:594.5px;width:41.5px;height:538.5px;background:linear-gradient(#f00 0%,#f00 5.6%,#ff2800 11%,#ffa500 17.6%,#ff0 30%,#a0ff00 37.6%,#0f0 43.2%,#0f0 54.4%,#00ff8c 62.4%,#0ff 69.6%,#0080d0 81.6%,#0028a8 89.6%,#000082 93.6%,#000050 100%)"></div><div class="a" style="left:121.5px;top:591.5px;width:47.5px;height:3.0px;background:#333"></div><div class="a" style="left:121.5px;top:1133.0px;width:47.5px;height:3.0px;background:#333"></div><div class="a" style="left:143.5px;top:583.0px;width:3.0px;height:10.0px;background:#333"></div><div class="a" style="left:143.5px;top:1135.0px;width:3.0px;height:8.0px;background:#333"></div><div class="a" style="left:172.0px;top:602.0px;width:9.0px;height:3.5px;background:#333"></div><div class="a" style="left:172.0px;top:1137.0px;width:9.0px;height:3.5px;background:#333"></div><div class="a" style="left:174.0px;top:1042.0px;width:5.0px;height:3.0px;background:#444"></div><div class="a" style="left:174.0px;top:1064.0px;width:5.0px;height:3.0px;background:#444"></div><div class="a" style="left:174.0px;top:1086.0px;width:5.0px;height:3.0px;background:#444"></div><div class="a" style="left:174.0px;top:1108.0px;width:5.0px;height:3.0px;background:#444"></div><span class="t" id="t84" style="font-size:38.0px;top:581.8px;left:186.0px;transform-origin:0 0;transform:scaleX(0.8993);">49,003m</span><span class="t" id="t85" style="font-size:38.0px;top:1115.8px;left:186.0px;transform-origin:0 0;transform:scaleX(0.8954);">89,555p</span><div class="a" style="left:483.5px;top:605.5px;width:2526.0px;height:1424.0px;background:#a0a0a0"></div><div class="a" style="left:2997.0px;top:609.0px;width:12.5px;height:1420.0px;background:#000"></div><div class="a" style="left:487px;top:609px;width:2510px;height:1420px;overflow:hidden"><div id="spec" style="filter:url(#cm)"><div class="cols" style="height:1334.4px"><i style="--g:#010,#0b0 33%,#2e0 54.3%,#210 60.4%,#040 69.2%,#030 92.9%,#190 95.2%,#4e0 96.5%,#330 97.1%,#070 97.7%,#010 98.2%,#0b0 98.5%,#4b0 98.9%,#670 99.4%,#7e0 99.7%,#890"></i><i style="--g:#010,#0c0 31%,#300 45.7%,#400 55%,#2f0 60.3%,#080 68%,#000 80.2%,#040 92.9%,#1b0 95.2%,#4e0 96.5%,#330 97.1%,#070 97.7%,#010 98.2%,#0b0 98.5%,#4b0 98.9%,#670 99.4%,#7e0 99.7%,#890"></i><i style="--g:#020,#0c0 30.7%,#2e0 44.1%,#440 54%,#3a0 58.9%,#090 67.9%,#000 78.5%,#040 92.8%,#1e0 95.2%,#4e0 96.5%,#330 97.1%,#070 97.7%,#010 98.2%,#0b0 98.5%,#4b0 98.9%,#670 99.4%,#7e0 99.7%,#890"></i><i style="--g:#010,#0b0 32.1%,#360 53.8%,#2b0 59.5%,#060 68.5%,#000 90.4%,#090 93.2%,#250 95.3%,#4e0 96.5%,#330 97.1%,#070 97.7%,#010 98.2%,#0b0 98.5%,#4b0 98.9%,#670 99.4%,#7e0 99.7%,#890"></i><i style="--g:#010,#0a0 34.8%,#230 55%,#100 63.3%,#010 72.5%,#040 92.3%,#230 95%,#4f0 96.5%,#340 97.1%,#070 97.7%,#010 98.2%,#0b0 98.5%,#4b0 98.9%,#670 99.4%,#7e0 99.7%,#890"></i><i style="--g:#010,#090 36.1%,#1d0 55.8%,#010 71.5%,#040 92.2%,#240 94.9%,#4f0 96.5%,#340 97.1%,#070 97.7%,#010 98.2%,#0b0 98.5%,#4b0 98.9%,#670 99.4%,#7e0 99.7%,#890"></i><i style="--g:#010,#0a0 34%,#270 54.7%,#170 61.9%,#020 70.6%,#030 91.9%,#230 94.6%,#490 96.2%,#500 96.5%,#350 97.1%,#0a0 97.7%,#010 98.2%,#0b0 98.5%,#4b0 98.9%,#670 99.4%,#7e0 99.7%,#890"></i><i style="--g:#010,#0b0 31.5%,#3b0 53.7%,#310 59.1%,#070 68.2%,#000 83%,#040 91.9%,#270 94.6%,#520 96.5%,#370 97.1%,#040 97.9%,#010 98.2%,#0b0 98.5%,#4b0 98.9%,#670 99.4%,#7e0 99.7%,#890"></i><i style="--g:#020,#0c0 30.4%,#2d0 43.2%,#470 53.4%,#3f0 58.5%,#090 67.9%,#000 77.9%,#040 91.7%,#290 94.4%,#530 96.5%,#2d0 97.3%,#130 97.7%,#050 97.9%,#010 98.2%,#0b0 98.5%,#4b0 98.9%,#670 99.4%,#7e0 99.7%,#890"></i><i style="--g:#010,#0c0 31%,#300 45.7%,#400 55%,#2f0 60.3%,#080 68.2%,#000 81.2%,#050 91.6%,#280 94.1%,#550 96.5%,#300 97.3%,#020 98%,#060 98.3%,#0b0 98.5%,#4b0 98.9%,#670 99.4%,#7e0 99.7%,#890"></i><i style="--g:#010,#0a0 33.3%,#2c0 54.3%,#1f0 60.7%,#030 69.4%,#040 91.3%,#210 93.5%,#560 96.4%,#520 96.7%,#1d0 97.7%,#020 98%,#060 98.3%,#0b0 98.5%,#4b0 98.9%,#670 99.4%,#7e0 99.7%,#890"></i><i style="--g:#010,#090 35.7%,#1e0 55.6%,#010 71.3%,#040 91.1%,#200 93.2%,#550 96.1%,#5a0 96.5%,#380 97.3%,#220 97.7%,#030 98%,#060 98.3%,#0b0 98.5%,#4b0 98.9%,#670 99.4%,#7e0 99.7%,#890"></i><i style="--g:#010,#0a0 34.3%,#260 54.7%,#160 62.1%,#020 70.9%,#040 91%,#1f0 92.9%,#590 95.9%,#5d0 96.5%,#3c0 97.3%,#270 97.7%,#080 98%,#010 98.2%,#0b0 98.5%,#4b0 98.9%,#670 99.4%,#7e0 99.7%,#890"></i><i style="--g:#010,#0c0 31.3%,#3c0 53.5%,#330 58.9%,#070 68.2%,#000 82.4%,#040 90.8%,#200 92.8%,#5e0 95.9%,#600 96.5%,#410 97.3%,#2c0 97.7%,#010 98.2%,#0b0 98.5%,#4b0 98.9%,#670 99.4%,#7e0 99.7%,#890"></i><i style="--g:#020,#0d0 30%,#2c0 41.8%,#4c0 52.6%,#470 57.9%,#0a0 68.2%,#000 77.5%,#040 90.7%,#210 92.6%,#630 95.9%,#600 96.7%,#310 97.7%,#020 98.2%,#0b0 98.5%,#4b0 98.9%,#670 99.4%,#7e0 99.7%,#890"></i><i style="--g:#020,#0d0 30.3%,#2d0 42.6%,#490 53.1%,#420 58.2%,#0a0 68%,#000 77.9%,#040 90.4%,#1c0 92.2%,#680 95.9%,#640 96.7%,#360 97.7%,#070 98.2%,#0b0 98.5%,#4b0 98.9%,#670 99.4%,#7e0 99.7%,#890"></i><i style="--g:#010,#0b0 32.2%,#340 53.8%,#2a0 59.5%,#050 68.6%,#010 89.5%,#100 91.3%,#6d0 95.8%,#680 96.7%,#3a0 97.7%,#0c0 98.2%,#0c0 98.5%,#4b0 98.9%,#670 99.4%,#7e0 99.7%,#890"></i><i style="--g:#010,#0a0 35.1%,#210 55.3%,#010 71%,#040 90.1%,#1f0 91.9%,#6a0 95.3%,#710 96.1%,#6c0 96.7%,#3f0 97.7%,#100 98.2%,#0d0 98.5%,#340 98.8%,#4b0 98.9%,#670 99.4%,#7e0 99.7%,#890"></i><i style="--g:#010,#0a0 34.8%,#230 55%,#100 63.4%,#010 72.8%,#040 89.9%,#200 91.7%,#670 94.9%,#770 95.9%,#710 96.7%,#440 97.7%,#150 98.2%,#100 98.5%,#1e0 98.6%,#4b0 98.9%,#670 99.4%,#7e0 99.7%,#890"></i><i style="--g:#010,#0b0 31.9%,#370 53.7%,#2e0 59.2%,#060 68.3%,#000 86.5%,#070 90.1%,#2d0 92%,#680 94.6%,#7c0 95.9%,#710 96.8%,#480 97.7%,#190 98.2%,#140 98.5%,#1f0 98.6%,#4b0 98.9%,#670 99.4%,#7e0 99.7%,#890"></i><i style="--g:#020,#0d0 30.3%,#2d0 42.6%,#490 53.1%,#430 58.2%,#0a0 68%,#000 77.8%,#050 89.5%,#190 91%,#650 94.1%,#810 95.9%,#760 96.8%,#4d0 97.7%,#1d0 98.2%,#180 98.5%,#200 98.6%,#4b0 98.9%,#670 99.4%,#7e0 99.7%,#890"></i><i style="--g:#020,#0c0 30.3%,#2d0 42.7%,#480 53.1%,#420 58.2%,#090 68%,#000 78.1%,#050 89.2%,#170 90.7%,#690 94%,#860 95.9%,#7a0 96.8%,#510 97.7%,#210 98.2%,#1c0 98.5%,#210 98.6%,#4b0 98.9%,#670 99.4%,#7e0 99.7%,#890"></i><i style="--g:#010,#0b0 32.1%,#360 53.8%,#2b0 59.5%,#060 68.5%,#010 87.2%,#0c0 89.8%,#330 91.6%,#6c0 93.8%,#8b0 95.9%,#7e0 96.8%,#550 97.7%,#250 98.2%,#1f0 98.5%,#230 98.6%,#4b0 98.9%,#670 99.4%,#7e0 99.7%,#890"></i><i style="--g:#010,#0a0 34.9%,#220 55.2%,#0c0 64.6%,#000 75.1%,#040 88.6%,#1a0 90.4%,#700 93.7%,#8f0 95.9%,#820 96.8%,#590 97.7%,#290 98.2%,#250 98.6%,#4b0 98.9%,#670 99.4%,#7e0 99.7%,#890"></i><i style="--g:#010,#0a0 34.9%,#220 55.2%,#0c0 64.6%,#000 75.1%,#050 88.4%,#1b0 90.2%,#730 93.5%,#940 95.9%,#860 96.8%,#5c0 97.7%,#2c0 98.2%,#280 98.6%,#4b0 98.9%,#670 99.4%,#7e0 99.7%,#890"></i><i style="--g:#010,#0b0 32.2%,#340 53.8%,#290 59.7%,#050 68.6%,#020 86.6%,#0d0 89%,#290 90.5%,#790 93.5%,#980 95.9%,#8a0 96.8%,#600 97.7%,#300 98.2%,#2a0 98.6%,#4c0 98.9%,#670 99.4%,#7e0 99.7%,#890"></i><i style="--g:#020,#0c0 30.7%,#2e0 44.2%,#430 54%,#390 58.9%,#090 67.9%,#000 78.7%,#060 87.7%,#180 89.5%,#3c0 91%,#7d0 93.4%,#9c0 95.9%,#8d0 96.8%,#630 97.7%,#330 98.2%,#2d0 98.6%,#380 98.8%,#4c0 98.9%,#680 99.4%,#7e0 99.7%,#890"></i><i style="--g:#010,#0c0 30.9%,#2f0 45%,#410 54.6%,#340 59.7%,#080 68%,#000 79.9%,#060 87.2%,#130 88.9%,#320 90.4%,#830 93.4%,#a00 95.9%,#910 96.8%,#670 97.7%,#360 98.2%,#2f0 98.6%,#3a0 98.8%,#4d0 98.9%,#680 99.4%,#7e0 99.7%,#890"></i><i style="--g:#010,#0b0 32.8%,#300 54.1%,#240 60.1%,#040 68.9%,#030 85.7%,#130 88.6%,#390 90.4%,#870 93.2%,#a30 95.9%,#940 96.8%,#6a0 97.7%,#390 98.2%,#320 98.6%,#3b0 98.8%,#4d0 98.9%,#680 99.4%,#7e0 99.7%,#890"></i><i style="--g:#010,#0a0 35.4%,#200 55.3%,#010 71.2%,#040 85.6%,#180 88.6%,#400 90.4%,#8d0 93.2%,#a70 95.9%,#970 96.8%,#6c0 97.7%,#3b0 98.2%,#340 98.6%,#550 99.1%,#7e0 99.7%,#890"></i><i style="--g:#010,#0a0 34.6%,#240 55%,#100 63.3%,#010 72.4%,#040 85.1%,#1b0 88.4%,#4d0 90.5%,#920 93.2%,#aa0 95.9%,#9a0 96.8%,#6f0 97.7%,#3e0 98.2%,#360 98.6%,#560 99.1%,#7e0 99.7%,#890"></i><i style="--g:#010,#0b0 31.9%,#370 53.7%,#2d0 59.4%,#060 68.5%,#010 83.6%,#180 87.5%,#280 88.7%,#5d0 90.8%,#980 93.2%,#ad0 95.9%,#9c0 96.8%,#710 97.7%,#400 98.2%,#380 98.6%,#560 99.1%,#7e0 99.7%,#890"></i><i style="--g:#020,#0c0 30.6%,#2e0 43.5%,#460 53.5%,#3d0 58.6%,#090 67.9%,#000 78.1%,#060 84.5%,#250 88.3%,#650 90.8%,#9d0 93.2%,#b00 95.9%,#9f0 96.8%,#740 97.7%,#420 98.2%,#3a0 98.6%,#560 99.1%,#7f0 99.7%,#890"></i><i style="--g:#020,#0c0 30.9%,#2f0 44.7%,#430 54.3%,#370 59.2%,#090 67.9%,#000 78.7%,#070 84.2%,#2d0 88.3%,#a00 93.1%,#b20 95.9%,#a10 96.8%,#760 97.7%,#440 98.2%,#3c0 98.6%,#5d0 99.2%,#7f0 99.7%,#890"></i><i style="--g:#010,#0b0 32.8%,#300 54.1%,#240 60.1%,#040 68.9%,#030 83%,#1f0 86.5%,#3d0 88.6%,#a50 93.1%,#b40 95.9%,#a30 96.8%,#780 97.7%,#460 98.2%,#3d0 98.6%,#5d0 99.2%,#7f0 99.7%,#890"></i><i style="--g:#010,#0a0 35.4%,#200 55.5%,#010 71.2%,#050 83%,#280 86.6%,#450 88.6%,#a60 92.9%,#b60 95.9%,#a50 96.8%,#790 97.7%,#480 98.2%,#3f0 98.6%,#5e0 99.2%,#7f0 99.7%,#890"></i><i style="--g:#010,#0a0 34.6%,#240 55%,#110 63.1%,#010 72.2%,#060 82.7%,#2b0 86.3%,#4e0 88.6%,#aa0 92.9%,#b80 95.9%,#a70 96.8%,#7b0 97.7%,#490 98.2%,#400 98.6%,#5e0 99.2%,#7f0 99.7%,#890"></i><i style="--g:#010,#0b0 31.9%,#370 53.8%,#2d0 59.4%,#060 68.5%,#020 80.9%,#130 83.8%,#500 88.3%,#ac0 92.8%,#bb0 95.8%,#a80 96.8%,#7c0 97.7%,#4a0 98.2%,#410 98.6%,#5e0 99.2%,#7f0 99.7%,#890"></i><i style="--g:#020,#0c0 30.7%,#2e0 44.1%,#440 53.8%,#3b0 58.8%,#090 67.9%,#010 77.3%,#0a0 82.3%,#3b0 86.3%,#670 88.9%,#b40 93.1%,#bc0 95.9%,#a90 96.8%,#7d0 97.7%,#4b0 98.2%,#420 98.6%,#5f0 99.2%,#7f0 99.7%,#8a0"></i><i style="--g:#010,#0c0 31.2%,#320 46.5%,#3f0 55.5%,#2b0 60.9%,#070 68.3%,#020 78.1%,#0c0 82%,#430 86.3%,#b60 93.1%,#bd0 95.9%,#a30 97%,#7e0 97.7%,#4c0 98.2%,#430 98.6%,#5f0 99.2%,#7f0 99.7%,#8a0"></i><i style="--g:#010,#0b0 33.1%,#2d0 54.3%,#200 60.6%,#040 69.2%,#060 80%,#190 82.7%,#540 86.8%,#ba0 93.2%,#be0 95.9%,#a40 97%,#7f0 97.7%,#4d0 98.2%,#440 98.6%,#5f0 99.2%,#7f0 99.7%,#8a0"></i><i style="--g:#010,#0a0 35.7%,#1f0 55.5%,#010 71.3%,#0b0 80.6%,#340 84.2%,#bb0 93.1%,#bf0 95.9%,#a50 97%,#800 97.7%,#4e0 98.2%,#450 98.6%,#5f0 99.2%,#7f0 99.7%,#8a0"></i><i style="--g:#010,#0a0 34.9%,#220 55.2%,#0b0 64.9%,#020 73.9%,#100 80.6%,#560 86%,#9f0 90.8%,#be0 93.4%,#c00 95.9%,#a60 97%,#810 97.7%,#4f0 98.2%,#450 98.6%,#5f0 99.2%,#7f0 99.7%,#8a0"></i><i style="--g:#010,#0b0 32.7%,#310 54%,#250 60%,#040 68.9%,#080 77%,#160 80.6%,#630 86.3%,#a10 90.7%,#bf0 93.4%,#c10 95.9%,#a70 97%,#810 97.7%,#4f0 98.2%,#460 98.6%,#5f0 99.2%,#7f0 99.7%,#8a0"></i><i style="--g:#010,#0b0 31.5%,#3b0 53.7%,#310 59.1%,#070 68.2%,#060 74.5%,#170 79.9%,#6b0 86.3%,#970 89.5%,#c00 93.4%,#c10 95.9%,#a70 97%,#820 97.7%,#500 98.2%,#460 98.6%,#600 99.2%,#7f0 99.7%,#8a0"></i><i style="--g:#010,#0b0 32.1%,#360 53.8%,#2b0 59.5%,#060 68.5%,#090 74.8%,#1c0 79.6%,#720 86.3%,#940 88.9%,#c20 93.4%,#c20 95.9%,#a70 97%,#820 97.7%,#500 98.2%,#460 98.6%,#600 99.2%,#7f0 99.7%,#8a0"></i><i style="--g:#010,#0a0 34%,#270 54.7%,#170 61.9%,#030 70%,#190 78.2%,#570 83.8%,#7d0 86.6%,#a80 90.7%,#c20 93.5%,#c20 95.9%,#a80 97%,#830 97.7%,#500 98.2%,#470 98.6%,#600 99.2%,#7f0 99.7%,#8a0"></i><i style="--g:#010,#090 36%,#1d0 55.8%,#040 69.7%,#1f0 77.9%,#7e0 86.3%,#8f0 87.7%,#c30 93.5%,#c20 95.9%,#a80 97%,#830 97.7%,#510 98.2%,#470 98.6%,#600 99.2%,#7f0 99.7%,#8a0"></i><i style="--g:#010,#0a0 34.8%,#230 55%,#100 63.4%,#050 69.7%,#260 77.8%,#830 86.3%,#920 87.5%,#c30 93.5%,#c30 95.9%,#a80 97%,#830 97.7%,#510 98.2%,#470 98.6%,#600 99.2%,#7f0 99.7%,#8a0"></i><i style="--g:#010,#0b0 32.5%,#320 54%,#270 59.8%,#060 68.5%,#250 76.4%,#870 86.3%,#950 87.5%,#c10 92.8%,#c30 95.9%,#a80 97%,#830 97.7%,#510 98.2%,#470 98.6%,#600 99.2%,#7f0 99.7%,#8a0"></i><i style="--g:#010,#0c0 31.5%,#3b0 53.7%,#320 59.1%,#070 68.2%,#1c0 73.3%,#3a0 77.8%,#8b0 86.3%,#970 87.5%,#be0 92.5%,#c40 94%,#c30 95.9%,#a80 97%,#830 97.7%,#510 98.2%,#470 98.6%,#600 99.2%,#7f0 99.7%,#8a0"></i><i style="--g:#010,#0b0 32.2%,#350 53.8%,#2a0 59.5%,#070 68.2%,#360 76.4%,#8d0 86.3%,#990 87.5%,#be0 92.5%,#c40 94%,#c30 95.9%,#a90 97%,#830 97.7%,#510 98.2%,#470 98.6%,#600 99.2%,#7f0 99.7%,#8a0"></i><i style="--g:#010,#0a0 34.2%,#260 54.7%,#160 61.9%,#070 68.3%,#480 77.3%,#8e0 86.3%,#9a0 87.4%,#b60 91.7%,#c40 93.5%,#c30 95.9%,#a90 97%,#830 97.7%,#510 98.2%,#470 98.6%,#600 99.2%,#7f0 99.7%,#8a0"></i><i style="--g:#010,#0a0 33.9%,#280 54.6%,#190 61.5%,#070 68%,#690 81.1%,#8d0 86.2%,#9b0 87.4%,#b80 91.9%,#c40 93.5%,#c30 95.9%,#a90 97%,#830 97.7%,#510 98.2%,#470 98.6%,#600 99.2%,#7f0 99.7%,#8a0"></i><i style="--g:#010,#0b0 31.5%,#3a0 53.7%,#310 59.1%,#090 67.9%,#5c0 78.2%,#8a0 86%,#9a0 87.4%,#bb0 92.2%,#c40 93.7%,#c30 95.9%,#a90 97%,#830 97.7%,#510 98.2%,#470 98.6%,#600 99.2%,#7f0 99.7%,#8a0"></i><i style="--g:#020,#0c0 30.6%,#2e0 43.8%,#450 53.7%,#3b0 58.8%,#0a0 67.7%,#340 72.4%,#560 76.7%,#880 86%,#990 87.5%,#be0 92.5%,#c40 94%,#c30 95.9%,#a90 97%,#830 97.7%,#510 98.2%,#470 98.6%,#600 99.2%,#7f0 99.7%,#8a0"></i><i style="--g:#010,#0c0 31.5%,#3c0 53.5%,#330 58.9%,#090 67.7%,#4a0 74.3%,#840 85.9%,#980 87.5%,#c00 92.6%,#c40 95.2%,#c00 96.1%,#a90 97%,#830 97.7%,#510 98.2%,#470 98.6%,#600 99.2%,#7f0 99.7%,#8a0"></i><i style="--g:#010,#0a0 33.7%,#290 54.6%,#1a0 61.3%,#080 67.7%,#4b0 74%,#7d0 85.6%,#970 87.5%,#c40 93.5%,#c30 95.9%,#a90 97%,#830 97.7%,#510 98.2%,#470 98.6%,#600 99.2%,#7f0 99.7%,#8a0"></i><i style="--g:#010,#0a0 34.6%,#230 55%,#100 63.3%,#080 67.7%,#4b0 73.9%,#760 85%,#8b0 86.6%,#a30 89.2%,#c40 93.5%,#c30 95.9%,#a90 97%,#830 97.7%,#510 98.2%,#470 98.6%,#600 99.2%,#7f0 99.7%,#8a0"></i><i style="--g:#010,#0b0 32.1%,#360 53.8%,#2b0 59.5%,#090 67.6%,#4a0 73.9%,#700 84.4%,#7e0 86%,#960 87.7%,#c40 93.5%,#c30 95.9%,#a80 97%,#830 97.7%,#510 98.2%,#470 98.6%,#600 99.2%,#7f0 99.7%,#8a0"></i><i style="--g:#020,#0c0 30.4%,#2d0 43.2%,#470 53.4%,#3f0 58.5%,#0b0 67.6%,#460 73.9%,#6c0 84.2%,#7c0 86%,#960 87.8%,#c40 93.5%,#c30 95.9%,#a80 97%,#830 97.7%,#510 98.2%,#470 98.6%,#600 99.2%,#7f0 99.7%,#8a0"></i><i style="--g:#020,#0c0 30.4%,#2d0 43.2%,#460 53.4%,#3e0 58.5%,#0b0 67.6%,#400 73.9%,#690 84.2%,#7a0 86%,#960 88%,#c40 93.5%,#c30 95.9%,#a80 97%,#830 97.7%,#510 98.2%,#470 98.6%,#600 99.2%,#7f0 99.7%,#8a0"></i><i style="--g:#010,#0b0 32.2%,#340 53.8%,#2a0 59.5%,#090 67.7%,#390 73.9%,#4c0 79%,#720 85.7%,#930 87.8%,#c30 93.5%,#c20 95.9%,#a80 97%,#830 97.7%,#510 98.2%,#470 98.6%,#600 99.2%,#7f0 99.7%,#8a0"></i><i style="--g:#010,#0a0 35.1%,#210 55.2%,#070 67.7%,#320 73.7%,#390 77.2%,#720 85.9%,#940 88.1%,#c30 93.5%,#c20 95.9%,#a80 97%,#830 97.7%,#500 98.2%,#470 98.6%,#600 99.2%,#7f0 99.7%,#8a0"></i><i style="--g:#010,#0a0 35.5%,#1f0 55.5%,#070 67.9%,#2a0 73.9%,#2d0 77%,#6f0 85.9%,#910 88.1%,#c20 93.5%,#c20 95.9%,#a70 97%,#820 97.7%,#500 98.2%,#460 98.6%,#600 99.2%,#7f0 99.7%,#8a0"></i><i style="--g:#010,#0b0 32.4%,#320 54%,#270 59.8%,#070 67.9%,#230 73.9%,#250 77.3%,#6f0 86%,#980 88.9%,#c10 93.5%,#c10 95.9%,#a70 97%,#820 97.7%,#500 98.2%,#460 98.6%,#600 99.2%,#7f0 99.7%,#8a0"></i><i style="--g:#020,#0d0 30.1%,#2c0 42.1%,#4b0 52.8%,#450 58%,#0b0 68%,#1c0 74.2%,#1d0 77.6%,#6a0 86%,#950 89%,#c00 93.5%,#c10 95.9%,#a70 97%,#810 97.7%,#4f0 98.2%,#460 98.6%,#5f0 99.2%,#7f0 99.7%,#8a0"></i><i style="--g:#020,#0d0 29.4%,#2b0 40.5%,#540 52%,#510 57.6%,#0d0 68.5%,#150 74.8%,#170 78.1%,#660 86%,#940 89.3%,#bf0 93.4%,#c00 95.9%,#a60 97%,#810 97.7%,#4f0 98.2%,#450 98.6%,#5f0 99.2%,#7f0 99.7%,#8a0"></i><i style="--g:#020,#0c0 30.4%,#2d0 43%,#470 53.2%,#400 58.3%,#0a0 67.9%,#0f0 75.4%,#120 78.5%,#630 86.2%,#9f0 90.7%,#bd0 93.4%,#bf0 95.9%,#a50 97%,#800 97.7%,#4e0 98.2%,#450 98.6%,#5f0 99.2%,#7f0 99.7%,#8a0"></i><i style="--g:#010,#0b0 33%,#2e0 54.3%,#210 60.4%,#050 68.8%,#0b0 75.5%,#0e0 78.8%,#5c0 86.2%,#bb0 93.1%,#be0 95.9%,#a40 97%,#7f0 97.7%,#4d0 98.2%,#440 98.6%,#5f0 99.2%,#7f0 99.7%,#8a0"></i><i style="--g:#010,#0a0 35.4%,#200 55.3%,#040 69.5%,#070 77.5%,#0f0 79.7%,#580 86.3%,#b90 93.4%,#bd0 95.9%,#a30 97%,#7f0 97.7%,#4c0 98.2%,#430 98.6%,#5f0 99.2%,#7f0 99.7%,#8a0"></i><i style="--g:#010,#0b0 33%,#2f0 54.1%,#230 60.3%,#040 68.9%,#090 79.6%,#490 85.9%,#b70 93.2%,#bc0 95.9%,#a90 96.8%,#7d0 97.7%,#4b0 98.2%,#420 98.6%,#5f0 99.2%,#7f0 99.7%,#8a0"></i><i style="--g:#020,#0c0 30.4%,#2d0 43%,#470 53.2%,#400 58.3%,#090 67.9%,#030 76.7%,#080 80.2%,#420 85.9%,#860 90.2%,#b40 93.4%,#ba0 95.9%,#a80 96.8%,#7c0 97.7%,#4a0 98.2%,#410 98.6%,#5e0 99.2%,#7f0 99.7%,#890"></i><i style="--g:#020,#0d0 29.5%,#2b0 40.8%,#520 52.2%,#4e0 57.7%,#0c0 68.5%,#020 76%,#070 80.6%,#380 85.7%,#670 88.9%,#b10 93.2%,#b90 95.9%,#a70 96.8%,#7b0 97.7%,#490 98.2%,#400 98.6%,#5e0 99.2%,#7f0 99.7%,#890"></i><i style="--g:#020,#0d0 30.4%,#2d0 43%,#480 53.2%,#400 58.3%,#0a0 67.9%,#010 76.7%,#070 81.2%,#340 86%,#5c0 88.7%,#ad0 93.2%,#b70 95.9%,#a50 96.8%,#790 97.7%,#480 98.2%,#3f0 98.6%,#5e0 99.2%,#7f0 99.7%,#890"></i><i style="--g:#010,#0b0 32.8%,#2f0 54.1%,#230 60.3%,#040 69.1%,#040 81.2%,#270 85.6%,#4f0 88.6%,#a80 93.1%,#b50 95.9%,#a30 96.8%,#780 97.7%,#460 98.2%,#3d0 98.6%,#5d0 99.2%,#7f0 99.7%,#890"></i><i style="--g:#010,#0a0 34.9%,#220 55.2%,#0c0 64.6%,#010 74.6%,#060 82.1%,#2b0 86.5%,#460 88.6%,#a40 93.1%,#b20 95.9%,#a10 96.8%,#760 97.7%,#440 98.2%,#3c0 98.6%,#5d0 99.2%,#7f0 99.7%,#890"></i><i style="--g:#010,#0b0 32.4%,#330 54%,#270 59.8%,#050 68.8%,#030 82.1%,#220 86.3%,#3d0 88.6%,#a10 93.2%,#b00 95.9%,#9f0 96.8%,#740 97.7%,#420 98.2%,#3a0 98.6%,#560 99.1%,#7f0 99.7%,#890"></i><i style="--g:#020,#0d0 30.4%,#2d0 43%,#480 53.2%,#410 58.3%,#0a0 67.9%,#000 77.5%,#070 83.5%,#2f0 88.3%,#9c0 93.2%,#ad0 95.9%,#9d0 96.8%,#720 97.7%,#400 98.2%,#380 98.6%,#560 99.1%,#7e0 99.7%,#890"></i><i style="--g:#020,#0d0 30%,#2c0 41.8%,#4d0 52.6%,#480 57.9%,#0b0 68.2%,#000 77.3%,#060 83.9%,#2a0 88.4%,#650 91%,#980 93.4%,#aa0 95.9%,#9a0 96.8%,#6f0 97.7%,#3e0 98.2%,#360 98.6%,#560 99.1%,#7e0 99.7%,#890"></i><i style="--g:#010,#0c0 31.2%,#340 47.5%,#3d0 56.1%,#230 62.1%,#060 68.9%,#020 83.2%,#1c0 87.8%,#380 89.5%,#910 93.2%,#a70 95.9%,#970 96.8%,#6d0 97.7%,#3c0 98.2%,#340 98.6%,#550 99.1%,#7e0 99.7%,#890"></i><i style="--g:#010,#0a0 34%,#270 54.7%,#180 61.8%,#020 70.4%,#040 84.5%,#1f0 88.6%,#490 90.5%,#8c0 93.2%,#a40 95.9%,#940 96.8%,#6a0 97.7%,#390 98.2%,#320 98.6%,#3b0 98.8%,#4d0 98.9%,#680 99.4%,#7e0 99.7%,#890"></i><i style="--g:#010,#0a0 35.4%,#200 55.3%,#010 71.2%,#050 85.1%,#190 88.6%,#3d0 90.4%,#860 93.2%,#a00 95.9%,#910 96.8%,#670 97.7%,#360 98.2%,#2f0 98.6%,#3a0 98.8%,#4d0 98.9%,#680 99.4%,#7e0 99.7%,#890"></i><i style="--g:#010,#0b0 32.8%,#300 54.1%,#240 60.1%,#040 68.9%,#030 85.3%,#140 88.6%,#360 90.4%,#820 93.4%,#9c0 95.9%,#8e0 96.8%,#640 97.7%,#330 98.2%,#2d0 98.6%,#390 98.8%,#4c0 98.9%,#680 99.4%,#7e0 99.7%,#890"></i><i style="--g:#020,#0c0 30.9%,#2f0 44.7%,#430 54.3%,#370 59.2%,#090 67.9%,#000 78.8%,#070 86.9%,#130 88.9%,#330 90.5%,#7c0 93.4%,#980 95.9%,#8a0 96.8%,#600 97.7%,#300 98.2%,#2a0 98.6%,#4c0 98.9%,#670 99.4%,#7e0 99.7%,#890"></i><i style="--g:#020,#0c0 30.6%,#2d0 43.5%,#460 53.5%,#3d0 58.6%,#090 67.9%,#000 78.2%,#060 87.5%,#150 89.3%,#340 90.8%,#780 93.5%,#940 95.9%,#860 96.8%,#5d0 97.7%,#2d0 98.2%,#280 98.6%,#4b0 98.9%,#670 99.4%,#7e0 99.7%,#890"></i><i style="--g:#010,#0b0 31.9%,#370 53.8%,#2d0 59.4%,#060 68.5%,#010 85.4%,#0c0 88.9%,#220 90.4%,#710 93.5%,#900 95.9%,#820 96.8%,#590 97.7%,#290 98.2%,#250 98.6%,#4b0 98.9%,#670 99.4%,#7e0 99.7%,#890"></i><i style="--g:#010,#0a0 34.6%,#240 55%,#100 63.3%,#010 72.4%,#050 88.3%,#1a0 90.2%,#6d0 93.7%,#8b0 95.9%,#7e0 96.8%,#550 97.7%,#250 98.2%,#200 98.5%,#230 98.6%,#4b0 98.9%,#670 99.4%,#7e0 99.7%,#890"></i><i style="--g:#010,#0a0 35.2%,#200 55.3%,#010 71.2%,#050 88.6%,#180 90.4%,#6a0 93.8%,#870 95.9%,#7a0 96.8%,#510 97.7%,#210 98.2%,#1c0 98.5%,#210 98.6%,#4b0 98.9%,#670 99.4%,#7e0 99.7%,#890"></i><i style="--g:#010,#0b0 32.5%,#310 54%,#260 59.8%,#050 68.8%,#030 88.4%,#140 90.4%,#660 94%,#820 95.9%,#760 96.8%,#4d0 97.7%,#1d0 98.2%,#180 98.5%,#200 98.6%,#4b0 98.9%,#670 99.4%,#7e0 99.7%,#890"></i><i style="--g:#020,#0c0 30.7%,#2e0 44.2%,#440 54%,#390 58.9%,#090 67.9%,#000 78.7%,#050 89.3%,#180 90.8%,#630 94.1%,#7d0 95.9%,#720 96.8%,#490 97.7%,#190 98.2%,#140 98.5%,#1f0 98.6%,#4b0 98.9%,#670 99.4%,#7e0 99.7%,#890"></i><i style="--g:#020,#0c0 30.6%,#2e0 43.6%,#450 53.7%,#3d0 58.6%,#090 67.9%,#000 78.2%,#050 89.5%,#190 91.1%,#620 94.4%,#780 95.9%,#6d0 96.8%,#440 97.7%,#150 98.2%,#110 98.5%,#1e0 98.6%,#4b0 98.9%,#670 99.4%,#7e0 99.7%,#890"></i><i style="--g:#010,#0b0 32.1%,#350 53.8%,#2b0 59.5%,#060 68.5%,#010 88.3%,#0c0 90.5%,#6b0 95.3%,#720 96.1%,#6d0 96.7%,#3f0 97.7%,#110 98.2%,#0e0 98.5%,#340 98.8%,#4b0 98.9%,#670 99.4%,#7e0 99.7%,#890"></i><i style="--g:#010,#0a0 34.8%,#230 55.2%,#0d0 64.3%,#000 74.3%,#040 89.9%,#200 91.9%,#650 95.3%,#6d0 96.1%,#680 96.7%,#3b0 97.7%,#0c0 98.2%,#0c0 98.5%,#4b0 98.9%,#670 99.4%,#7e0 99.7%,#890"></i><i style="--g:#010,#0a0 35.7%,#1f0 55.5%,#010 71.3%,#040 90.1%,#1e0 92%,#680 95.8%,#640 96.7%,#360 97.7%,#070 98.2%,#0b0 98.5%,#4b0 98.9%,#670 99.4%,#7e0 99.7%,#890"></i><i style="--g:#010,#0a0 33.4%,#2b0 54.4%,#1e0 60.9%,#030 69.5%,#030 90.2%,#1d0 92.2%,#640 95.9%,#600 96.7%,#310 97.7%,#030 98.2%,#0b0 98.5%,#4b0 98.9%,#670 99.4%,#7e0 99.7%,#890"></i><i style="--g:#010,#0b0 31.8%,#390 53.7%,#2f0 59.2%,#060 68.3%,#000 85.6%,#050 90.7%,#240 92.8%,#5f0 95.9%,#610 96.5%,#410 97.3%,#2c0 97.7%,#010 98.2%,#0b0 98.5%,#4b0 98.9%,#670 99.4%,#7e0 99.7%,#890"></i><i style="--g:#010,#0b0 31.6%,#390 53.7%,#2f0 59.2%,#060 68.3%,#000 85.4%,#050 90.8%,#230 92.9%,#5a0 96.1%,#5d0 96.5%,#3d0 97.3%,#270 97.7%,#080 98%,#010 98.2%,#0b0 98.5%,#4b0 98.9%,#670 99.4%,#7e0 99.7%,#890"></i><i style="--g:#010,#0b0 33.3%,#2c0 54.3%,#1f0 60.6%,#030 69.4%,#040 90.8%,#1e0 92.9%,#560 96.1%,#5a0 96.5%,#380 97.3%,#220 97.7%,#040 98%,#060 98.3%,#0b0 98.5%,#4b0 98.9%,#670 99.4%,#7e0 99.7%,#890"></i><i style="--g:#010,#0a0 35.7%,#1f0 55.5%,#010 71.3%,#040 91%,#200 93.2%,#580 96.5%,#340 97.3%,#1d0 97.7%,#020 98%,#060 98.3%,#0b0 98.5%,#4b0 98.9%,#670 99.4%,#7e0 99.7%,#890"></i><i style="--g:#010,#090 36.6%,#1b0 56.1%,#010 71.6%,#040 91.3%,#250 93.8%,#550 96.5%,#310 97.3%,#020 98%,#060 98.3%,#0b0 98.5%,#4b0 98.9%,#670 99.4%,#7e0 99.7%,#890"></i><i style="--g:#010,#090 36%,#1d0 55.8%,#010 71.3%,#040 91.4%,#260 94.1%,#530 96.5%,#2e0 97.3%,#130 97.7%,#050 97.9%,#010 98.2%,#0b0 98.5%,#4b0 98.9%,#670 99.4%,#7e0 99.7%,#890"></i><i style="--g:#010,#0a0 33.3%,#2c0 54.3%,#1f0 60.7%,#030 69.4%,#040 91.6%,#270 94.4%,#520 96.5%,#370 97.1%,#040 97.9%,#010 98.2%,#0b0 98.5%,#4b0 98.9%,#670 99.4%,#7e0 99.7%,#890"></i><i style="--g:#010,#0c0 31%,#300 45.4%,#410 54.7%,#320 59.8%,#080 68%,#000 80%,#040 91.9%,#2a0 94.9%,#500 96.5%,#350 97.1%,#0a0 97.7%,#010 98.2%,#0b0 98.5%,#4b0 98.9%,#670 99.4%,#7e0 99.7%,#890"></i><i style="--g:#020,#0d0 30.3%,#2d0 42.6%,#490 53.1%,#430 58.2%,#0a0 68%,#000 77.8%,#040 92%,#280 95%,#500 96.5%,#340 97.1%,#070 97.7%,#010 98.2%,#0b0 98.5%,#4b0 98.9%,#670 99.4%,#7e0 99.7%,#890"></i><i style="--g:#010,#0c0 31.2%,#330 47.2%,#3e0 55.9%,#250 61.8%,#060 68.8%,#000 88.6%,#070 92.6%,#290 95.3%,#4f0 96.5%,#340 97.1%,#070 97.7%,#010 98.2%,#0b0 98.5%,#4b0 98.9%,#670 99.4%,#7e0 99.7%,#890"></i><i style="--g:#010,#0a0 33.7%,#290 54.6%,#1a0 61.3%,#020 70%,#040 92.3%,#230 95.2%,#4e0 96.5%,#330 97.1%,#070 97.7%,#010 98.2%,#0b0 98.5%,#4b0 98.9%,#670 99.4%,#7e0 99.7%,#890"></i><i style="--g:#010,#090 36.1%,#1c0 55.8%,#010 71.5%,#040 92.5%,#1f0 95.2%,#4e0 96.5%,#330 97.1%,#070 97.7%,#010 98.2%,#0b0 98.5%,#4b0 98.9%,#670 99.4%,#7e0 99.7%,#890"></i><i style="--g:#010,#090 36.4%,#1c0 55.9%,#010 71.5%,#040 92.6%,#1c0 95.2%,#4e0 96.5%,#330 97.1%,#070 97.7%,#010 98.2%,#0b0 98.5%,#4b0 98.9%,#670 99.4%,#7e0 99.7%,#890"></i><i style="--g:#010,#0a0 34.3%,#260 54.9%,#140 62.4%,#010 71.2%,#030 92.8%,#190 95.2%,#4e0 96.5%,#330 97.1%,#070 97.7%,#010 98.2%,#0b0 98.5%,#4b0 98.9%,#670 99.4%,#7e0 99.7%,#890"></i><i style="--g:#010,#0c0 31.5%,#3c0 53.5%,#330 58.9%,#070 68.2%,#000 82.4%,#050 93.2%,#170 95.2%,#4e0 96.5%,#330 97.1%,#070 97.7%,#010 98.2%,#0b0 98.5%,#4b0 98.9%,#670 99.4%,#7e0 99.7%,#890"></i><i style="--g:#020,#0d0 30%,#2c0 41.8%,#4c0 52.6%,#470 57.9%,#0a0 68.2%,#000 77.5%,#040 93.4%,#150 95.2%,#4e0 96.5%,#330 97.1%,#070 97.7%,#010 98.2%,#0b0 98.5%,#4b0 98.9%,#670 99.4%,#7e0 99.7%,#890"></i><i style="--g:#020,#0d0 30.3%,#2d0 42.6%,#490 53.1%,#420 58.2%,#0a0 68%,#000 77.9%,#040 93.5%,#130 95.2%,#4e0 96.5%,#330 97.1%,#070 97.7%,#010 98.2%,#0b0 98.5%,#4b0 98.9%,#670 99.4%,#7e0 99.7%,#890"></i><i style="--g:#010,#0b0 32.2%,#340 53.8%,#2a0 59.5%,#050 68.6%,#010 92.5%,#0f0 95%,#4e0 96.5%,#330 97.1%,#070 97.7%,#010 98.2%,#0b0 98.5%,#4b0 98.9%,#670 99.4%,#7e0 99.7%,#890"></i><i style="--g:#010,#0a0 35.2%,#210 55.3%,#010 71.2%,#040 93.8%,#110 95.2%,#4e0 96.5%,#330 97.1%,#070 97.7%,#010 98.2%,#0b0 98.5%,#4b0 98.9%,#670 99.4%,#7e0 99.7%,#890"></i><i style="--g:#010,#090 36.4%,#1b0 55.9%,#010 71.6%,#040 94.1%,#110 95.2%,#4e0 96.5%,#330 97.1%,#070 97.7%,#010 98.2%,#0b0 98.5%,#4b0 98.9%,#670 99.4%,#7e0 99.7%,#890"></i><i style="--g:#010,#0a0 35.1%,#210 55.2%,#010 71.2%,#040 94.3%,#110 95.2%,#4e0 96.5%,#330 97.1%,#070 97.7%,#010 98.2%,#0b0 98.5%,#4b0 98.9%,#670 99.4%,#7e0 99.7%,#890"></i><i style="--g:#010,#0b0 31.8%,#380 53.7%,#2e0 59.2%,#060 68.3%,#000 86.2%,#040 94.4%,#100 95.2%,#4a0 96.4%,#4e0 96.5%,#330 97.1%,#070 97.7%,#010 98.2%,#0b0 98.5%,#4b0 98.9%,#670 99.4%,#7e0 99.7%,#890"></i><i style="--g:#020,#0d0 29.7%,#2c0 41.2%,#500 52.3%,#4c0 57.7%,#0b0 68.5%,#000 77.6%,#040 94.4%,#100 95.2%,#4a0 96.4%,#4e0 96.5%,#330 97.1%,#070 97.7%,#010 98.2%,#0b0 98.5%,#4b0 98.9%,#670 99.4%,#7e0 99.7%,#890"></i><i style="--g:#020,#0e0 29.4%,#2c0 40.3%,#550 51.9%,#530 57.4%,#0c0 68.8%,#000 77.3%,#040 94.4%,#100 95.2%,#4a0 96.4%,#4e0 96.5%,#330 97.1%,#070 97.7%,#010 98.2%,#0b0 98.5%,#4b0 98.9%,#670 99.4%,#7e0 99.7%,#890"></i><i style="--g:#020,#0c0 30.6%,#2e0 43.6%,#450 53.7%,#3d0 58.6%,#090 67.9%,#000 78.2%,#040 94.4%,#100 95.2%,#4a0 96.4%,#4e0 96.5%,#330 97.1%,#070 97.7%,#010 98.2%,#0b0 98.5%,#4b0 98.9%,#670 99.4%,#7e0 99.7%,#890"></i><i style="--g:#010,#0a0 33.4%,#2b0 54.4%,#1d0 60.9%,#030 69.5%,#040 94.4%,#100 95.2%,#4a0 96.4%,#4e0 96.5%,#330 97.1%,#070 97.7%,#010 98.2%,#0b0 98.5%,#4b0 98.9%,#670 99.4%,#7e0 99.7%,#890"></i><i style="--g:#010,#090 35.8%,#1e0 55.6%,#010 71.3%,#040 94.4%,#100 95.2%,#4a0 96.4%,#4e0 96.5%,#330 97.1%,#070 97.7%,#010 98.2%,#0b0 98.5%,#4b0 98.9%,#670 99.4%,#7e0 99.7%,#890"></i><i style="--g:#010,#0a0 34%,#270 54.7%,#170 61.9%,#020 70.6%,#030 94.3%,#100 95.2%,#4a0 96.4%,#4e0 96.5%,#330 97.1%,#070 97.7%,#010 98.2%,#0b0 98.5%,#4b0 98.9%,#670 99.4%,#7e0 99.7%,#890"></i><i style="--g:#010,#0c0 31.5%,#3c0 53.5%,#330 58.9%,#070 68.2%,#000 82.6%,#040 94.3%,#110 95.2%,#4a0 96.4%,#4e0 96.5%,#330 97.1%,#070 97.7%,#010 98.2%,#0b0 98.5%,#4b0 98.9%,#670 99.4%,#7e0 99.7%,#890"></i><i style="--g:#020,#0d0 30.3%,#2d0 42.7%,#490 53.1%,#420 58.2%,#0a0 68%,#000 77.9%,#040 94.1%,#110 95.2%,#4e0 96.5%,#330 97.1%,#070 97.7%,#010 98.2%,#0b0 98.5%,#4b0 98.9%,#670 99.4%,#7e0 99.7%,#890"></i><i style="--g:#020,#0c0 30.9%,#2f0 44.7%,#430 54.3%,#370 59.2%,#090 67.9%,#000 78.8%,#050 94%,#120 95.2%,#4e0 96.5%,#330 97.1%,#070 97.7%,#010 98.2%,#0b0 98.5%,#4b0 98.9%,#670 99.4%,#7e0 99.7%,#890"></i><i style="--g:#010,#0b0 33%,#2e0 54.3%,#210 60.4%,#040 69.2%,#030 93.5%,#130 95.2%,#4e0 96.5%,#330 97.1%,#070 97.7%,#010 98.2%,#0b0 98.5%,#4b0 98.9%,#670 99.4%,#7e0 99.7%,#890"></i><i style="--g:#010,#0a0 35.8%,#1e0 55.6%,#010 71.3%,#040 93.4%,#150 95.2%,#4e0 96.5%,#330 97.1%,#070 97.7%,#010 98.2%,#0b0 98.5%,#4b0 98.9%,#670 99.4%,#7e0 99.7%,#890"></i><i style="--g:#010,#090 36.4%,#1c0 55.9%,#010 71.5%,#040 93.2%,#170 95.2%,#4e0 96.5%,#330 97.1%,#070 97.7%,#010 98.2%,#0b0 98.5%,#4b0 98.9%,#670 99.4%,#7e0 99.7%,#890"></i><i style="--g:#010,#0a0 34.8%,#230 55%,#100 63.4%,#010 72.8%,#040 92.9%,#1b0 95.2%,#4e0 96.5%,#330 97.1%,#070 97.7%,#010 98.2%,#0b0 98.5%,#4b0 98.9%,#670 99.4%,#7e0 99.7%,#890"></i><i style="--g:#010,#0b0 32.5%,#320 54%,#270 59.8%,#050 68.8%,#020 92.2%,#170 94.7%,#270 95.5%,#4e0 96.5%,#330 97.1%,#070 97.7%,#010 98.2%,#0b0 98.5%,#4b0 98.9%,#670 99.4%,#7e0 99.7%,#890"></i><i style="--g:#010,#0c0 31.5%,#3b0 53.5%,#320 58.9%,#070 68.2%,#000 82.9%,#040 92.6%,#230 95.2%,#4f0 96.5%,#340 97.1%,#070 97.7%,#010 98.2%,#0b0 98.5%,#4b0 98.9%,#670 99.4%,#7e0 99.7%,#890"></i><i style="--g:#010,#0b0 32.2%,#340 53.8%,#2a0 59.5%,#050 68.6%,#010 91.4%,#120 93.8%,#2f0 95.5%,#4f0 96.5%,#340 97.1%,#070 97.7%,#010 98.2%,#0b0 98.5%,#4b0 98.9%,#670 99.4%,#7e0 99.7%,#890"></i><i style="--g:#010,#0a0 34.3%,#250 54.9%,#140 62.5%,#010 71.3%,#030 92%,#220 94.6%,#490 96.2%,#500 96.5%,#350 97.1%,#0a0 97.7%,#010 98.2%,#0b0 98.5%,#4b0 98.9%,#670 99.4%,#7e0 99.7%,#890"></i><i style="--g:#010,#090 36.3%,#1c0 55.9%,#010 71.5%,#040 91.9%,#240 94.4%,#520 96.5%,#370 97.1%,#040 97.9%,#010 98.2%,#0b0 98.5%,#4b0 98.9%,#670 99.4%,#7e0 99.7%,#890"></i><i style="--g:#010,#090 36.6%,#1b0 56.1%,#010 71.6%,#040 91.7%,#240 94.1%,#540 96.5%,#2f0 97.3%,#160 97.7%,#070 97.9%,#010 98.2%,#0b0 98.5%,#4b0 98.9%,#670 99.4%,#7e0 99.7%,#890"></i><i style="--g:#010,#090 36%,#1d0 55.8%,#010 71.3%,#040 91.4%,#210 93.7%,#550 96.4%,#510 96.7%,#1c0 97.7%,#020 98%,#060 98.3%,#0b0 98.5%,#4b0 98.9%,#670 99.4%,#7e0 99.7%,#890"></i><i style="--g:#010,#0a0 33.3%,#2c0 54.3%,#1f0 60.7%,#030 69.4%,#040 91.3%,#200 93.4%,#550 96.1%,#5a0 96.5%,#380 97.3%,#230 97.7%,#040 98%,#010 98.2%,#0b0 98.5%,#4b0 98.9%,#670 99.4%,#7e0 99.7%,#890"></i><i style="--g:#020,#0c0 30.9%,#2f0 44.8%,#420 54.4%,#350 59.5%,#090 67.9%,#000 79%,#040 91.1%,#200 93.1%,#5a0 95.9%,#5e0 96.5%,#3e0 97.3%,#290 97.7%,#0b0 98%,#010 98.2%,#0b0 98.5%,#4b0 98.9%,#670 99.4%,#7e0 99.7%,#890"></i><i style="--g:#020,#0d0 30.1%,#2c0 42.1%,#4b0 52.8%,#460 58%,#0a0 68.2%,#000 77.8%,#040 90.8%,#1c0 92.6%,#610 95.9%,#5e0 96.7%,#300 97.7%,#020 98.2%,#0b0 98.5%,#4b0 98.9%,#670 99.4%,#7e0 99.7%,#890"></i><i style="--g:#020,#0c0 30.9%,#2f0 45%,#410 54.6%,#340 59.7%,#080 68%,#000 79.9%,#040 90.7%,#1e0 92.5%,#670 95.9%,#640 96.7%,#360 97.7%,#080 98.2%,#0c0 98.5%,#4b0 98.9%,#670 99.4%,#7e0 99.7%,#890"></i><i style="--g:#010,#0a0 33.4%,#2b0 54.4%,#1e0 60.9%,#030 69.5%,#040 90.4%,#1d0 92.2%,#6e0 95.9%,#690 96.7%,#3c0 97.7%,#0e0 98.2%,#0d0 98.5%,#4b0 98.9%,#670 99.4%,#7e0 99.7%,#890"></i><i style="--g:#010,#090 36%,#1d0 55.8%,#010 71.3%,#040 90.2%,#1f0 92%,#740 95.8%,#6f0 96.7%,#430 97.7%,#140 98.2%,#100 98.5%,#1e0 98.6%,#4b0 98.9%,#670 99.4%,#7e0 99.7%,#890"></i><i style="--g:#010,#090 35.7%,#1e0 55.6%,#010 71.3%,#040 89.9%,#1b0 91.6%,#6f0 95.2%,#7b0 95.9%,#710 96.8%,#490 97.7%,#1a0 98.2%,#160 98.5%,#1f0 98.6%,#4b0 98.9%,#670 99.4%,#7e0 99.7%,#890"></i><i style="--g:#010,#0b0 32.8%,#2f0 54.1%,#230 60.3%,#040 69.1%,#040 89.6%,#1a0 91.3%,#6b0 94.6%,#820 95.9%,#770 96.8%,#4f0 97.7%,#200 98.2%,#1b0 98.5%,#210 98.6%,#4b0 98.9%,#670 99.4%,#7e0 99.7%,#890"></i><i style="--g:#020,#0c0 30.6%,#2e0 43.6%,#460 53.7%,#3d0 58.6%,#090 67.9%,#000 78.2%,#040 89.5%,#190 91%,#6d0 94.3%,#880 95.9%,#7d0 96.8%,#540 97.7%,#250 98.2%,#200 98.5%,#240 98.6%,#4b0 98.9%,#670 99.4%,#7e0 99.7%,#890"></i><i style="--g:#020,#0d0 30%,#2d0 41.8%,#4d0 52.6%,#490 57.9%,#0a0 68.3%,#000 77.8%,#050 89.2%,#180 90.7%,#6f0 94%,#8e0 95.9%,#820 96.8%,#5a0 97.7%,#2a0 98.2%,#270 98.6%,#4b0 98.9%,#670 99.4%,#7e0 99.7%,#890"></i><i style="--g:#020,#0c0 30.9%,#2f0 45%,#410 54.4%,#350 59.5%,#080 68%,#000 79.9%,#060 89%,#1a0 90.5%,#710 93.7%,#940 95.9%,#880 96.8%,#5f0 97.7%,#300 98.2%,#2b0 98.6%,#4c0 98.9%,#680 99.4%,#7e0 99.7%,#890"></i><i style="--g:#010,#0a0 33.6%,#2a0 54.4%,#1c0 61%,#030 69.7%,#040 88.4%,#190 90.2%,#790 93.7%,#9a0 95.9%,#8d0 96.8%,#640 97.7%,#340 98.2%,#2e0 98.6%,#390 98.8%,#4c0 98.9%,#680 99.4%,#7e0 99.7%,#890"></i><i style="--g:#010,#090 36.1%,#1d0 55.8%,#010 71.5%,#050 88.1%,#1b0 90.1%,#7e0 93.5%,#a00 95.9%,#920 96.8%,#690 97.7%,#390 98.2%,#320 98.6%,#3b0 98.8%,#4d0 98.9%,#680 99.4%,#7e0 99.7%,#890"></i><i style="--g:#010,#0a0 35.7%,#1e0 55.6%,#010 71.3%,#040 87.4%,#120 89.2%,#300 90.5%,#830 93.4%,#a50 95.9%,#970 96.8%,#6d0 97.7%,#3d0 98.2%,#360 98.6%,#560 99.1%,#7e0 99.7%,#890"></i><i style="--g:#010,#0b0 32.8%,#2f0 54.1%,#240 60.1%,#040 68.9%,#030 86.3%,#110 88.7%,#340 90.4%,#890 93.2%,#ab0 95.8%,#9b0 96.8%,#710 97.7%,#410 98.2%,#390 98.6%,#560 99.1%,#7f0 99.7%,#890"></i><i style="--g:#020,#0c0 30.6%,#2e0 43.8%,#450 53.7%,#3b0 58.8%,#090 67.9%,#000 78.4%,#060 86.5%,#170 88.7%,#3d0 90.4%,#910 93.2%,#af0 95.8%,#9f0 96.8%,#750 97.7%,#450 98.2%,#3d0 98.6%,#5e0 99.2%,#7f0 99.7%,#890"></i><i style="--g:#020,#0d0 30.1%,#2d0 42.3%,#4b0 52.8%,#450 58%,#0a0 68.2%,#000 77.8%,#050 85.7%,#1b0 88.6%,#470 90.4%,#960 93.1%,#b40 95.8%,#a30 96.8%,#790 97.7%,#480 98.2%,#400 98.6%,#5e0 99.2%,#7f0 99.7%,#8a0"></i><i style="--g:#010,#0c0 31.2%,#340 47.5%,#3d0 56.1%,#230 62.1%,#060 68.9%,#020 84.1%,#1a0 88%,#470 90.1%,#9a0 92.9%,#b80 95.8%,#a70 96.8%,#7c0 97.7%,#4b0 98.2%,#430 98.6%,#5f0 99.2%,#7f0 99.7%,#8a0"></i><i style="--g:#010,#0a0 33.9%,#280 54.6%,#190 61.5%,#020 70.1%,#040 84.4%,#250 88.3%,#650 90.7%,#a60 93.2%,#bb0 95.9%,#aa0 96.8%,#7f0 97.7%,#4e0 98.2%,#450 98.6%,#600 99.2%,#7f0 99.7%,#8a0"></i><i style="--g:#010,#0a0 34.5%,#240 54.9%,#130 62.7%,#010 71.6%,#050 83.9%,#250 87.5%,#3a0 88.7%,#aa0 93.1%,#be0 95.9%,#a60 97%,#820 97.7%,#500 98.2%,#470 98.6%,#600 99.2%,#7f0 99.7%,#8a0"></i><i style="--g:#010,#0b0 32.2%,#350 53.8%,#2b0 59.5%,#060 68.5%,#020 82.6%,#180 85.7%,#410 88.6%,#ad0 92.9%,#c20 95.8%,#af0 96.8%,#840 97.7%,#530 98.2%,#490 98.6%,#610 99.2%,#800 99.7%,#8a0"></i><i style="--g:#020,#0c0 30.6%,#2e0 43.6%,#460 53.5%,#3d0 58.6%,#090 67.9%,#000 77.8%,#070 83.2%,#2c0 86.6%,#4d0 88.6%,#b00 92.8%,#c30 95.5%,#be0 96.2%,#aa0 97%,#860 97.7%,#540 98.2%,#4d0 98.8%,#850 99.8%,#8a0"></i><i style="--g:#020,#0d0 30.1%,#2c0 42.3%,#4a0 52.9%,#430 58.2%,#0a0 68%,#000 77.2%,#080 82.7%,#2f0 86.2%,#580 88.6%,#b50 92.8%,#c70 95.8%,#b40 96.8%,#880 97.7%,#560 98.2%,#4e0 98.8%,#850 99.8%,#8a0"></i><i style="--g:#010,#0c0 31.2%,#320 46.5%,#3f0 55.5%,#2b0 60.9%,#070 68.3%,#020 79%,#0b0 82.6%,#3c0 86.3%,#680 88.7%,#bf0 93.1%,#c80 95.9%,#ae0 97%,#8a0 97.7%,#580 98.2%,#500 98.8%,#850 99.8%,#8a0"></i><i style="--g:#010,#0b0 33.3%,#2c0 54.3%,#200 60.6%,#030 69.4%,#050 80.8%,#1a0 83.3%,#520 86.9%,#7c0 89.2%,#c30 93.2%,#c90 95.9%,#b00 97%,#8b0 97.7%,#590 98.2%,#510 98.8%,#6d0 99.4%,#800 99.7%,#8a0"></i><i style="--g:#010,#0a0 35.5%,#1f0 55.5%,#010 71.2%,#090 80.9%,#2b0 83.9%,#7a0 88.6%,#c60 93.2%,#cb0 95.9%,#b10 97%,#8c0 97.7%,#5a0 98.2%,#520 98.8%,#6d0 99.4%,#800 99.7%,#8a0"></i><i style="--g:#010,#0a0 35.2%,#210 55.3%,#010 71.2%,#0b0 80.3%,#2a0 83.2%,#650 86.8%,#c80 93.1%,#cc0 95.9%,#b20 97%,#8d0 97.7%,#5b0 98.2%,#520 98.8%,#6e0 99.4%,#800 99.7%,#8a0"></i><i style="--g:#010,#0b0 33.3%,#2c0 54.3%,#200 60.6%,#030 69.4%,#080 77.9%,#180 81.1%,#690 86.5%,#b80 91.7%,#cc0 93.5%,#cd0 95.9%,#b30 97%,#8e0 97.7%,#5c0 98.2%,#530 98.8%,#6e0 99.4%,#810 99.7%,#8a0"></i><i style="--g:#010,#0b0 31.9%,#380 53.7%,#2e0 59.2%,#060 68.3%,#070 75.5%,#180 80.2%,#700 86.3%,#9e0 89.3%,#cd0 93.4%,#ce0 95.9%,#b40 97%,#8f0 97.7%,#5c0 98.2%,#530 98.8%,#6e0 99.4%,#810 99.7%,#8a0"></i><i style="--g:#010,#0b0 31.6%,#390 53.7%,#2f0 59.2%,#060 68.3%,#090 75.1%,#1e0 79.7%,#790 86.3%,#910 88%,#ce0 93.4%,#ce0 95.9%,#b40 97%,#8f0 97.7%,#5d0 98.2%,#540 98.8%,#6e0 99.4%,#810 99.7%,#8a0"></i><i style="--g:#010,#0b0 32.7%,#300 54.1%,#240 60.1%,#050 68.8%,#110 76.1%,#270 79.6%,#840 86.5%,#960 87.8%,#cf0 93.4%,#cf0 95.9%,#b50 97%,#8f0 97.7%,#5d0 98.2%,#540 98.8%,#6e0 99.4%,#810 99.7%,#8a0"></i><i style="--g:#010,#0a0 34.8%,#230 55%,#100 63.3%,#060 69.4%,#190 76.4%,#340 79.6%,#8a0 86.5%,#990 87.7%,#d00 93.4%,#cf0 95.9%,#b50 97%,#900 97.7%,#5d0 98.2%,#540 98.8%,#6e0 99.4%,#810 99.7%,#8a0"></i><i style="--g:#010,#090 36.1%,#1d0 55.8%,#060 68.5%,#1f0 76%,#3d0 79.3%,#8d0 86.3%,#9d0 87.5%,#d10 93.5%,#d00 95.9%,#b50 97%,#900 97.7%,#5e0 98.2%,#540 98.8%,#6e0 99.4%,#810 99.7%,#8a0"></i><i style="--g:#010,#090 36.4%,#1b0 55.9%,#070 67.7%,#270 75.8%,#910 86.3%,#a00 87.5%,#cc0 92.6%,#d10 94.6%,#cd0 96.1%,#b50 97%,#900 97.7%,#5e0 98.2%,#540 98.8%,#6e0 99.4%,#810 99.7%,#8a0"></i><i style="--g:#010,#090 36.3%,#1c0 55.9%,#080 67.3%,#330 76%,#760 83.2%,#910 86.2%,#a20 87.5%,#ca0 92.5%,#d10 93.8%,#d00 95.9%,#b50 97%,#900 97.7%,#5e0 98.2%,#540 98.8%,#6e0 99.4%,#810 99.7%,#8a0"></i><i style="--g:#010,#0a0 35.2%,#210 55.3%,#090 67%,#2b0 73.1%,#4e0 77.5%,#920 86.2%,#a20 87.5%,#ca0 92.5%,#d10 93.8%,#d00 95.9%,#b50 97%,#900 97.7%,#5e0 98.2%,#540 98.8%,#6e0 99.4%,#810 99.7%,#8a0"></i><i style="--g:#010,#0b0 32.7%,#300 54.1%,#240 60.1%,#0c0 66.8%,#320 72.5%,#530 77%,#8f0 86%,#a20 87.5%,#ca0 92.5%,#d10 93.8%,#d00 95.9%,#b50 97%,#900 97.7%,#5e0 98.2%,#540 98.8%,#6e0 99.4%,#810 99.7%,#8a0"></i><i style="--g:#020,#0c0 30.7%,#2e0 44.2%,#440 54%,#3a0 58.9%,#0f0 66.7%,#3a0 72.2%,#6e0 80.8%,#8b0 85.9%,#a10 87.5%,#cc0 92.6%,#d10 94.6%,#cd0 96.1%,#b50 97%,#900 97.7%,#5e0 98.2%,#540 98.8%,#6e0 99.4%,#810 99.7%,#8a0"></i><i style="--g:#020,#0d0 30%,#2c0 41.8%,#4c0 52.6%,#480 57.9%,#130 66.7%,#410 72.1%,#6c0 80.8%,#880 85.9%,#a00 87.5%,#d10 93.5%,#d00 95.9%,#b50 97%,#900 97.7%,#5e0 98.2%,#540 98.8%,#6e0 99.4%,#810 99.7%,#8a0"></i><i style="--g:#020,#0c0 30.4%,#2d0 43.2%,#460 53.4%,#3e0 58.5%,#110 66.4%,#460 71.9%,#7e0 85.3%,#a00 87.7%,#d10 93.5%,#d00 95.9%,#b50 97%,#900 97.7%,#5e0 98.2%,#540 98.8%,#6e0 99.4%,#810 99.7%,#8a0"></i><i style="--g:#010,#0b0 32.2%,#340 53.8%,#2a0 59.5%,#0f0 66.1%,#480 71.8%,#750 84.2%,#850 86%,#9f0 87.7%,#d10 93.5%,#d00 95.9%,#b50 97%,#900 97.7%,#5e0 98.2%,#540 98.8%,#6e0 99.4%,#810 99.7%,#8a0"></i><i style="--g:#010,#0a0 34.8%,#230 55%,#100 63.4%,#0c0 65.9%,#480 71.6%,#6f0 83.6%,#800 85.9%,#9f0 87.8%,#d10 93.5%,#d00 95.9%,#b50 97%,#900 97.7%,#5e0 98.2%,#540 98.8%,#6e0 99.4%,#810 99.7%,#8a0"></i><i style="--g:#010,#0a0 35.8%,#1e0 55.6%,#0b0 65.8%,#450 71.6%,#5e0 80.8%,#7e0 85.9%,#9e0 87.8%,#d00 93.4%,#cf0 95.9%,#b50 97%,#900 97.7%,#5d0 98.2%,#540 98.8%,#6e0 99.4%,#810 99.7%,#8a0"></i><i style="--g:#010,#0a0 33.6%,#2a0 54.4%,#1c0 61%,#0d0 65.9%,#3f0 71.6%,#480 77.2%,#760 85.6%,#9e0 88%,#d00 93.4%,#cf0 95.9%,#b50 97%,#900 97.7%,#5d0 98.2%,#540 98.8%,#6e0 99.4%,#810 99.7%,#8a0"></i><i style="--g:#020,#0c0 30.7%,#2e0 44.2%,#440 54%,#390 58.9%,#110 66.2%,#380 71.8%,#390 76.6%,#790 85.9%,#9b0 88%,#cf0 93.4%,#cf0 95.9%,#b40 97%,#8f0 97.7%,#5d0 98.2%,#540 98.8%,#6e0 99.4%,#810 99.7%,#8a0"></i><i style="--g:#020,#0e0 28.9%,#2b0 39.6%,#5b0 51.7%,#590 57.4%,#2d0 63.9%,#190 67.4%,#2f0 71.9%,#2c0 76.7%,#750 85.9%,#990 88.1%,#ce0 93.4%,#ce0 95.9%,#b40 97%,#8f0 97.7%,#5d0 98.2%,#530 98.8%,#6e0 99.4%,#810 99.7%,#8a0"></i><i style="--g:#020,#0e0 28.5%,#2c0 38.7%,#630 51.4%,#630 57.1%,#400 62.5%,#1a0 67.7%,#250 72.7%,#210 77.2%,#730 86%,#9f0 88.9%,#cd0 93.4%,#cd0 95.9%,#b30 97%,#8e0 97.7%,#5c0 98.2%,#530 98.8%,#6e0 99.4%,#810 99.7%,#8a0"></i><i style="--g:#020,#0e0 29.2%,#2c0 40.2%,#570 51.9%,#540 57.4%,#230 64.8%,#130 68.2%,#1d0 72.8%,#180 77.6%,#6d0 86%,#9d0 89.2%,#cb0 93.4%,#cc0 95.9%,#b20 97%,#8d0 97.7%,#5b0 98.2%,#520 98.8%,#6e0 99.4%,#800 99.7%,#8a0"></i><i style="--g:#010,#0c0 31.3%,#3d0 53.5%,#340 58.9%,#0c0 67.1%,#150 73.1%,#110 78.1%,#660 86%,#9e0 89.8%,#c90 93.4%,#cb0 95.9%,#b10 97%,#8c0 97.7%,#5a0 98.2%,#520 98.8%,#6d0 99.4%,#800 99.7%,#8a0"></i><i style="--g:#010,#0a0 34.2%,#260 54.7%,#170 61.9%,#090 67.7%,#0e0 73.9%,#0c0 78.5%,#600 86.2%,#c60 93.2%,#ca0 95.9%,#b00 97%,#8b0 97.7%,#590 98.2%,#510 98.8%,#6d0 99.4%,#800 99.7%,#8a0"></i><i style="--g:#010,#0a0 34.3%,#250 54.9%,#140 62.5%,#070 68.5%,#090 79.1%,#540 86%,#c30 93.2%,#c80 95.9%,#af0 97%,#8a0 97.7%,#580 98.2%,#500 98.8%,#6d0 99.4%,#800 99.7%,#8a0"></i><i style="--g:#010,#0b0 31.9%,#370 53.7%,#2e0 59.2%,#070 68.2%,#070 79.6%,#3a0 84.7%,#790 88.9%,#c00 93.4%,#c60 95.9%,#ad0 97%,#890 97.7%,#570 98.2%,#4f0 98.8%,#850 99.8%,#8a0"></i><i style="--g:#020,#0d0 30.1%,#2c0 42.3%,#4a0 52.9%,#440 58.2%,#0a0 68%,#020 79.3%,#1d0 83%,#4f0 86.9%,#6b0 88.7%,#bc0 93.2%,#c40 95.9%,#ab0 97%,#870 97.7%,#550 98.2%,#4e0 98.8%,#850 99.8%,#8a0"></i><i style="--g:#020,#0d0 29.7%,#2c0 41.1%,#510 52.2%,#4d0 57.7%,#0b0 68.5%,#010 77%,#070 81.2%,#340 85.9%,#5f0 88.7%,#b70 93.2%,#c20 95.9%,#a90 97%,#850 97.7%,#530 98.2%,#4a0 98.6%,#610 99.2%,#800 99.7%,#8a0"></i><i style="--g:#020,#0d0 30.4%,#2d0 43%,#470 53.2%,#400 58.3%,#0a0 67.9%,#010 77.3%,#070 82%,#300 86.3%,#500 88.6%,#b10 93.1%,#bf0 95.9%,#a60 97%,#820 97.7%,#510 98.2%,#480 98.6%,#600 99.2%,#7f0 99.7%,#8a0"></i><i style="--g:#010,#0b0 32.4%,#330 54%,#280 59.8%,#050 68.6%,#030 81.7%,#200 85.7%,#450 88.6%,#ab0 93.1%,#bc0 95.9%,#ab0 96.8%,#800 97.7%,#4e0 98.2%,#460 98.6%,#600 99.2%,#7f0 99.7%,#8a0"></i><i style="--g:#010,#0a0 34.6%,#230 55%,#100 63.3%,#010 72.4%,#050 82.9%,#270 87.1%,#3a0 88.6%,#a60 93.2%,#b80 95.9%,#a80 96.8%,#7d0 97.7%,#4c0 98.2%,#430 98.6%,#5f0 99.2%,#7f0 99.7%,#8a0"></i><i style="--g:#010,#0a0 33.4%,#2a0 54.4%,#1d0 61%,#030 69.7%,#040 83.2%,#230 87.7%,#360 88.9%,#6e0 91.1%,#a10 93.4%,#b40 95.9%,#a40 96.8%,#7a0 97.7%,#490 98.2%,#410 98.6%,#5e0 99.2%,#7f0 99.7%,#8a0"></i><i style="--g:#020,#0c0 30.7%,#2e0 44.2%,#430 54%,#380 59.1%,#090 67.9%,#000 78.7%,#070 84.7%,#260 88.6%,#530 90.5%,#980 93.2%,#b00 95.9%,#a00 96.8%,#760 97.7%,#460 98.2%,#3e0 98.6%,#5e0 99.2%,#7f0 99.7%,#890"></i><i style="--g:#020,#0e0 29.2%,#2c0 40%,#580 51.9%,#560 57.4%,#270 64.3%,#080 70.3%,#000 82.1%,#0e0 86.8%,#1d0 88.6%,#450 90.4%,#900 93.2%,#ab0 95.9%,#9c0 96.8%,#730 97.7%,#420 98.2%,#3a0 98.6%,#570 99.1%,#7f0 99.7%,#890"></i><i style="--g:#020,#0e0 28.8%,#2c0 39.3%,#5e0 51.6%,#5d0 57.3%,#360 63.1%,#0d0 69.4%,#010 77.5%,#060 85.7%,#160 88.6%,#3b0 90.4%,#890 93.2%,#a60 95.9%,#980 96.8%,#6f0 97.7%,#3e0 98.2%,#370 98.6%,#560 99.1%,#7e0 99.7%,#890"></i><i style="--g:#020,#0d0 29.7%,#2c0 41.1%,#510 52.2%,#4d0 57.7%,#0b0 68.5%,#000 77.3%,#060 86.6%,#130 88.7%,#320 90.4%,#830 93.4%,#a10 95.9%,#930 96.8%,#6a0 97.7%,#3a0 98.2%,#330 98.6%,#550 99.1%,#7e0 99.7%,#890"></i><i style="--g:#010,#0b0 31.8%,#390 53.7%,#2f0 59.2%,#060 68.3%,#010 84.4%,#0e0 88.7%,#290 90.4%,#7b0 93.4%,#9c0 95.9%,#8e0 96.8%,#660 97.7%,#360 98.2%,#300 98.6%,#3a0 98.8%,#4d0 98.9%,#680 99.4%,#7e0 99.7%,#890"></i><i style="--g:#010,#0a0 34.5%,#240 54.9%,#130 62.7%,#010 71.6%,#050 87.8%,#180 89.9%,#750 93.5%,#960 95.9%,#890 96.8%,#610 97.7%,#310 98.2%,#2c0 98.6%,#4c0 98.9%,#680 99.4%,#7e0 99.7%,#890"></i><i style="--g:#010,#0a0 35.1%,#210 55.3%,#010 71%,#050 88.4%,#1b0 90.4%,#6f0 93.7%,#900 95.9%,#840 96.8%,#5b0 97.7%,#2c0 98.2%,#280 98.6%,#4b0 98.9%,#670 99.4%,#7e0 99.7%,#890"></i><i style="--g:#010,#0b0 33%,#2e0 54.1%,#220 60.3%,#040 69.1%,#040 88.6%,#150 90.4%,#6d0 94%,#8a0 95.9%,#7e0 96.8%,#560 97.7%,#270 98.2%,#240 98.6%,#4b0 98.9%,#670 99.4%,#7e0 99.7%,#890"></i><i style="--g:#010,#0c0 31%,#300 45.4%,#410 54.7%,#320 59.8%,#080 68%,#000 80%,#060 89.3%,#190 90.8%,#680 94.1%,#830 95.9%,#780 96.8%,#500 97.7%,#210 98.2%,#1c0 98.5%,#210 98.6%,#4b0 98.9%,#670 99.4%,#7e0 99.7%,#890"></i><i style="--g:#020,#0d0 30.1%,#2c0 42.3%,#4a0 52.9%,#440 58.2%,#0a0 68%,#000 77.5%,#050 89.5%,#1a0 91.1%,#650 94.4%,#7d0 95.9%,#730 96.8%,#4a0 97.7%,#1c0 98.2%,#170 98.5%,#1f0 98.6%,#4b0 98.9%,#670 99.4%,#7e0 99.7%,#890"></i><i style="--g:#020,#0c0 30.6%,#2e0 43.6%,#450 53.7%,#3d0 58.6%,#090 67.9%,#000 78.2%,#040 89.8%,#1d0 91.6%,#690 95%,#760 95.9%,#700 96.7%,#440 97.7%,#160 98.2%,#120 98.5%,#1e0 98.6%,#4b0 98.9%,#670 99.4%,#7e0 99.7%,#890"></i><i style="--g:#010,#0b0 32.2%,#340 53.8%,#2a0 59.5%,#050 68.6%,#010 89.2%,#0e0 91%,#6f0 95.8%,#6b0 96.7%,#3e0 97.7%,#100 98.2%,#0d0 98.5%,#340 98.8%,#4b0 98.9%,#670 99.4%,#7e0 99.7%,#890"></i><i style="--g:#010,#0a0 34.6%,#240 55%,#110 63.1%,#010 72.2%,#040 90.2%,#1f0 92.2%,#690 95.9%,#650 96.7%,#380 97.7%,#0a0 98.2%,#0c0 98.5%,#4b0 98.9%,#670 99.4%,#7e0 99.7%,#890"></i><i style="--g:#010,#090 35.8%,#1e0 55.6%,#010 71.3%,#040 90.5%,#1f0 92.5%,#630 95.9%,#600 96.7%,#320 97.7%,#040 98.2%,#0b0 98.5%,#4b0 98.9%,#670 99.4%,#7e0 99.7%,#890"></i><i style="--g:#010,#090 35.7%,#1e0 55.6%,#010 71.3%,#040 90.7%,#1d0 92.6%,#5c0 95.9%,#5f0 96.5%,#400 97.3%,#2b0 97.7%,#010 98.2%,#0b0 98.5%,#4b0 98.9%,#670 99.4%,#7e0 99.7%,#890"></i><i style="--g:#010,#0a0 34%,#270 54.7%,#170 61.9%,#020 70.6%,#030 90.8%,#1e0 92.9%,#570 96.1%,#5b0 96.5%,#3a0 97.3%,#250 97.7%,#060 98%,#010 98.2%,#0b0 98.5%,#4b0 98.9%,#670 99.4%,#7e0 99.7%,#890"></i><i style="--g:#010,#0b0 31.8%,#380 53.7%,#2f0 59.2%,#060 68.3%,#000 85.9%,#050 91.3%,#250 93.7%,#580 96.5%,#350 97.3%,#1e0 97.7%,#020 98%,#060 98.3%,#0b0 98.5%,#4b0 98.9%,#670 99.4%,#7e0 99.7%,#890"></i><i style="--g:#020,#0d0 30.4%,#2d0 43%,#480 53.2%,#400 58.3%,#0a0 67.9%,#000 77.8%,#040 91.4%,#250 94%,#550 96.5%,#300 97.3%,#020 98%,#060 98.3%,#0b0 98.5%,#4b0 98.9%,#670 99.4%,#7e0 99.7%,#890"></i><i style="--g:#020,#0d0 30.3%,#2d0 42.6%,#490 52.9%,#430 58.2%,#0a0 68%,#000 77.8%,#040 91.6%,#250 94.3%,#520 96.5%,#2c0 97.3%,#040 97.9%,#010 98.2%,#0b0 98.5%,#4b0 98.9%,#670 99.4%,#7e0 99.7%,#890"></i><i style="--g:#010,#0c0 31.3%,#3d0 53.5%,#340 58.9%,#070 68.2%,#000 82.1%,#040 91.9%,#270 94.7%,#510 96.5%,#360 97.1%,#0c0 97.7%,#020 98%,#060 98.3%,#0b0 98.5%,#4b0 98.9%,#670 99.4%,#7e0 99.7%,#890"></i><i style="--g:#010,#0a0 33.4%,#2b0 54.4%,#1d0 61%,#030 69.7%,#040 92%,#240 94.9%,#500 96.5%,#340 97.1%,#070 97.7%,#010 98.2%,#0b0 98.5%,#4b0 98.9%,#670 99.4%,#7e0 99.7%,#890"></i><i style="--g:#010,#0a0 35.2%,#200 55.3%,#010 71.2%,#030 92.2%,#220 95%,#4f0 96.5%,#340 97.1%,#070 97.7%,#010 98.2%,#0b0 98.5%,#4b0 98.9%,#670 99.4%,#7e0 99.7%,#890"></i><i style="--g:#010,#0a0 34.3%,#260 54.9%,#140 62.4%,#010 71.2%,#040 92.5%,#200 95.2%,#4e0 96.5%,#330 97.1%,#070 97.7%,#010 98.2%,#0b0 98.5%,#4b0 98.9%,#670 99.4%,#7e0 99.7%,#890"></i><i style="--g:#010,#0b0 31.8%,#380 53.7%,#2f0 59.2%,#060 68.3%,#000 85.9%,#050 92.9%,#1c0 95.2%,#4e0 96.5%,#330 97.1%,#070 97.7%,#010 98.2%,#0b0 98.5%,#4b0 98.9%,#670 99.4%,#7e0 99.7%,#890"></i><i style="--g:#020,#0d0 30%,#2c0 41.8%,#4c0 52.6%,#470 57.9%,#0a0 68.2%,#000 77.5%,#040 92.9%,#190 95.2%,#4e0 96.5%,#330 97.1%,#070 97.7%,#010 98.2%,#0b0 98.5%,#4b0 98.9%,#670 99.4%,#7e0 99.7%,#890"></i><i style="--g:#020,#0d0 29.5%,#2c0 40.8%,#530 52%,#500 57.6%,#0c0 68.6%,#000 77.3%,#040 93.2%,#160 95.2%,#4e0 96.5%,#330 97.1%,#070 97.7%,#010 98.2%,#0b0 98.5%,#4b0 98.9%,#670 99.4%,#7e0 99.7%,#890"></i><i style="--g:#020,#0d0 30.1%,#2c0 42.3%,#4a0 52.9%,#440 58.2%,#0a0 68%,#000 77.6%,#040 93.5%,#140 95.2%,#4e0 96.5%,#330 97.1%,#070 97.7%,#010 98.2%,#0b0 98.5%,#4b0 98.9%,#670 99.4%,#7e0 99.7%,#890"></i><i style="--g:#010,#0b0 32.1%,#350 53.8%,#2b0 59.5%,#060 68.5%,#000 91.1%,#0a0 94.6%,#120 95.2%,#4e0 96.5%,#330 97.1%,#070 97.7%,#010 98.2%,#0b0 98.5%,#4b0 98.9%,#670 99.4%,#7e0 99.7%,#890"></i><i style="--g:#010,#0a0 34.6%,#240 55%,#110 63.1%,#010 72.2%,#040 93.8%,#110 95.2%,#4e0 96.5%,#330 97.1%,#070 97.7%,#010 98.2%,#0b0 98.5%,#4b0 98.9%,#670 99.4%,#7e0 99.7%,#890"></i><i style="--g:#010,#0a0 35.7%,#1f0 55.5%,#010 71.3%,#040 94.1%,#110 95.2%,#4e0 96.5%,#330 97.1%,#070 97.7%,#010 98.2%,#0b0 98.5%,#4b0 98.9%,#670 99.4%,#7e0 99.7%,#890"></i><i style="--g:#010,#0a0 35.1%,#220 55.2%,#0a0 65.2%,#000 76.9%,#040 94.3%,#110 95.2%,#4a0 96.4%,#4e0 96.5%,#330 97.1%,#070 97.7%,#010 98.2%,#0b0 98.5%,#4b0 98.9%,#670 99.4%,#7e0 99.7%,#890"></i><i style="--g:#010,#0b0 33.1%,#2d0 54.3%,#200 60.6%,#040 69.2%,#030 94.3%,#100 95.2%,#4a0 96.4%,#4e0 96.5%,#330 97.1%,#070 97.7%,#010 98.2%,#0b0 98.5%,#4b0 98.9%,#670 99.4%,#7e0 99.7%,#890"></i><i style="--g:#010,#0c0 31.5%,#3c0 53.5%,#330 58.9%,#070 68.2%,#000 82.6%,#040 94.3%,#110 95.2%,#4a0 96.4%,#4e0 96.5%,#330 97.1%,#070 97.7%,#010 98.2%,#0b0 98.5%,#4b0 98.9%,#670 99.4%,#7e0 99.7%,#890"></i><i style="--g:#020,#0c0 30.9%,#2f0 44.8%,#420 54.4%,#350 59.5%,#090 67.9%,#000 79%,#040 94.1%,#110 95.2%,#4e0 96.5%,#330 97.1%,#070 97.7%,#010 98.2%,#0b0 98.5%,#4b0 98.9%,#670 99.4%,#7e0 99.7%,#890"></i><i style="--g:#010,#0c0 31.6%,#3a0 53.7%,#310 59.1%,#070 68.3%,#000 84.8%,#050 94%,#120 95.2%,#4e0 96.5%,#330 97.1%,#070 97.7%,#010 98.2%,#0b0 98.5%,#4b0 98.9%,#670 99.4%,#7e0 99.7%,#890"></i><i style="--g:#010,#0b0 33.4%,#2b0 54.3%,#1e0 60.7%,#030 69.5%,#040 93.4%,#140 95.2%,#4e0 96.5%,#330 97.1%,#070 97.7%,#010 98.2%,#0b0 98.5%,#4b0 98.9%,#670 99.4%,#7e0 99.7%,#890"></i><i style="--g:#010,#0a0 35.2%,#210 55.3%,#010 71.2%,#040 93.1%,#170 95.2%,#4e0 96.5%,#330 97.1%,#070 97.7%,#010 98.2%,#0b0 98.5%,#4b0 98.9%,#670 99.4%,#7e0 99.7%,#890"></i><i style="--g:#010,#0a0 35.7%,#1f0 55.5%,#010 71.3%,#040 92.8%,#1b0 95.2%,#4e0 96.5%,#330 97.1%,#070 97.7%,#010 98.2%,#0b0 98.5%,#4b0 98.9%,#670 99.4%,#7e0 99.7%,#890"></i><i style="--g:#010,#0a0 34.9%,#220 55.2%,#0b0 64.9%,#000 76%,#040 92.6%,#1f0 95.2%,#4e0 96.5%,#330 97.1%,#070 97.7%,#010 98.2%,#0b0 98.5%,#4b0 98.9%,#670 99.4%,#7e0 99.7%,#890"></i><i style="--g:#010,#0b0 32.7%,#300 54.1%,#240 60.1%,#040 68.9%,#030 92%,#1e0 94.7%,#320 95.6%,#4f0 96.5%,#340 97.1%,#070 97.7%,#010 98.2%,#0b0 98.5%,#4b0 98.9%,#670 99.4%,#7e0 99.7%,#890"></i><i style="--g:#020,#0c0 30.6%,#2e0 43.5%,#460 53.5%,#3d0 58.6%,#090 67.9%,#000 78.1%,#040 92%,#230 94.7%,#500 96.5%,#350 97.1%,#090 97.7%,#010 98.2%,#0b0 98.5%,#4b0 98.9%,#670 99.4%,#7e0 99.7%,#890"></i><i style="--g:#020,#0d0 29.5%,#2c0 40.8%,#530 52.2%,#4f0 57.7%,#0c0 68.5%,#000 77%,#040 91.7%,#220 94.3%,#520 96.5%,#370 97.1%,#040 97.9%,#010 98.2%,#0b0 98.5%,#4b0 98.9%,#670 99.4%,#7e0 99.7%,#890"></i><i style="--g:#020,#0d0 29.8%,#2c0 41.4%,#4f0 52.3%,#4b0 57.7%,#0b0 68.3%,#000 77.2%,#040 91.6%,#230 94%,#550 96.5%,#310 97.3%,#190 97.7%,#020 98%,#060 98.3%,#0b0 98.5%,#4b0 98.9%,#670 99.4%,#7e0 99.7%,#890"></i><i style="--g:#010,#0c0 31.2%,#330 47.2%,#3e0 55.9%,#250 61.8%,#060 68.8%,#000 88.4%,#080 91.7%,#390 94.7%,#580 96.4%,#540 96.7%,#210 97.7%,#030 98%,#060 98.3%,#0b0 98.5%,#4b0 98.9%,#670 99.4%,#7e0 99.7%,#890"></i><i style="--g:#010,#0a0 33.6%,#2a0 54.4%,#1c0 61%,#030 69.8%,#030 90.8%,#1b0 92.8%,#5a0 96.1%,#5e0 96.5%,#3e0 97.3%,#2a0 97.7%,#010 98.2%,#0b0 98.5%,#4b0 98.9%,#670 99.4%,#7e0 99.7%,#890"></i><i style="--g:#010,#0a0 35.4%,#200 55.3%,#010 71.2%,#040 90.7%,#1e0 92.6%,#620 95.9%,#600 96.7%,#330 97.7%,#050 98.2%,#0b0 98.5%,#4b0 98.9%,#670 99.4%,#7e0 99.7%,#890"></i><i style="--g:#010,#0a0 34.9%,#220 55.2%,#0b0 64.9%,#000 76%,#040 90.4%,#1f0 92.3%,#6b0 95.9%,#670 96.7%,#3b0 97.7%,#0e0 98.2%,#0d0 98.5%,#4b0 98.9%,#670 99.4%,#7e0 99.7%,#890"></i><i style="--g:#010,#0b0 32.4%,#330 54%,#270 59.8%,#050 68.8%,#020 89.6%,#140 91.4%,#740 95.9%,#6f0 96.7%,#440 97.7%,#160 98.2%,#120 98.5%,#1e0 98.6%,#4b0 98.9%,#670 99.4%,#7e0 99.7%,#890"></i><i style="--g:#020,#0d0 29.8%,#2c0 41.4%,#4f0 52.3%,#4b0 57.7%,#0b0 68.3%,#000 77.3%,#050 89.9%,#200 91.7%,#740 95.3%,#7c0 96.1%,#740 96.8%,#4d0 97.7%,#1e0 98.2%,#1a0 98.5%,#200 98.6%,#4b0 98.9%,#670 99.4%,#7e0 99.7%,#890"></i><i style="--g:#020,#0f0 28.3%,#2c0 38.4%,#660 51.3%,#680 57%,#480 62.1%,#130 69.1%,#020 76%,#040 89.3%,#140 90.8%,#750 94.9%,#860 95.9%,#7c0 96.8%,#550 97.7%,#260 98.2%,#250 98.6%,#4b0 98.9%,#670 99.4%,#7e0 99.7%,#890"></i><i style="--g:#030,#0f0 28%,#2c0 37.9%,#6b0 51.1%,#6d0 56.8%,#4f0 61.8%,#140 69.2%,#020 76%,#040 89%,#150 90.5%,#740 94.3%,#8f0 95.9%,#840 96.8%,#5d0 97.7%,#2e0 98.2%,#2a0 98.6%,#4c0 98.9%,#680 99.4%,#7e0 99.7%,#890"></i><i style="--g:#020,#0e0 29.1%,#2c0 39.7%,#5a0 51.7%,#580 57.4%,#2b0 64%,#0a0 70%,#000 80%,#050 88.7%,#190 90.4%,#750 93.8%,#980 95.9%,#8c0 96.8%,#650 97.7%,#350 98.2%,#300 98.6%,#3a0 98.8%,#4d0 98.9%,#680 99.4%,#7e0 99.7%,#890"></i><i style="--g:#010,#0c0 31.3%,#3d0 53.5%,#340 58.9%,#070 68.2%,#000 81.1%,#060 88.4%,#1d0 90.2%,#7d0 93.7%,#a00 95.9%,#940 96.8%,#6c0 97.7%,#3c0 98.2%,#360 98.6%,#560 99.1%,#7f0 99.7%,#890"></i><i style="--g:#010,#0a0 34%,#270 54.7%,#180 61.8%,#020 70.4%,#050 87.4%,#130 89.2%,#2e0 90.5%,#850 93.5%,#a80 95.9%,#9b0 96.8%,#730 97.7%,#430 98.2%,#3c0 98.6%,#5e0 99.2%,#7f0 99.7%,#890"></i><i style="--g:#010,#0a0 33.6%,#2a0 54.4%,#1c0 61%,#030 69.7%,#040 86.5%,#130 88.7%,#350 90.4%,#8d0 93.4%,#b00 95.9%,#a20 96.8%,#790 97.7%,#490 98.2%,#420 98.6%,#5f0 99.2%,#7f0 99.7%,#8a0"></i><i style="--g:#010,#0c0 31.2%,#340 47.5%,#3d0 56.1%,#230 62.1%,#060 68.9%,#020 84.5%,#140 88.3%,#3c0 90.2%,#960 93.2%,#b70 95.8%,#a80 96.8%,#7f0 97.7%,#4f0 98.2%,#470 98.6%,#610 99.2%,#800 99.7%,#8a0"></i><i style="--g:#020,#0d0 29.8%,#2c0 41.5%,#4e0 52.5%,#490 57.9%,#0b0 68.3%,#000 77.3%,#060 85.1%,#1d0 88.3%,#4e0 90.4%,#a00 93.2%,#bd0 95.9%,#ae0 96.8%,#850 97.7%,#540 98.2%,#4e0 98.8%,#850 99.8%,#8a0"></i><i style="--g:#020,#0d0 29.7%,#2c0 41.1%,#500 52.3%,#4c0 57.7%,#0b0 68.5%,#000 77.3%,#060 84.4%,#1e0 87.5%,#350 88.9%,#660 90.7%,#aa0 93.2%,#c30 95.9%,#ad0 97%,#8a0 97.7%,#590 98.2%,#520 98.8%,#850 99.8%,#8a0"></i><i style="--g:#020,#0c0 30.7%,#2e0 44.2%,#430 54%,#380 59.1%,#090 67.9%,#010 77.9%,#060 83.8%,#1f0 86.8%,#3c0 88.6%,#b20 93.1%,#c90 95.9%,#b10 97%,#8e0 97.7%,#5d0 98.2%,#550 98.8%,#6f0 99.4%,#810 99.7%,#8b0"></i><i style="--g:#010,#0b0 33%,#2e0 54.1%,#220 60.3%,#040 69.1%,#050 82.7%,#260 86.5%,#4a0 88.6%,#bb0 93.1%,#ce0 95.9%,#b60 97%,#920 97.7%,#610 98.2%,#580 98.8%,#700 99.4%,#860 99.8%,#8b0"></i><i style="--g:#010,#0a0 34.9%,#220 55.2%,#0b0 64.8%,#010 74.9%,#070 82.4%,#300 86.3%,#5e0 88.7%,#c30 93.1%,#d20 95.9%,#b90 97%,#950 97.7%,#640 98.2%,#5b0 98.8%,#710 99.4%,#860 99.8%,#8b0"></i><i style="--g:#010,#0a0 35.4%,#200 55.3%,#010 71.2%,#060 81.5%,#240 84.5%,#470 86.8%,#8b0 90.1%,#cb0 93.2%,#d60 95.9%,#bd0 97%,#980 97.7%,#670 98.2%,#5d0 98.8%,#730 99.4%,#870 99.8%,#8b0"></i><i style="--g:#010,#0a0 34.3%,#260 54.9%,#140 62.4%,#010 71.2%,#060 80.6%,#1c0 83.2%,#4f0 86.5%,#d00 93.1%,#d90 95.9%,#bf0 97%,#9b0 97.7%,#690 98.2%,#5f0 98.8%,#730 99.4%,#870 99.8%,#8c0"></i><i style="--g:#010,#0b0 32.5%,#320 54%,#270 59.8%,#050 68.8%,#040 79%,#1c0 82.4%,#5b0 86.3%,#c40 92%,#d70 93.5%,#db0 95.9%,#c20 97%,#9d0 97.7%,#6b0 98.2%,#610 98.8%,#740 99.4%,#870 99.8%,#8c0"></i><i style="--g:#010,#0c0 31.5%,#3c0 53.5%,#330 58.9%,#070 68.2%,#030 76.9%,#120 80.5%,#2e0 82.9%,#6c0 86.5%,#b20 90.5%,#da0 93.4%,#dd0 95.9%,#c30 97%,#9f0 97.7%,#6d0 98.2%,#630 98.8%,#750 99.4%,#880 99.8%,#8c0"></i><i style="--g:#010,#0c0 31.5%,#3b0 53.5%,#330 58.9%,#070 68.2%,#040 75.8%,#130 79.4%,#350 82.6%,#790 86.5%,#a90 89.3%,#dd0 93.4%,#df0 95.9%,#c50 97%,#a00 97.7%,#6e0 98.2%,#640 98.8%,#750 99.4%,#8c0"></i><i style="--g:#010,#0b0 32.7%,#310 54%,#250 60%,#050 68.8%,#080 76.4%,#290 80.6%,#440 82.7%,#890 86.6%,#b20 89.5%,#e00 93.4%,#e00 95.9%,#c60 97%,#a10 97.7%,#6f0 98.2%,#650 98.8%,#760 99.4%,#8c0"></i><i style="--g:#010,#0a0 34.3%,#250 54.9%,#140 62.5%,#030 70.3%,#0f0 76.4%,#480 82.3%,#960 86.8%,#c50 90.8%,#e10 93.4%,#e10 95.9%,#c70 97%,#a20 97.7%,#700 98.2%,#650 98.8%,#760 99.4%,#8c0"></i><i style="--g:#010,#0a0 35.4%,#200 55.3%,#050 69.1%,#120 75.4%,#560 82.4%,#9d0 86.8%,#c80 90.8%,#e30 93.4%,#e20 95.9%,#c70 97%,#a30 97.7%,#700 98.2%,#660 98.8%,#760 99.4%,#8c0"></i><i style="--g:#010,#0a0 35.5%,#1f0 55.5%,#080 67.9%,#170 74.6%,#600 82.4%,#8a0 85.3%,#ac0 87.5%,#e00 92.8%,#e20 95.9%,#c80 97%,#a30 97.7%,#710 98.2%,#660 98.8%,#770 99.4%,#8c0"></i><i style="--g:#010,#0a0 35.5%,#1f0 55.5%,#0c0 66.7%,#200 74.2%,#690 82.4%,#a00 86.5%,#ae0 87.5%,#de0 92.6%,#e40 94.1%,#e30 95.9%,#c80 97%,#a30 97.7%,#710 98.2%,#660 98.8%,#770 99.4%,#8c0"></i><i style="--g:#010,#0a0 35.5%,#200 55.5%,#100 65.5%,#2a0 73.9%,#650 81.4%,#9b0 86.2%,#af0 87.5%,#df0 92.6%,#e40 94.1%,#e30 95.9%,#c80 97%,#a30 97.7%,#710 98.2%,#660 98.8%,#770 99.4%,#8c0"></i><i style="--g:#010,#0a0 35.4%,#200 55.3%,#160 64.3%,#370 73.9%,#660 80.6%,#740 82.7%,#9a0 86.2%,#ae0 87.5%,#e10 92.8%,#e30 95.9%,#c80 97%,#a30 97.7%,#710 98.2%,#660 98.8%,#770 99.4%,#8c0"></i><i style="--g:#010,#0a0 33.9%,#280 54.6%,#1f0 62.7%,#410 73.6%,#660 80%,#700 82.6%,#940 86%,#ad0 87.5%,#e40 93.4%,#e30 95.9%,#c80 97%,#a30 97.7%,#710 98.2%,#660 98.8%,#770 99.4%,#8c0"></i><i style="--g:#020,#0c0 30.9%,#2f0 44.7%,#420 54.3%,#360 59.4%,#2d0 63%,#4a0 73.1%,#640 79.7%,#6a0 82.4%,#920 86%,#ad0 87.7%,#e40 93.4%,#e30 95.9%,#c80 97%,#a30 97.7%,#710 98.2%,#660 98.8%,#770 99.4%,#8c0"></i><i style="--g:#020,#0e0 28.5%,#2b0 38.7%,#620 51.4%,#620 57.1%,#3e0 64.6%,#5f0 79.6%,#630 82.3%,#8f0 86%,#ae0 87.8%,#e40 93.4%,#e30 95.9%,#c80 97%,#a30 97.7%,#710 98.2%,#660 98.8%,#770 99.4%,#8c0"></i><i style="--g:#030,#100 27.4%,#2c0 36.9%,#780 51%,#7c0 56.7%,#4c0 65.8%,#570 79.9%,#5d0 82.3%,#8c0 86%,#ac0 87.8%,#e40 93.4%,#e30 95.9%,#c80 97%,#a30 97.7%,#710 98.2%,#660 98.8%,#770 99.4%,#8c0"></i><i style="--g:#030,#100 27.6%,#2c0 37%,#750 51%,#780 56.7%,#4f0 65.6%,#530 81.8%,#890 86%,#ab0 88%,#e30 93.4%,#e20 95.9%,#c80 97%,#a30 97.7%,#700 98.2%,#660 98.8%,#770 99.4%,#8c0"></i><i style="--g:#020,#0e0 28.9%,#2c0 39.6%,#5b0 51.6%,#5b0 57.3%,#4a0 62.1%,#460 75.1%,#470 80.2%,#520 82.3%,#880 86.2%,#aa0 88.3%,#e20 93.4%,#e20 95.9%,#c70 97%,#a20 97.7%,#700 98.2%,#650 98.8%,#760 99.4%,#8c0"></i><i style="--g:#010,#0c0 31.5%,#3b0 53.5%,#350 60.9%,#450 63.4%,#390 74.8%,#380 78.8%,#4b0 82.3%,#820 86.2%,#af0 89%,#e10 93.4%,#e10 95.9%,#c70 97%,#a20 97.7%,#700 98.2%,#650 98.8%,#760 99.4%,#8c0"></i><i style="--g:#010,#0a0 33.7%,#290 54.6%,#280 60.3%,#3c0 63.4%,#2b0 74.9%,#290 78.4%,#420 82.3%,#7d0 86.3%,#bb0 90.5%,#df0 93.4%,#e00 95.9%,#c60 97%,#a10 97.7%,#6f0 98.2%,#640 98.8%,#760 99.4%,#8c0"></i><i style="--g:#010,#0c0 31.5%,#3b0 53.5%,#320 59.1%,#2f0 62.2%,#2a0 69.1%,#1c0 78.1%,#3b0 82.4%,#730 86.3%,#dc0 93.2%,#df0 95.9%,#c40 97%,#a00 97.7%,#6e0 98.2%,#630 98.8%,#750 99.4%,#8c0"></i><i style="--g:#020,#0e0 28.8%,#2c0 39.3%,#5e0 51.6%,#5d0 57.3%,#220 67.4%,#120 78.2%,#300 82.4%,#6a0 86.5%,#d80 93.2%,#dd0 95.9%,#c30 97%,#9e0 97.7%,#6c0 98.2%,#620 98.8%,#750 99.4%,#880 99.8%,#8c0"></i><i style="--g:#030,#100 27.3%,#2c0 36.6%,#7c0 51%,#800 56.5%,#660 61.2%,#1e0 69.5%,#0c0 76.4%,#190 80.9%,#310 83.3%,#600 86.6%,#820 88.7%,#d40 93.2%,#da0 95.9%,#c10 97%,#9d0 97.7%,#6b0 98.2%,#610 98.8%,#740 99.4%,#870 99.8%,#8c0"></i><i style="--g:#030,#110 27%,#2d0 36.1%,#820 50.8%,#870 56.4%,#6e0 61%,#1d0 70.1%,#0a0 75.4%,#1a0 82.3%,#4f0 86.5%,#700 88.6%,#ce0 93.1%,#d80 95.9%,#bf0 97%,#9a0 97.7%,#690 98.2%,#5f0 98.8%,#730 99.4%,#870 99.8%,#8b0"></i><i style="--g:#030,#0f0 28%,#2c0 37.8%,#6d0 51.1%,#6f0 56.8%,#510 61.8%,#160 69.2%,#080 74.2%,#190 83%,#430 86.6%,#610 88.6%,#c80 93.1%,#d50 95.9%,#bc0 97%,#980 97.7%,#660 98.2%,#5d0 98.8%,#720 99.4%,#870 99.8%,#8b0"></i><i style="--g:#020,#0d0 30.1%,#2d0 42.3%,#4b0 52.8%,#450 58%,#0a0 68%,#060 73.4%,#190 83.9%,#480 88.1%,#c10 93.1%,#d10 95.9%,#b90 97%,#950 97.7%,#630 98.2%,#5a0 98.8%,#710 99.4%,#860 99.8%,#8b0"></i><i style="--g:#010,#0b0 33.3%,#2c0 54.3%,#200 60.6%,#040 69.2%,#170 84.7%,#3f0 88.4%,#b90 93.1%,#cd0 95.9%,#b50 97%,#910 97.7%,#600 98.2%,#580 98.8%,#700 99.4%,#860 99.8%,#8b0"></i><i style="--g:#010,#0a0 34.5%,#250 54.9%,#130 62.5%,#020 70.7%,#110 83.2%,#1b0 86.2%,#310 88.4%,#6e0 90.7%,#b20 93.2%,#c80 95.9%,#b10 97%,#8d0 97.7%,#5c0 98.2%,#550 98.8%,#6f0 99.4%,#810 99.7%,#8a0"></i><i style="--g:#010,#0b0 32.1%,#360 53.8%,#2b0 59.5%,#060 68.5%,#080 74.8%,#120 82.9%,#190 86.9%,#290 88.6%,#570 90.4%,#a60 93.1%,#c30 95.9%,#ac0 97%,#890 97.7%,#580 98.2%,#510 98.8%,#850 99.8%,#8a0"></i><i style="--g:#020,#0d0 29.4%,#2c0 40.5%,#550 52%,#520 57.6%,#0c0 68.6%,#060 73.1%,#150 82.1%,#180 88%,#310 89.5%,#710 91.6%,#a10 93.4%,#bd0 95.9%,#ad0 96.8%,#840 97.7%,#530 98.2%,#4d0 98.8%,#850 99.8%,#8a0"></i><i style="--g:#030,#0f0 27.9%,#2c0 37.6%,#6f0 51.1%,#710 56.8%,#530 61.8%,#150 69.4%,#090 73.7%,#190 81.7%,#180 88.6%,#380 90.2%,#940 93.2%,#b70 95.8%,#a80 96.8%,#7f0 97.7%,#4e0 98.2%,#470 98.6%,#600 99.2%,#800 99.7%,#8a0"></i><i style="--g:#030,#100 27.6%,#2c0 37%,#740 51%,#780 56.7%,#5c0 61.5%,#180 69.5%,#0b0 73.7%,#1d0 81.4%,#190 89%,#2d0 90.2%,#8c0 93.4%,#af0 95.9%,#a10 96.8%,#790 97.7%,#490 98.2%,#410 98.6%,#5f0 99.2%,#7f0 99.7%,#8a0"></i><i style="--g:#020,#0e0 28.5%,#2b0 38.7%,#620 51.4%,#620 57.1%,#3f0 62.5%,#100 69.2%,#090 73%,#1f0 81.2%,#1a0 89.6%,#300 90.7%,#810 93.4%,#a80 95.9%,#9b0 96.8%,#720 97.7%,#430 98.2%,#3c0 98.6%,#5e0 99.2%,#7f0 99.7%,#890"></i><i style="--g:#020,#0c0 30.7%,#2e0 44.1%,#440 53.8%,#3b0 58.8%,#090 67.9%,#070 72.4%,#1e0 81.2%,#160 88.6%,#190 90.1%,#660 92.8%,#950 95%,#a00 95.9%,#930 96.8%,#6c0 97.7%,#3c0 98.2%,#360 98.6%,#560 99.1%,#7f0 99.7%,#890"></i><i style="--g:#010,#0a0 33.6%,#2a0 54.4%,#1c0 61%,#030 69.5%,#1b0 81.7%,#150 90.2%,#4d0 92.3%,#7b0 94.1%,#980 95.9%,#8c0 96.8%,#650 97.7%,#350 98.2%,#300 98.6%,#3a0 98.8%,#4d0 98.9%,#680 99.4%,#7e0 99.7%,#890"></i><i style="--g:#010,#0a0 35.1%,#210 55.2%,#030 70.1%,#190 81.7%,#100 89.6%,#140 90.5%,#740 94.3%,#8f0 95.9%,#840 96.8%,#5d0 97.7%,#2e0 98.2%,#2a0 98.6%,#4c0 98.9%,#680 99.4%,#7e0 99.7%,#890"></i><i style="--g:#010,#0a0 35.1%,#210 55.2%,#030 70.1%,#1a0 81.7%,#120 89.5%,#120 90.7%,#450 92.8%,#860 95.8%,#7c0 96.8%,#550 97.7%,#270 98.2%,#250 98.6%,#4b0 98.9%,#670 99.4%,#7e0 99.7%,#890"></i><i style="--g:#010,#0a0 34.2%,#260 54.7%,#160 61.9%,#040 69.8%,#1e0 81.4%,#170 88.6%,#100 90.8%,#3b0 92.8%,#7d0 95.8%,#780 96.7%,#4d0 97.7%,#1f0 98.2%,#1b0 98.5%,#210 98.6%,#4b0 98.9%,#670 99.4%,#7e0 99.7%,#890"></i><i style="--g:#010,#0b0 31.9%,#370 53.8%,#2d0 59.4%,#060 68.5%,#0c0 73.4%,#240 80.9%,#1e0 87.4%,#100 91.1%,#4b0 93.8%,#750 95.9%,#700 96.7%,#450 97.7%,#170 98.2%,#130 98.5%,#1e0 98.6%,#4b0 98.9%,#670 99.4%,#7e0 99.7%,#890"></i><i style="--g:#020,#0d0 30.1%,#2c0 42.3%,#4a0 52.9%,#430 58.2%,#0a0 68%,#090 72.1%,#280 80.8%,#230 87.1%,#150 90.2%,#0f0 91.4%,#6c0 95.9%,#680 96.7%,#3d0 97.7%,#0f0 98.2%,#0d0 98.5%,#340 98.8%,#4b0 98.9%,#670 99.4%,#7e0 99.7%,#890"></i><i style="--g:#020,#0d0 29.5%,#2c0 40.9%,#510 52.2%,#4e0 57.7%,#0c0 68.5%,#090 72.1%,#2a0 80.8%,#240 86.9%,#170 90.1%,#0d0 91.6%,#640 95.9%,#610 96.7%,#340 97.7%,#070 98.2%,#0b0 98.5%,#4b0 98.9%,#670 99.4%,#7e0 99.7%,#890"></i><i style="--g:#020,#0d0 30.3%,#2d0 42.6%,#490 52.9%,#430 58.2%,#0a0 68%,#090 72.1%,#280 80.8%,#220 87.1%,#140 90.2%,#0b0 91.7%,#5c0 96.1%,#5f0 96.5%,#400 97.3%,#2c0 97.7%,#010 98.2%,#0b0 98.5%,#4b0 98.9%,#670 99.4%,#7e0 99.7%,#890"></i><i style="--g:#010,#0b0 31.9%,#360 53.8%,#2c0 59.5%,#060 68.5%,#0c0 73.4%,#230 80.9%,#1d0 87.5%,#100 90.5%,#0a0 91.9%,#470 95.3%,#5a0 96.5%,#230 97.7%,#050 98%,#010 98.2%,#0b0 98.5%,#4b0 98.9%,#670 99.4%,#7e0 99.7%,#890"></i><i style="--g:#010,#0a0 34.2%,#260 54.7%,#160 61.9%,#040 69.8%,#200 81.2%,#1a0 88%,#090 91.3%,#0b0 92.3%,#460 95.6%,#560 96.5%,#320 97.3%,#1b0 97.7%,#020 98%,#060 98.3%,#0b0 98.5%,#4b0 98.9%,#670 99.4%,#7e0 99.7%,#890"></i><i style="--g:#010,#0a0 34.9%,#220 55.2%,#0b0 64.8%,#050 71.2%,#210 81.1%,#1a0 88%,#090 91.3%,#0a0 92.5%,#3b0 95.5%,#530 96.5%,#2d0 97.3%,#130 97.7%,#050 97.9%,#010 98.2%,#0b0 98.5%,#4b0 98.9%,#670 99.4%,#7e0 99.7%,#890"></i><i style="--g:#010,#0a0 33.7%,#290 54.6%,#1a0 61.3%,#040 69.4%,#1b0 77.5%,#250 81.2%,#1e0 87.5%,#100 90.5%,#060 92.3%,#2d0 95.2%,#510 96.5%,#360 97.1%,#0b0 97.7%,#010 98.2%,#0b0 98.5%,#4b0 98.9%,#670 99.4%,#7e0 99.7%,#890"></i><i style="--g:#020,#0c0 30.7%,#2e0 44.2%,#440 54%,#390 58.9%,#090 67.9%,#090 72.1%,#2b0 80.8%,#250 86.9%,#170 90.1%,#050 92.5%,#270 95.2%,#4f0 96.5%,#340 97.1%,#070 97.7%,#010 98.2%,#0b0 98.5%,#4b0 98.9%,#670 99.4%,#7e0 99.7%,#890"></i><i style="--g:#020,#0f0 28.3%,#2c0 38.4%,#660 51.3%,#670 57%,#460 62.2%,#120 69.2%,#0c0 72.4%,#2f0 80.6%,#2a0 86.6%,#1b0 89.9%,#040 92.5%,#210 95.2%,#4e0 96.5%,#330 97.1%,#070 97.7%,#010 98.2%,#0b0 98.5%,#4b0 98.9%,#670 99.4%,#7e0 99.7%,#890"></i><i style="--g:#030,#110 27.1%,#2d0 36.3%,#7f0 50.8%,#850 56.4%,#6c0 61%,#1c0 70%,#110 73.4%,#300 80.6%,#2b0 86.6%,#1c0 89.9%,#030 92.6%,#1c0 95.2%,#4e0 96.5%,#330 97.1%,#070 97.7%,#010 98.2%,#0b0 98.5%,#4b0 98.9%,#670 99.4%,#7e0 99.7%,#890"></i><i style="--g:#030,#110 27.1%,#2c0 36.3%,#7f0 50.8%,#850 56.4%,#6b0 61%,#1c0 70%,#100 73.4%,#2c0 80.8%,#270 86.8%,#180 90.1%,#020 92.6%,#180 95.2%,#4e0 96.5%,#330 97.1%,#070 97.7%,#010 98.2%,#0b0 98.5%,#4b0 98.9%,#670 99.4%,#7e0 99.7%,#890"></i><i style="--g:#020,#0e0 28.8%,#2c0 39.1%,#5f0 51.4%,#5f0 57.1%,#3b0 62.7%,#0e0 69.2%,#0a0 72.5%,#270 80.8%,#210 87.1%,#140 90.2%,#020 92.8%,#120 95%,#4e0 96.5%,#330 97.1%,#070 97.7%,#010 98.2%,#0b0 98.5%,#4b0 98.9%,#670 99.4%,#7e0 99.7%,#890"></i><i style="--g:#020,#0d0 30.4%,#2d0 43%,#480 53.2%,#400 58.3%,#0a0 67.9%,#080 72.1%,#230 80.9%,#1d0 87.5%,#0f0 90.5%,#020 92.9%,#0f0 95%,#4e0 96.5%,#330 97.1%,#070 97.7%,#010 98.2%,#0b0 98.5%,#4b0 98.9%,#670 99.4%,#7e0 99.7%,#890"></i><i style="--g:#020,#0c0 30.7%,#2e0 44.2%,#440 54%,#3a0 58.9%,#090 67.9%,#080 72.2%,#220 81.1%,#1c0 87.7%,#0e0 90.7%,#010 92.9%,#0e0 95%,#4e0 96.5%,#330 97.1%,#070 97.7%,#010 98.2%,#0b0 98.5%,#4b0 98.9%,#670 99.4%,#7e0 99.7%,#890"></i><i style="--g:#020,#0d0 30.1%,#2d0 42.1%,#4b0 52.8%,#460 58%,#0a0 68.2%,#090 72.2%,#250 80.9%,#200 87.2%,#120 90.4%,#010 92.9%,#0b0 94.9%,#180 95.3%,#4e0 96.5%,#330 97.1%,#070 97.7%,#010 98.2%,#0b0 98.5%,#4b0 98.9%,#670 99.4%,#7e0 99.7%,#890"></i><i style="--g:#020,#0d0 30.1%,#2d0 42.1%,#4b0 52.8%,#460 58%,#0a0 68.2%,#090 72.1%,#2b0 80.8%,#250 86.9%,#170 90.1%,#000 92.9%,#0a0 94.9%,#180 95.3%,#4e0 96.5%,#330 97.1%,#070 97.7%,#010 98.2%,#0b0 98.5%,#4b0 98.9%,#670 99.4%,#7e0 99.7%,#890"></i><i style="--g:#020,#0d0 30%,#2c0 41.8%,#4d0 52.6%,#480 57.9%,#0b0 68.2%,#090 71.9%,#2e0 80.6%,#290 86.6%,#1b0 89.9%,#010 92.9%,#080 94.7%,#100 95.2%,#4a0 96.4%,#4e0 96.5%,#330 97.1%,#070 97.7%,#010 98.2%,#0b0 98.5%,#4b0 98.9%,#670 99.4%,#7e0 99.7%,#890"></i><i style="--g:#020,#0d0 29.5%,#2c0 40.8%,#530 52.2%,#500 57.6%,#0b0 68.6%,#0a0 72.1%,#2e0 80.6%,#290 86.6%,#190 90.1%,#010 92.8%,#0a0 94.9%,#180 95.3%,#4e0 96.5%,#330 97.1%,#070 97.7%,#010 98.2%,#0b0 98.5%,#4b0 98.9%,#670 99.4%,#7e0 99.7%,#890"></i><i style="--g:#020,#0e0 29.1%,#2b0 39.7%,#5a0 51.7%,#580 57.4%,#2b0 64%,#0a0 70%,#0e0 73.4%,#2a0 80.8%,#240 86.9%,#170 90.1%,#020 92.8%,#0d0 95%,#4e0 96.5%,#330 97.1%,#070 97.7%,#010 98.2%,#0b0 98.5%,#4b0 98.9%,#670 99.4%,#7e0 99.7%,#890"></i><i style="--g:#020,#0e0 28.6%,#2c0 39%,#600 51.4%,#610 57.1%,#3d0 62.7%,#0f0 69.2%,#0a0 72.7%,#240 80.9%,#1e0 87.4%,#110 90.4%,#020 92.8%,#0f0 95%,#4e0 96.5%,#330 97.1%,#070 97.7%,#010 98.2%,#0b0 98.5%,#4b0 98.9%,#670 99.4%,#7e0 99.7%,#890"></i><i style="--g:#020,#0e0 28.6%,#2b0 38.8%,#610 51.4%,#610 57.1%,#3f0 62.5%,#100 69.1%,#090 73%,#1f0 81.2%,#180 88.3%,#040 92.8%,#140 95.2%,#4e0 96.5%,#330 97.1%,#070 97.7%,#010 98.2%,#0b0 98.5%,#4b0 98.9%,#670 99.4%,#7e0 99.7%,#890"></i><i style="--g:#020,#0d0 29.4%,#2b0 40.5%,#540 52%,#510 57.6%,#0c0 68.6%,#080 72.5%,#1e0 81.2%,#170 88.4%,#050 92.6%,#180 95.2%,#4e0 96.5%,#330 97.1%,#070 97.7%,#010 98.2%,#0b0 98.5%,#4b0 98.9%,#670 99.4%,#7e0 99.7%,#890"></i><i style="--g:#020,#0c0 30.7%,#2e0 44.2%,#430 54%,#380 59.1%,#090 67.9%,#080 72.4%,#200 81.1%,#1a0 88%,#090 91.3%,#080 92.8%,#210 95.3%,#4e0 96.5%,#330 97.1%,#070 97.7%,#010 98.2%,#0b0 98.5%,#4b0 98.9%,#670 99.4%,#7e0 99.7%,#890"></i><i style="--g:#010,#0b0 31.8%,#380 53.7%,#2f0 59.2%,#060 68.3%,#0b0 73.1%,#240 80.9%,#1e0 87.4%,#110 90.4%,#080 92.2%,#260 95.3%,#4e0 96.5%,#330 97.1%,#070 97.7%,#010 98.2%,#0b0 98.5%,#4b0 98.9%,#670 99.4%,#7e0 99.7%,#890"></i><i style="--g:#010,#0c0 31.3%,#3d0 53.5%,#340 58.9%,#070 68.2%,#0a0 72.7%,#260 80.9%,#200 87.2%,#130 90.2%,#0a0 92%,#310 95.5%,#4f0 96.5%,#340 97.1%,#070 97.7%,#010 98.2%,#0b0 98.5%,#4b0 98.9%,#670 99.4%,#7e0 99.7%,#890"></i><i style="--g:#020,#0c0 30.6%,#2d0 43.6%,#450 53.7%,#3c0 58.6%,#090 67.9%,#080 72.1%,#250 80.9%,#1f0 87.4%,#120 90.4%,#0d0 91.9%,#3d0 95.6%,#510 96.5%,#360 97.1%,#040 97.9%,#010 98.2%,#0b0 98.5%,#4b0 98.9%,#670 99.4%,#7e0 99.7%,#890"></i><i style="--g:#020,#0d0 29.8%,#2c0 41.4%,#4f0 52.3%,#4b0 57.7%,#0b0 68.3%,#080 72.4%,#210 81.1%,#1b0 87.8%,#0e0 91.4%,#4f0 96.2%,#550 96.5%,#300 97.3%,#020 98%,#060 98.3%,#0b0 98.5%,#4b0 98.9%,#670 99.4%,#7e0 99.7%,#890"></i><i style="--g:#020,#0e0 28.8%,#2c0 39.3%,#5d0 51.6%,#5d0 57.3%,#360 63.1%,#0d0 69.4%,#090 73.3%,#1c0 81.4%,#140 89.2%,#100 91.1%,#5a0 96.5%,#380 97.3%,#220 97.7%,#040 98%,#060 98.3%,#0b0 98.5%,#4b0 98.9%,#670 99.4%,#7e0 99.7%,#890"></i><i style="--g:#030,#0f0 28%,#2c0 37.8%,#6d0 51.1%,#6f0 56.8%,#510 61.8%,#150 69.2%,#090 73.7%,#180 81.8%,#110 90.7%,#5e0 96.1%,#610 96.5%,#420 97.3%,#2d0 97.7%,#010 98.2%,#0b0 98.5%,#4b0 98.9%,#670 99.4%,#7e0 99.7%,#890"></i><i style="--g:#030,#0f0 27.7%,#2c0 37.3%,#700 51.1%,#730 56.8%,#550 61.8%,#170 69.4%,#090 74%,#160 82.1%,#130 90.2%,#6a0 95.9%,#650 96.7%,#390 97.7%,#0b0 98.2%,#0c0 98.5%,#4b0 98.9%,#670 99.4%,#7e0 99.7%,#890"></i><i style="--g:#020,#0f0 28.6%,#2c0 38.8%,#620 51.4%,#620 57.1%,#3f0 62.5%,#100 69.2%,#080 73.4%,#170 81.8%,#150 89.6%,#3a0 92%,#6f0 95.3%,#740 96.2%,#6c0 96.8%,#440 97.7%,#160 98.2%,#120 98.5%,#1e0 98.6%,#4b0 98.9%,#670 99.4%,#7e0 99.7%,#890"></i><i style="--g:#020,#0d0 29.8%,#2c0 41.5%,#4f0 52.5%,#4a0 57.9%,#0b0 68.3%,#070 72.7%,#190 81.5%,#180 88.9%,#2b0 90.5%,#6c0 94.1%,#810 95.9%,#770 96.8%,#500 97.7%,#210 98.2%,#1c0 98.5%,#220 98.6%,#4b0 98.9%,#670 99.4%,#7e0 99.7%,#890"></i><i style="--g:#010,#0c0 31.2%,#330 47.4%,#3d0 55.9%,#250 61.8%,#060 68.8%,#0a0 74%,#1a0 81.5%,#1b0 88.1%,#350 90.4%,#770 93.8%,#8d0 95.9%,#820 96.8%,#5b0 97.7%,#2c0 98.2%,#280 98.6%,#4c0 98.9%,#670 99.4%,#7e0 99.7%,#890"></i><i style="--g:#010,#0b0 32.2%,#340 53.8%,#2a0 59.5%,#050 68.6%,#0a0 74.5%,#190 81.7%,#1c0 87.2%,#450 90.4%,#830 93.7%,#990 95.9%,#8d0 96.8%,#660 97.7%,#360 98.2%,#310 98.6%,#3b0 98.8%,#4d0 98.9%,#680 99.4%,#7e0 99.7%,#890"></i><i style="--g:#010,#0b0 31.8%,#380 53.7%,#2f0 59.2%,#060 68.3%,#080 73.7%,#160 82%,#1c0 86.3%,#5c0 90.7%,#920 93.7%,#a50 95.9%,#980 96.8%,#700 97.7%,#400 98.2%,#3a0 98.6%,#570 99.1%,#7f0 99.7%,#890"></i><i style="--g:#020,#0c0 30.6%,#2e0 43.5%,#460 53.5%,#3d0 58.6%,#090 67.9%,#050 73%,#120 82.7%,#220 86%,#820 91.7%,#a00 93.7%,#b00 95.9%,#a20 96.8%,#790 97.7%,#490 98.2%,#420 98.6%,#5f0 99.2%,#7f0 99.7%,#8a0"></i><i style="--g:#020,#0d0 29.5%,#2c0 40.8%,#520 52.2%,#4e0 57.7%,#0c0 68.5%,#050 73.6%,#140 83.3%,#330 86.2%,#6a0 89.2%,#ad0 93.5%,#ba0 95.9%,#ab0 96.8%,#820 97.7%,#520 98.2%,#4d0 98.8%,#6c0 99.4%,#800 99.7%,#8a0"></i><i style="--g:#020,#0e0 28.8%,#2c0 39.3%,#5e0 51.6%,#5d0 57.3%,#370 63.1%,#0d0 69.4%,#060 74.5%,#120 82.7%,#3a0 85.6%,#7b0 88.9%,#b90 93.5%,#c30 95.9%,#ad0 97%,#8a0 97.7%,#5a0 98.2%,#530 98.8%,#850 99.8%,#8a0"></i><i style="--g:#020,#0e0 28.5%,#2b0 38.7%,#620 51.4%,#630 57.1%,#400 62.5%,#100 69.2%,#060 74.3%,#130 82.4%,#3f0 84.7%,#570 86.2%,#8c0 88.7%,#c50 93.5%,#cc0 95.9%,#b50 97%,#920 97.7%,#610 98.2%,#580 98.8%,#710 99.4%,#860 99.8%,#8b0"></i><i style="--g:#020,#0e0 28.8%,#2c0 39.3%,#5d0 51.6%,#5d0 57.3%,#360 63.1%,#0d0 69.4%,#060 74.2%,#120 82.1%,#4a0 84.4%,#690 86.2%,#990 88.4%,#cf0 93.5%,#d30 95.9%,#bb0 97%,#980 97.7%,#660 98.2%,#5e0 98.8%,#730 99.4%,#870 99.8%,#8b0"></i><i style="--g:#020,#0e0 29.2%,#2c0 40.2%,#570 51.9%,#550 57.4%,#230 64.8%,#070 70.7%,#0f0 79.4%,#140 82.1%,#550 84.2%,#7e0 86.3%,#a60 88.3%,#d30 92.8%,#da0 95.9%,#c10 97%,#9d0 97.7%,#6c0 98.2%,#620 98.8%,#750 99.4%,#880 99.8%,#8c0"></i><i style="--g:#020,#0d0 29.7%,#2c0 41.2%,#500 52.3%,#4c0 57.7%,#0b0 68.5%,#060 73.3%,#150 82%,#620 84.2%,#aa0 87.8%,#c30 90.5%,#df0 93.5%,#df0 95.9%,#c60 97%,#a20 97.7%,#700 98.2%,#660 98.8%,#770 99.4%,#8d0"></i><i style="--g:#020,#0c0 30.4%,#2d0 43%,#470 53.2%,#400 58.3%,#090 67.9%,#050 72.7%,#160 80.8%,#270 82.3%,#6d0 84.2%,#ae0 87.5%,#c90 90.5%,#e40 93.4%,#e30 95.9%,#c90 97%,#a50 97.7%,#730 98.2%,#690 98.8%,#780 99.4%,#8d0"></i><i style="--g:#010,#0c0 31.3%,#3c0 53.5%,#330 58.9%,#070 68.2%,#070 73.3%,#150 79%,#380 82.3%,#6b0 83.8%,#850 84.8%,#b30 87.5%,#e80 93.4%,#e60 95.9%,#cc0 97%,#a80 97.7%,#760 98.2%,#6b0 98.8%,#7a0 99.4%,#8d0"></i><i style="--g:#010,#0b0 32.7%,#310 54%,#250 60%,#060 68.3%,#130 77%,#3f0 81.2%,#600 83%,#870 84.4%,#b50 87.5%,#eb0 93.4%,#e90 95.9%,#cf0 97%,#aa0 97.7%,#780 98.2%,#6d0 98.8%,#7b0 99.4%,#8e0"></i><i style="--g:#010,#0a0 34.2%,#260 54.7%,#170 61.9%,#0b0 67.6%,#1f0 76.7%,#730 83%,#910 84.5%,#b90 88%,#ec0 93.4%,#ea0 95.9%,#d00 97%,#ab0 97.7%,#790 98.2%,#6e0 98.8%,#7b0 99.4%,#8e0"></i><i style="--g:#010,#0a0 34%,#270 54.6%,#180 61.8%,#130 66.4%,#310 76.6%,#770 82.3%,#970 85.3%,#c70 89.5%,#ed0 93.4%,#eb0 95.9%,#d10 97%,#ac0 97.7%,#790 98.2%,#6e0 98.8%,#7c0 99.4%,#8e0"></i><i style="--g:#010,#0b0 32.2%,#340 53.8%,#2a0 59.8%,#1f0 64.5%,#490 76.6%,#770 80.6%,#870 83.9%,#9b0 86.2%,#c40 89.3%,#ed0 93.4%,#ec0 95.9%,#d10 97%,#ac0 97.7%,#7a0 98.2%,#6f0 98.8%,#7c0 99.4%,#8e0"></i><i style="--g:#020,#0c0 30.6%,#2e0 43.8%,#440 53.7%,#3a0 59.7%,#320 63.9%,#650 76.9%,#7c0 80%,#770 83.6%,#930 86.2%,#c80 89.9%,#ed0 93.4%,#ec0 95.9%,#d10 97%,#ac0 97.7%,#7a0 98.2%,#6f0 98.8%,#7c0 99.4%,#8e0"></i><i style="--g:#020,#0e0 29.1%,#2b0 39.9%,#580 51.7%,#570 58%,#4b0 64%,#7c0 79.3%,#670 82.4%,#640 83.5%,#920 86.6%,#ec0 93.1%,#ec0 95.9%,#d10 97%,#ac0 97.7%,#7a0 98.2%,#6f0 98.8%,#7c0 99.4%,#8e0"></i><i style="--g:#030,#100 27.6%,#2c0 37.2%,#710 50.8%,#750 57.1%,#650 65.2%,#7b0 75.8%,#730 79%,#4d0 83.2%,#a30 88.6%,#eb0 93.1%,#eb0 95.9%,#d10 97%,#ac0 97.7%,#7a0 98.2%,#6e0 98.8%,#7c0 99.4%,#8e0"></i><i style="--g:#030,#110 26.5%,#2d0 35.5%,#890 50.5%,#900 56.4%,#850 60.9%,#730 66.2%,#750 76.3%,#540 80%,#370 82.9%,#5d0 85%,#950 88.6%,#dd0 92.3%,#ea0 93.5%,#eb0 95.9%,#d00 97%,#ab0 97.7%,#790 98.2%,#6e0 98.8%,#7b0 99.4%,#8e0"></i><i style="--g:#030,#110 26.7%,#2d0 35.7%,#860 50.5%,#8d0 56.7%,#850 60.9%,#6e0 67%,#630 76.6%,#250 82.6%,#360 83.6%,#4e0 85%,#800 88.4%,#c40 91.3%,#e60 93.2%,#ea0 95.9%,#cf0 97%,#aa0 97.7%,#780 98.2%,#6d0 98.8%,#7b0 99.4%,#8e0"></i><i style="--g:#030,#0f0 27.9%,#2c0 37.8%,#6a0 51%,#6e0 60.4%,#5a0 68.3%,#470 76.9%,#180 82%,#1b0 82.9%,#3c0 84.7%,#6e0 88.4%,#c60 91.7%,#e20 93.4%,#e80 95.9%,#ce0 97%,#a90 97.7%,#770 98.2%,#6c0 98.8%,#7a0 99.4%,#8e0"></i><i style="--g:#020,#0d0 29.8%,#2c0 41.5%,#4e0 52.5%,#4f0 61%,#2f0 76.9%,#120 81.2%,#140 82.9%,#3f0 86.2%,#5b0 88.4%,#c40 92%,#dd0 93.4%,#e50 95.9%,#cb0 97%,#a70 97.7%,#750 98.2%,#6a0 98.8%,#790 99.4%,#8d0"></i><i style="--g:#010,#0c0 31.2%,#3e0 53.5%,#330 62.4%,#190 77.3%,#110 82%,#1b0 83.9%,#490 88.4%,#c10 92.3%,#d60 93.4%,#e20 95.9%,#c90 97%,#a40 97.7%,#720 98.2%,#680 98.8%,#780 99.4%,#8d0"></i><i style="--g:#020,#0c0 30.7%,#2f0 44.4%,#430 54.1%,#370 59.4%,#190 66.2%,#130 79.1%,#1b0 85%,#380 88.4%,#bf0 92.6%,#d10 93.7%,#de0 95.9%,#c50 97%,#a10 97.7%,#6f0 98.2%,#650 98.8%,#770 99.4%,#8c0"></i><i style="--g:#020,#0e0 29.1%,#2c0 39.9%,#580 51.7%,#570 57.3%,#2b0 63.9%,#0d0 69.2%,#0e0 76.3%,#170 82.3%,#1f0 87.1%,#2a0 88.4%,#670 90.4%,#bc0 92.9%,#d80 95.5%,#d40 96.2%,#c10 97%,#9d0 97.7%,#6b0 98.2%,#620 98.8%,#750 99.4%,#880 99.8%,#8c0"></i><i style="--g:#030,#100 27.6%,#2c0 37.2%,#6f0 50.7%,#720 56.4%,#560 61.2%,#170 68.9%,#090 73.6%,#180 81.8%,#1c0 88.3%,#500 90.2%,#b00 92.9%,#d10 95.3%,#d10 96.1%,#bb0 97%,#980 97.7%,#670 98.2%,#5e0 98.8%,#730 99.4%,#870 99.8%,#8b0"></i><i style="--g:#030,#110 26.5%,#2d0 35.7%,#830 50.4%,#890 55.9%,#6f0 60.6%,#1d0 69.7%,#0a0 74.5%,#170 82.3%,#180 88.6%,#410 90.2%,#a80 93.1%,#ce0 95.8%,#bc0 96.8%,#920 97.7%,#610 98.2%,#590 98.8%,#710 99.4%,#860 99.8%,#8b0"></i><i style="--g:#030,#110 26.5%,#2e0 35.7%,#830 50.2%,#890 55.8%,#700 60.4%,#1d0 69.7%,#0a0 74.6%,#160 82.3%,#140 88.7%,#2e0 90.1%,#9e0 93.2%,#c60 95.8%,#b60 96.8%,#8c0 97.7%,#5b0 98.2%,#540 98.8%,#6f0 99.4%,#810 99.7%,#8b0"></i><i style="--g:#030,#100 27.3%,#2c0 36.9%,#710 50.5%,#740 56.2%,#580 61%,#170 68.9%,#080 73.7%,#170 82%,#140 89.2%,#270 90.2%,#940 93.4%,#be0 95.8%,#ae0 96.8%,#850 97.7%,#550 98.2%,#4f0 98.8%,#850 99.8%,#8a0"></i><i style="--g:#020,#0e0 28.5%,#2b0 38.8%,#5f0 51.3%,#5f0 57%,#3b0 62.5%,#0f0 68.9%,#080 73%,#1b0 81.4%,#170 89.9%,#490 91.6%,#870 93.4%,#b40 95.8%,#a60 96.8%,#7d0 97.7%,#4d0 98.2%,#460 98.6%,#600 99.2%,#800 99.7%,#8a0"></i><i style="--g:#020,#0d0 29.2%,#2c0 40.3%,#550 51.9%,#520 57.4%,#0c0 68.6%,#080 72.4%,#210 81.1%,#1b0 87.8%,#170 90.2%,#410 91.7%,#7d0 93.5%,#ab0 95.8%,#9d0 96.8%,#750 97.7%,#450 98.2%,#3e0 98.6%,#5e0 99.2%,#7f0 99.7%,#8a0"></i><i style="--g:#020,#0d0 29.5%,#2c0 40.9%,#510 52.2%,#4d0 57.6%,#0b0 68.3%,#090 72.1%,#270 80.8%,#220 87.1%,#160 90.5%,#3f0 92%,#770 93.8%,#a00 95.9%,#940 96.8%,#6c0 97.7%,#3d0 98.2%,#360 98.6%,#560 99.1%,#7f0 99.7%,#890"></i><i style="--g:#020,#0d0 29.8%,#2c0 41.7%,#4d0 52.5%,#480 57.9%,#0b0 68.2%,#090 72.1%,#2a0 80.8%,#250 86.9%,#170 90.1%,#180 91%,#7c0 94.6%,#960 95.9%,#8a0 96.8%,#630 97.7%,#330 98.2%,#2e0 98.6%,#390 98.8%,#4d0 98.9%,#680 99.4%,#7e0 99.7%,#890"></i><i style="--g:#020,#0d0 29.8%,#2c0 41.7%,#4d0 52.5%,#470 57.9%,#0b0 68%,#090 71.9%,#2a0 80.8%,#250 86.9%,#170 90.1%,#140 91.1%,#840 95.5%,#8a0 96.1%,#800 96.8%,#590 97.7%,#2a0 98.2%,#270 98.6%,#4b0 98.9%,#670 99.4%,#7e0 99.7%,#890"></i><i style="--g:#020,#0d0 29.7%,#2c0 41.4%,#4e0 52.3%,#4a0 57.7%,#0b0 68.2%,#080 72.1%,#270 80.8%,#220 87.1%,#140 90.2%,#110 91.3%,#800 95.8%,#790 96.7%,#4f0 97.7%,#200 98.2%,#1c0 98.5%,#210 98.6%,#4b0 98.9%,#670 99.4%,#7e0 99.7%,#890"></i><i style="--g:#020,#0d0 29.7%,#2c0 41.2%,#500 52.2%,#4c0 57.6%,#0b0 68.3%,#080 72.2%,#240 80.9%,#1e0 87.4%,#110 90.4%,#0e0 91.4%,#550 94.4%,#750 95.9%,#700 96.7%,#440 97.7%,#160 98.2%,#120 98.5%,#1e0 98.6%,#4b0 98.9%,#670 99.4%,#7e0 99.7%,#890"></i><i style="--g:#020,#0d0 29.5%,#2c0 40.9%,#510 52%,#4e0 57.6%,#0c0 68.3%,#080 72.2%,#250 80.9%,#1f0 87.4%,#120 90.4%,#0c0 91.6%,#460 94.3%,#6b0 95.9%,#670 96.7%,#3a0 97.7%,#0c0 98.2%,#0c0 98.5%,#4b0 98.9%,#670 99.4%,#7e0 99.7%,#890"></i><i style="--g:#020,#0d0 29.5%,#2c0 40.9%,#510 52.2%,#4d0 57.6%,#0b0 68.3%,#090 72.1%,#2a0 80.8%,#250 86.9%,#170 90.1%,#0b0 91.7%,#3c0 94.3%,#610 95.9%,#5e0 96.7%,#300 97.7%,#020 98.2%,#0b0 98.5%,#4b0 98.9%,#670 99.4%,#7e0 99.7%,#890"></i><i style="--g:#020,#0d0 29.7%,#2c0 41.2%,#4f0 52.2%,#4b0 57.6%,#0b0 68.3%,#0a0 71.9%,#320 80.6%,#2e0 86.5%,#1d0 89.9%,#0a0 92%,#430 95%,#580 96.1%,#5c0 96.5%,#3b0 97.3%,#260 97.7%,#070 98%,#010 98.2%,#0b0 98.5%,#4b0 98.9%,#670 99.4%,#7e0 99.7%,#890"></i><i style="--g:#020,#0d0 29.8%,#2c0 41.5%,#4e0 52.3%,#490 57.7%,#0b0 68.2%,#0b0 71.8%,#350 79.1%,#3a0 84.4%,#230 89.8%,#090 92.2%,#390 95%,#550 96.4%,#510 96.7%,#1c0 97.7%,#020 98%,#060 98.3%,#0b0 98.5%,#4b0 98.9%,#670 99.4%,#7e0 99.7%,#890"></i><i style="--g:#020,#0d0 29.8%,#2c0 41.7%,#4d0 52.5%,#480 57.7%,#0b0 68%,#0c0 71.8%,#360 78.8%,#3d0 81.1%,#380 86.2%,#250 89.8%,#070 92.3%,#310 95%,#530 96.5%,#2d0 97.3%,#040 97.9%,#010 98.2%,#0b0 98.5%,#4b0 98.9%,#670 99.4%,#7e0 99.7%,#890"></i><i style="--g:#020,#0d0 29.5%,#2c0 40.9%,#510 52%,#4d0 57.6%,#0b0 68.3%,#0b0 71.8%,#360 79.1%,#3b0 83.9%,#290 89.3%,#050 92.3%,#260 94.9%,#500 96.5%,#350 97.1%,#090 97.7%,#010 98.2%,#0b0 98.5%,#4b0 98.9%,#670 99.4%,#7e0 99.7%,#890"></i><i style="--g:#020,#0e0 28.9%,#2c0 39.7%,#590 51.6%,#570 57.1%,#2e0 63.4%,#0b0 69.4%,#0d0 72.4%,#350 80.5%,#300 86.3%,#1e0 89.9%,#040 92.5%,#220 95%,#4f0 96.5%,#340 97.1%,#070 97.7%,#010 98.2%,#0b0 98.5%,#4b0 98.9%,#670 99.4%,#7e0 99.7%,#890"></i><i style="--g:#020,#0e0 28.2%,#2c0 38.5%,#600 51%,#610 56.7%,#3e0 62.1%,#100 68.6%,#0a0 72.1%,#300 80.6%,#2b0 86.6%,#1b0 89.9%,#040 92.6%,#1c0 95%,#4e0 96.5%,#330 97.1%,#070 97.7%,#010 98.2%,#0b0 98.5%,#4b0 98.9%,#670 99.4%,#7e0 99.7%,#890"></i><i style="--g:#030,#0f0 27.7%,#2c0 37.6%,#680 50.5%,#690 56.2%,#4a0 61.3%,#130 68.5%,#0b0 72.1%,#2f0 80.6%,#2a0 86.6%,#1b0 89.9%,#020 92.6%,#170 95%,#4e0 96.5%,#330 97.1%,#070 97.7%,#010 98.2%,#0b0 98.5%,#4b0 98.9%,#670 99.4%,#7e0 99.7%,#890"></i><i style="--g:#030,#100 27.1%,#2c0 36.7%,#6f0 50.2%,#710 55.9%,#530 60.9%,#160 68.5%,#0c0 72.1%,#340 80.5%,#2f0 86.5%,#1e0 89.9%,#020 92.6%,#130 95%,#4e0 96.5%,#330 97.1%,#070 97.7%,#010 98.2%,#0b0 98.5%,#4b0 98.9%,#670 99.4%,#7e0 99.7%,#890"></i><i style="--g:#030,#100 26.5%,#2d0 36%,#760 49.9%,#790 55.6%,#5d0 60.4%,#180 68.5%,#0e0 72.1%,#330 78.5%,#3c0 80.8%,#380 86.2%,#250 89.8%,#010 92.8%,#100 95%,#4e0 96.5%,#330 97.1%,#070 97.7%,#010 98.2%,#0b0 98.5%,#4b0 98.9%,#670 99.4%,#7e0 99.7%,#890"></i><i style="--g:#030,#100 26.2%,#2d0 35.5%,#7a0 49.6%,#7e0 55.3%,#640 60%,#1a0 68.5%,#0f0 71.9%,#340 77.9%,#430 80.3%,#3f0 86%,#290 89.8%,#010 92.8%,#0e0 95%,#4e0 96.5%,#330 97.1%,#070 97.7%,#010 98.2%,#0b0 98.5%,#4b0 98.9%,#670 99.4%,#7e0 99.7%,#890"></i><i style="--g:#030,#100 26.7%,#2d0 36.1%,#740 49.9%,#770 55.6%,#5b0 60.4%,#180 68.3%,#0e0 71.8%,#340 77.8%,#450 80.3%,#400 86%,#2a0 89.8%,#010 92.8%,#0b0 94.9%,#180 95.3%,#4e0 96.5%,#330 97.1%,#070 97.7%,#010 98.2%,#0b0 98.5%,#4b0 98.9%,#670 99.4%,#7e0 99.7%,#890"></i><i style="--g:#030,#0f0 27.6%,#2c0 37.5%,#680 50.5%,#6a0 56.2%,#4a0 61.3%,#130 68.5%,#0d0 71.8%,#350 78.4%,#400 80.6%,#3b0 86.2%,#270 89.8%,#010 92.8%,#080 94.7%,#100 95.2%,#4a0 96.4%,#4e0 96.5%,#330 97.1%,#070 97.7%,#010 98.2%,#0b0 98.5%,#4b0 98.9%,#670 99.4%,#7e0 99.7%,#890"></i><i style="--g:#020,#0e0 28.5%,#2c0 39%,#5c0 51.1%,#5c0 56.8%,#360 62.7%,#0d0 68.9%,#0c0 72.1%,#380 80.5%,#330 86.3%,#220 89.8%,#010 92.8%,#0a0 94.9%,#180 95.3%,#4e0 96.5%,#330 97.1%,#070 97.7%,#010 98.2%,#0b0 98.5%,#4b0 98.9%,#670 99.4%,#7e0 99.7%,#890"></i><i style="--g:#020,#0e0 29.4%,#2c0 40.6%,#530 51.9%,#500 57.4%,#0c0 68.5%,#0a0 71.9%,#310 80.6%,#2c0 86.5%,#1c0 89.9%,#020 92.8%,#0d0 95%,#4e0 96.5%,#330 97.1%,#070 97.7%,#010 98.2%,#0b0 98.5%,#4b0 98.9%,#670 99.4%,#7e0 99.7%,#890"></i><i style="--g:#020,#0d0 29.4%,#2c0 40.8%,#520 52%,#4e0 57.4%,#0b0 68.3%,#0a0 71.9%,#2f0 80.6%,#2a0 86.6%,#1b0 89.9%,#030 92.6%,#0e0 95%,#4e0 96.5%,#330 97.1%,#070 97.7%,#010 98.2%,#0b0 98.5%,#4b0 98.9%,#670 99.4%,#7e0 99.7%,#890"></i><i style="--g:#020,#0d0 29.2%,#2c0 40.5%,#530 51.9%,#500 57.4%,#0c0 68.3%,#0a0 71.9%,#320 80.6%,#2d0 86.5%,#1d0 89.9%,#040 92.5%,#140 95.2%,#4e0 96.5%,#330 97.1%,#070 97.7%,#010 98.2%,#0b0 98.5%,#4b0 98.9%,#670 99.4%,#7e0 99.7%,#890"></i><i style="--g:#020,#0e0 29.2%,#2c0 40.3%,#550 51.7%,#530 57.3%,#0c0 68.5%,#0c0 71.9%,#370 79.6%,#340 86.2%,#220 89.8%,#050 92.5%,#180 95.2%,#4e0 96.5%,#330 97.1%,#070 97.7%,#010 98.2%,#0b0 98.5%,#4b0 98.9%,#670 99.4%,#7e0 99.7%,#890"></i><i style="--g:#020,#0e0 28.8%,#2c0 39.6%,#590 51.4%,#570 57.1%,#2b0 63.7%,#0a0 69.5%,#0f0 72.5%,#3d0 80.3%,#380 86.2%,#250 89.8%,#070 92.3%,#210 95.3%,#4e0 96.5%,#330 97.1%,#070 97.7%,#010 98.2%,#0b0 98.5%,#4b0 98.9%,#670 99.4%,#7e0 99.7%,#890"></i><i style="--g:#020,#0f0 27.7%,#2c0 37.9%,#640 50.7%,#640 56.4%,#410 61.8%,#110 68.5%,#0c0 71.8%,#350 78.7%,#3d0 80.9%,#380 86.2%,#250 89.8%,#0a0 92.2%,#2b0 95.5%,#4e0 96.5%,#330 97.1%,#070 97.7%,#010 98.2%,#0b0 98.5%,#4b0 98.9%,#670 99.4%,#7e0 99.7%,#890"></i><i style="--g:#030,#100 26.5%,#2d0 36.1%,#720 49.8%,#750 55.5%,#580 60.3%,#170 68.2%,#0c0 71.9%,#330 79.1%,#360 85.3%,#210 89.8%,#0d0 91.9%,#320 95.5%,#4f0 96.5%,#340 97.1%,#070 97.7%,#010 98.2%,#0b0 98.5%,#4b0 98.9%,#670 99.4%,#7e0 99.7%,#890"></i><i style="--g:#030,#110 25.6%,#2d0 34.8%,#800 49.2%,#850 54.7%,#6c0 59.4%,#1b0 68.5%,#0d0 72.5%,#2f0 80.6%,#2a0 86.6%,#1b0 89.9%,#0f0 91.6%,#3e0 95.6%,#520 96.5%,#370 97.1%,#040 97.9%,#010 98.2%,#0b0 98.5%,#4b0 98.9%,#670 99.4%,#7e0 99.7%,#890"></i><i style="--g:#040,#120 25.2%,#2e0 34%,#8c0 49%,#930 54.4%,#7d0 58.9%,#1f0 69.1%,#0e0 73.3%,#280 80.9%,#220 87.1%,#140 90.2%,#150 91.6%,#560 96.5%,#310 97.3%,#190 97.7%,#020 98%,#060 98.3%,#0b0 98.5%,#4b0 98.9%,#670 99.4%,#7e0 99.7%,#890"></i><i style="--g:#040,#120 25.2%,#2e0 34%,#8c0 49%,#930 54.4%,#7c0 58.9%,#200 68.9%,#0d0 73.4%,#250 80.9%,#1f0 87.4%,#160 90.8%,#5c0 96.5%,#3a0 97.3%,#250 97.7%,#060 98%,#010 98.2%,#0b0 98.5%,#4b0 98.9%,#670 99.4%,#7e0 99.7%,#890"></i><i style="--g:#030,#110 25.6%,#2e0 34.8%,#7f0 49.2%,#840 54.7%,#6a0 59.4%,#1b0 68.3%,#0b0 72.7%,#260 80.9%,#200 87.2%,#1b0 90.5%,#620 95.9%,#5f0 96.7%,#310 97.7%,#030 98.2%,#0b0 98.5%,#4b0 98.9%,#670 99.4%,#7e0 99.7%,#890"></i><i style="--g:#030,#100 26.5%,#2c0 36.1%,#700 49.6%,#730 55.3%,#570 60.1%,#160 68%,#0a0 72.2%,#290 80.8%,#240 86.9%,#210 90.2%,#650 95%,#6d0 96.2%,#660 96.8%,#3d0 97.7%,#0f0 98.2%,#0d0 98.5%,#340 98.8%,#4b0 98.9%,#670 99.4%,#7e0 99.7%,#890"></i><i style="--g:#030,#0f0 27.4%,#2c0 37.5%,#660 50.4%,#670 56.1%,#460 61.3%,#120 68.2%,#0a0 72.1%,#2b0 80.8%,#260 86.9%,#2a0 89.9%,#6d0 94.4%,#7a0 96.1%,#710 96.8%,#4a0 97.7%,#1b0 98.2%,#170 98.5%,#1f0 98.6%,#4b0 98.9%,#670 99.4%,#7e0 99.7%,#890"></i><i style="--g:#030,#0f0 27.3%,#2c0 37.2%,#680 50.2%,#690 55.9%,#490 61%,#130 68.2%,#090 72.1%,#2a0 80.8%,#280 88%,#420 90.5%,#770 94%,#870 96.1%,#7d0 96.8%,#560 97.7%,#270 98.2%,#250 98.6%,#4b0 98.9%,#670 99.4%,#7e0 99.7%,#890"></i><i style="--g:#030,#100 26.8%,#2d0 36.6%,#6e0 49.8%,#700 55.5%,#520 60.4%,#150 68%,#090 72.4%,#250 80.9%,#280 86.9%,#5b0 91%,#850 93.8%,#940 96.1%,#890 96.8%,#620 97.7%,#330 98.2%,#2e0 98.6%,#390 98.8%,#4c0 98.9%,#680 99.4%,#7e0 99.7%,#890"></i><i style="--g:#030,#100 26.2%,#2d0 35.7%,#730 49.3%,#770 55%,#5a0 59.8%,#170 67.9%,#090 72.7%,#1e0 81.2%,#260 86%,#570 89.2%,#950 93.8%,#a00 96.1%,#950 96.8%,#6d0 97.7%,#3e0 98.2%,#370 98.6%,#560 99.1%,#7f0 99.7%,#890"></i><i style="--g:#030,#110 25.8%,#2e0 35.1%,#790 49%,#7d0 54.6%,#630 59.2%,#1a0 67.7%,#080 73%,#190 81.7%,#1f0 83.9%,#340 86%,#680 88.7%,#8b0 91.7%,#a40 93.8%,#ac0 96.1%,#9a0 97%,#780 97.7%,#480 98.2%,#410 98.6%,#5f0 99.2%,#7f0 99.7%,#8a0"></i><i style="--g:#030,#110 25.6%,#2e0 34.9%,#7b0 48.9%,#800 54.4%,#660 59.1%,#1a0 67.9%,#080 73.1%,#1c0 83.2%,#390 85.3%,#7e0 88.7%,#a20 92.2%,#b30 94%,#b70 96.1%,#a40 97%,#820 97.7%,#510 98.2%,#4c0 98.8%,#6c0 99.4%,#800 99.7%,#8a0"></i><i style="--g:#030,#100 25.9%,#2e0 35.4%,#760 49%,#7a0 54.7%,#5e0 59.5%,#190 67.7%,#070 73%,#1a0 82.7%,#410 84.5%,#5d0 86.2%,#8f0 88.4%,#b70 92.6%,#c50 95.8%,#b40 96.8%,#8b0 97.7%,#5a0 98.2%,#530 98.8%,#6f0 99.4%,#810 99.7%,#8a0"></i><i style="--g:#030,#100 26.5%,#2d0 36.1%,#6f0 49.5%,#720 55.2%,#560 60%,#160 67.7%,#070 72.8%,#1b0 82.6%,#4c0 84.2%,#700 86.2%,#9f0 88.3%,#c40 92.6%,#ce0 95.8%,#bd0 96.8%,#930 97.7%,#620 98.2%,#590 98.8%,#710 99.4%,#860 99.8%,#8b0"></i><i style="--g:#030,#0f0 27.1%,#2c0 37%,#680 50.1%,#690 55.8%,#490 60.9%,#130 68%,#070 72.8%,#180 81.7%,#1e0 82.6%,#5a0 84.2%,#890 86.5%,#ad0 88.3%,#cf0 92.6%,#d60 95.2%,#d30 96.1%,#bd0 97%,#9a0 97.7%,#680 98.2%,#5f0 98.8%,#740 99.4%,#870 99.8%,#8c0"></i><i style="--g:#030,#0f0 27.4%,#2c0 37.5%,#660 50.2%,#670 55.9%,#450 61.2%,#120 68%,#070 72.8%,#1c0 82.4%,#650 84.2%,#ae0 87.7%,#c10 89.8%,#dd0 93.5%,#d90 96.1%,#c30 97%,#9f0 97.7%,#6e0 98.2%,#640 98.8%,#760 99.4%,#8c0"></i><i style="--g:#030,#0f0 26.8%,#2d0 36.6%,#6b0 49.8%,#6d0 55.5%,#4f0 60.4%,#140 67.9%,#060 73.1%,#1c0 81.8%,#290 82.6%,#6f0 84.2%,#b20 87.5%,#cb0 90.4%,#e40 93.5%,#df0 96.1%,#c80 97%,#a40 97.7%,#720 98.2%,#680 98.8%,#780 99.4%,#8d0"></i><i style="--g:#030,#100 26.1%,#2d0 35.5%,#740 49.2%,#770 54.9%,#5a0 59.7%,#180 67.6%,#060 73.3%,#140 79.1%,#350 82.3%,#560 83.3%,#7a0 84.2%,#b50 87.4%,#e90 93.4%,#e30 96.1%,#cc0 97%,#a80 97.7%,#760 98.2%,#6b0 98.8%,#7a0 99.4%,#8d0"></i><i style="--g:#030,#110 25.5%,#2d0 34.8%,#790 48.7%,#7d0 54.3%,#630 58.9%,#190 67.6%,#070 73.1%,#130 77.5%,#400 81.4%,#640 83.2%,#880 84.4%,#b60 87.5%,#ec0 93.4%,#e90 95.9%,#cf0 97%,#aa0 97.7%,#780 98.2%,#6d0 98.8%,#7b0 99.4%,#8e0"></i><i style="--g:#030,#100 25.9%,#2d0 35.4%,#730 49%,#770 54.7%,#5b0 59.5%,#170 67.6%,#0b0 71.8%,#1e0 77%,#770 83.2%,#930 84.7%,#ca0 89.6%,#ee0 93.4%,#eb0 95.9%,#d10 97%,#ac0 97.7%,#7a0 98.2%,#6f0 98.8%,#7c0 99.4%,#8e0"></i><i style="--g:#030,#0f0 27.4%,#2c0 37.5%,#650 50.2%,#660 55.9%,#440 61.2%,#130 67.9%,#150 71.3%,#320 76.9%,#750 81.8%,#a10 86.5%,#ee0 93.2%,#ec0 95.9%,#d20 97%,#ad0 97.7%,#7b0 98.2%,#700 98.8%,#7c0 99.4%,#8e0"></i><i style="--g:#020,#0e0 28.9%,#2c0 39.9%,#560 51.6%,#540 57.1%,#170 66.8%,#2c0 72.1%,#4e0 77%,#780 80.5%,#820 84.4%,#950 86.3%,#ee0 93.1%,#ed0 95.9%,#d20 97%,#ad0 97.7%,#7b0 98.2%,#700 98.8%,#7d0 99.4%,#8e0"></i><i style="--g:#020,#0d0 30%,#2d0 42.4%,#490 52.8%,#420 57.9%,#1d0 64.6%,#330 69.2%,#6a0 77.2%,#7d0 79.9%,#730 82.4%,#6c0 83.8%,#890 86.3%,#aa0 88.6%,#ec0 92.9%,#ed0 95.9%,#d20 97%,#ad0 97.7%,#7b0 98.2%,#700 98.8%,#7d0 99.4%,#8e0"></i><i style="--g:#010,#0c0 31%,#3c0 53.2%,#330 58.8%,#270 62.8%,#4d0 69.1%,#7b0 77.6%,#740 80.3%,#540 83.3%,#820 86.8%,#980 88.4%,#c90 90.8%,#ed0 93.4%,#ed0 95.9%,#d20 97%,#ad0 97.7%,#7b0 98.2%,#700 98.8%,#7d0 99.4%,#8e0"></i><i style="--g:#020,#0c0 30%,#2d0 42.4%,#480 52.8%,#400 58.8%,#3d0 62.5%,#740 71.9%,#790 77.3%,#590 80.8%,#3c0 83.2%,#860 88.4%,#c20 90.8%,#ea0 93.2%,#ec0 95.9%,#d20 97%,#ad0 97.7%,#7b0 98.2%,#6f0 98.8%,#7c0 99.4%,#8e0"></i><i style="--g:#030,#100 26.2%,#2d0 35.8%,#6f0 49.2%,#720 54.9%,#5a0 62.4%,#780 71.2%,#6c0 77%,#270 83%,#540 86%,#730 88.4%,#bf0 91.1%,#e70 93.2%,#eb0 95.9%,#d10 97%,#ac0 97.7%,#7a0 98.2%,#6f0 98.8%,#7c0 99.4%,#8e0"></i><i style="--g:#040,#130 24.3%,#2f0 33%,#960 48.4%,#9e0 53.7%,#740 64.3%,#6b0 72.1%,#540 77%,#1a0 82.3%,#1b0 83.2%,#360 85%,#5f0 88.4%,#c00 91.6%,#e20 93.2%,#e90 95.9%,#cf0 97%,#ab0 97.7%,#780 98.2%,#6d0 98.8%,#7b0 99.4%,#8e0"></i><i style="--g:#050,#140 24.6%,#300 32.8%,#6b0 40.8%,#ad0 49%,#ba0 54%,#a70 60%,#660 68.6%,#390 77%,#150 81.1%,#110 83%,#4c0 88.4%,#c10 92%,#dc0 93.4%,#e70 95.9%,#cd0 97%,#a80 97.7%,#760 98.2%,#6c0 98.8%,#7a0 99.4%,#8e0"></i><i style="--g:#050,#140 24.4%,#300 32.8%,#6b0 40.8%,#ac0 48.9%,#b90 53.8%,#a80 59.4%,#440 70.4%,#1d0 77.6%,#110 81.2%,#160 83.9%,#3a0 88.4%,#c20 92.5%,#d60 93.5%,#e30 95.9%,#ca0 97%,#a50 97.7%,#740 98.2%,#690 98.8%,#790 99.4%,#8d0"></i><i style="--g:#040,#130 24.3%,#300 33%,#970 48.3%,#9f0 53.5%,#880 58.6%,#320 68.5%,#160 75.8%,#150 81.4%,#1e0 86.6%,#2b0 88.4%,#6c0 90.4%,#bf0 92.8%,#d70 94.4%,#df0 95.9%,#c60 97%,#a20 97.7%,#700 98.2%,#660 98.8%,#770 99.4%,#8d0"></i><i style="--g:#040,#110 24.7%,#2e0 33.9%,#800 48.1%,#860 53.7%,#6d0 58.5%,#210 67.4%,#0e0 74%,#1a0 82.3%,#1d0 88.3%,#4e0 90.1%,#b30 92.8%,#cf0 94.4%,#da0 95.9%,#c10 97%,#9d0 97.7%,#6c0 98.2%,#620 98.8%,#750 99.4%,#880 99.8%,#8c0"></i><i style="--g:#030,#100 26.1%,#2d0 35.7%,#700 49%,#730 54.7%,#550 59.7%,#170 67.3%,#090 72.5%,#1e0 81.4%,#1b0 88.6%,#3d0 90.1%,#af0 93.1%,#d20 95.6%,#cb0 96.4%,#bb0 97%,#980 97.7%,#660 98.2%,#5e0 98.8%,#730 99.4%,#870 99.8%,#8b0"></i><i style="--g:#020,#0f0 27.6%,#2c0 37.8%,#610 50.4%,#610 56.1%,#3d0 61.6%,#0f0 68.2%,#080 72.4%,#1f0 81.2%,#1b0 89%,#350 90.2%,#a50 93.2%,#cc0 95.8%,#bb0 96.8%,#910 97.7%,#600 98.2%,#580 98.8%,#710 99.4%,#860 99.8%,#8b0"></i><i style="--g:#020,#0e0 28%,#2c0 38.5%,#5d0 50.7%,#5d0 56.4%,#380 62.1%,#0d0 68.5%,#080 72.5%,#1e0 81.2%,#190 89.5%,#2d0 90.4%,#970 93.2%,#c40 95.8%,#b40 96.8%,#8a0 97.7%,#5a0 98.2%,#530 98.8%,#850 99.8%,#8a0"></i><i style="--g:#030,#0f0 27%,#2d0 37%,#670 49.8%,#680 55.5%,#480 60.6%,#130 67.6%,#070 72.4%,#1d0 81.4%,#170 89.9%,#450 91.4%,#8c0 93.4%,#ba0 95.8%,#ab0 96.8%,#820 97.7%,#520 98.2%,#4d0 98.8%,#6c0 99.4%,#800 99.7%,#8a0"></i><i style="--g:#030,#100 25.8%,#2d0 35.2%,#720 48.7%,#750 54.4%,#580 59.2%,#170 67.1%,#070 72.2%,#1e0 81.2%,#170 88.4%,#160 90.2%,#480 91.9%,#810 93.5%,#b00 95.8%,#a20 96.8%,#7a0 97.7%,#4a0 98.2%,#420 98.6%,#5f0 99.2%,#7f0 99.7%,#8a0"></i><i style="--g:#030,#110 24.9%,#2e0 34.2%,#790 48%,#7e0 53.7%,#630 58.3%,#1a0 66.8%,#080 71.9%,#230 81.1%,#1d0 87.5%,#160 90.5%,#400 92%,#770 93.7%,#a50 95.8%,#980 96.8%,#700 97.7%,#410 98.2%,#3a0 98.6%,#570 99.1%,#7f0 99.7%,#890"></i><i style="--g:#040,#110 24.7%,#2e0 33.9%,#7d0 48%,#810 53.5%,#680 58.2%,#1b0 67%,#090 71.8%,#2b0 80.8%,#260 86.8%,#180 90.1%,#180 91%,#4e0 92.8%,#910 95.3%,#9a0 95.9%,#8e0 96.8%,#660 97.7%,#370 98.2%,#320 98.6%,#3b0 98.8%,#4d0 98.9%,#680 99.4%,#7e0 99.7%,#890"></i><i style="--g:#040,#110 24.6%,#2e0 33.7%,#7f0 47.8%,#840 53.4%,#6b0 58%,#1b0 67.1%,#0b0 71.8%,#310 79.3%,#300 86.2%,#1e0 89.9%,#150 91.1%,#3c0 92.6%,#880 95.5%,#8f0 95.9%,#840 96.8%,#5c0 97.7%,#2d0 98.2%,#290 98.6%,#4c0 98.9%,#680 99.4%,#7e0 99.7%,#890"></i><i style="--g:#040,#110 24.4%,#2f0 33.6%,#810 47.8%,#870 53.4%,#6e0 58%,#1c0 67.1%,#0b0 71.6%,#2f0 78.4%,#390 80.8%,#340 86.3%,#220 89.8%,#130 91.3%,#310 92.6%,#830 95.8%,#790 96.8%,#510 97.7%,#230 98.2%,#1e0 98.5%,#220 98.6%,#4b0 98.9%,#670 99.4%,#7e0 99.7%,#890"></i><i style="--g:#040,#120 24.4%,#2f0 33.4%,#830 47.8%,#890 53.4%,#700 58%,#1d0 67.1%,#0b0 71.6%,#2e0 78.2%,#380 80.6%,#340 86.3%,#220 89.8%,#110 91.6%,#780 95.9%,#6e0 96.8%,#470 97.7%,#180 98.2%,#140 98.5%,#1f0 98.6%,#4b0 98.9%,#670 99.4%,#7e0 99.7%,#890"></i><i style="--g:#040,#110 24.3%,#2e0 33.3%,#840 47.8%,#890 53.4%,#6f0 58%,#1d0 67.1%,#0b0 71.8%,#2f0 78.8%,#340 81.7%,#2f0 86.5%,#1e0 89.9%,#0e0 91.7%,#550 94.9%,#6d0 95.9%,#680 96.7%,#3c0 97.7%,#0d0 98.2%,#0c0 98.5%,#4b0 98.9%,#670 99.4%,#7e0 99.7%,#890"></i><i style="--g:#040,#110 24.4%,#2e0 33.4%,#810 47.7%,#870 53.2%,#6e0 57.9%,#1d0 67%,#0a0 71.8%,#2e0 79.4%,#2c0 86.3%,#1c0 89.9%,#0c0 91.9%,#4e0 95%,#620 95.9%,#5f0 96.7%,#310 97.7%,#030 98.2%,#0b0 98.5%,#4b0 98.9%,#670 99.4%,#7e0 99.7%,#890"></i><i style="--g:#040,#110 24.4%,#2e0 33.6%,#7f0 47.8%,#840 53.4%,#6a0 58%,#1b0 67%,#0a0 71.8%,#300 80.6%,#2b0 86.6%,#1c0 89.9%,#0a0 92%,#400 94.9%,#580 95.9%,#5c0 96.5%,#3b0 97.3%,#260 97.7%,#070 98%,#010 98.2%,#0b0 98.5%,#4b0 98.9%,#670 99.4%,#7e0 99.7%,#890"></i><i style="--g:#040,#110 24.6%,#2e0 33.7%,#7d0 47.8%,#820 53.4%,#680 58%,#1b0 66.8%,#0a0 71.5%,#2f0 78.7%,#360 81.2%,#310 86.5%,#1f0 89.9%,#080 92.2%,#360 94.9%,#500 96.1%,#570 96.5%,#330 97.3%,#1b0 97.7%,#020 98%,#060 98.3%,#0b0 98.5%,#4b0 98.9%,#670 99.4%,#7e0 99.7%,#890"></i><i style="--g:#040,#110 24.7%,#2e0 34%,#7a0 47.8%,#7e0 53.4%,#640 58%,#1a0 66.7%,#0a0 71.2%,#310 77.8%,#400 80.5%,#3b0 86.2%,#270 89.8%,#070 92.3%,#2d0 94.9%,#530 96.5%,#2d0 97.3%,#040 97.9%,#010 98.2%,#0b0 98.5%,#4b0 98.9%,#670 99.4%,#7e0 99.7%,#890"></i><i style="--g:#030,#100 25.5%,#2d0 34.9%,#730 48.4%,#760 54.1%,#5a0 58.9%,#180 66.8%,#0b0 71%,#340 77.3%,#490 80.3%,#450 85.9%,#2f0 89.6%,#060 92.5%,#280 95%,#500 96.5%,#350 97.1%,#090 97.7%,#010 98.2%,#0b0 98.5%,#4b0 98.9%,#670 99.4%,#7e0 99.7%,#890"></i><i style="--g:#030,#0f0 26.7%,#2d0 36.6%,#680 49.5%,#6a0 55.2%,#4a0 60.3%,#130 67.4%,#0c0 71.2%,#370 77.3%,#4d0 80.2%,#490 85.9%,#310 89.6%,#040 92.5%,#210 95%,#4f0 96.5%,#340 97.1%,#070 97.7%,#010 98.2%,#0b0 98.5%,#4b0 98.9%,#670 99.4%,#7e0 99.7%,#890"></i><i style="--g:#030,#0f0 27.4%,#2c0 37.6%,#620 50.1%,#620 55.8%,#400 61.2%,#100 67.9%,#0c0 71.3%,#370 77.6%,#4a0 80.3%,#460 85.9%,#2f0 89.6%,#030 92.5%,#1b0 95%,#4e0 96.5%,#330 97.1%,#070 97.7%,#010 98.2%,#0b0 98.5%,#4b0 98.9%,#670 99.4%,#7e0 99.7%,#890"></i><i style="--g:#030,#0f0 26.5%,#2d0 36.4%,#690 49.3%,#6b0 55%,#4c0 60.1%,#140 67.3%,#0a0 71.3%,#340 78.1%,#420 80.5%,#3d0 86%,#280 89.8%,#020 92.6%,#160 95%,#4e0 96.5%,#330 97.1%,#070 97.7%,#010 98.2%,#0b0 98.5%,#4b0 98.9%,#670 99.4%,#7e0 99.7%,#890"></i><i style="--g:#030,#100 25.3%,#2e0 34.8%,#740 48.3%,#780 54%,#5b0 58.8%,#180 66.8%,#0a0 71.3%,#310 78.5%,#3a0 80.8%,#350 86.3%,#230 89.8%,#030 92.6%,#120 95%,#4e0 96.5%,#330 97.1%,#070 97.7%,#010 98.2%,#0b0 98.5%,#4b0 98.9%,#670 99.4%,#7e0 99.7%,#890"></i><i style="--g:#040,#110 24.6%,#2e0 33.7%,#7c0 47.8%,#810 53.4%,#670 58%,#1a0 66.8%,#0a0 71.5%,#300 78.7%,#370 81.1%,#330 86.3%,#220 89.8%,#040 92.5%,#150 95.2%,#4e0 96.5%,#330 97.1%,#070 97.7%,#010 98.2%,#0b0 98.5%,#4b0 98.9%,#670 99.4%,#7e0 99.7%,#890"></i><i style="--g:#040,#110 24.4%,#2e0 33.4%,#810 47.7%,#860 53.2%,#6d0 57.9%,#1c0 67%,#0b0 71.5%,#2f0 78.1%,#3b0 80.6%,#370 86.2%,#240 89.8%,#050 92.3%,#190 95.2%,#4e0 96.5%,#330 97.1%,#070 97.7%,#010 98.2%,#0b0 98.5%,#4b0 98.9%,#670 99.4%,#7e0 99.7%,#890"></i><i style="--g:#040,#120 24.3%,#2f0 33.3%,#850 47.7%,#8b0 53.2%,#730 57.9%,#1d0 67.3%,#0d0 71.5%,#320 77.6%,#430 80.3%,#3f0 86%,#290 89.8%,#080 92.3%,#220 95.3%,#4e0 96.5%,#330 97.1%,#070 97.7%,#010 98.2%,#0b0 98.5%,#4b0 98.9%,#670 99.4%,#7e0 99.7%,#890"></i><i style="--g:#040,#120 24%,#2f0 32.8%,#8b0 47.7%,#920 53.1%,#7b0 57.6%,#1f0 67.6%,#0f0 71.6%,#350 77.3%,#4a0 80.3%,#460 85.9%,#2f0 89.6%,#0b0 92.2%,#2c0 95.5%,#4e0 96.5%,#330 97.1%,#070 97.7%,#010 98.2%,#0b0 98.5%,#4b0 98.9%,#670 99.4%,#7e0 99.7%,#890"></i><i style="--g:#040,#130 23.8%,#2f0 32.5%,#930 47.7%,#9b0 52.9%,#860 57.4%,#210 68.2%,#110 71.9%,#350 77.3%,#4b0 80.3%,#470 85.9%,#300 89.6%,#0f0 91.9%,#380 95.6%,#500 96.5%,#350 97.1%,#070 97.7%,#010 98.2%,#0b0 98.5%,#4b0 98.9%,#670 99.4%,#7e0 99.7%,#890"></i><i style="--g:#040,#130 24%,#2f0 32.5%,#960 47.8%,#9e0 53.1%,#8a0 57.6%,#220 68.5%,#120 72.2%,#320 77.5%,#450 80.3%,#400 86%,#2a0 89.8%,#130 91.7%,#440 95.8%,#520 96.5%,#380 97.1%,#040 97.9%,#010 98.2%,#0b0 98.5%,#4b0 98.9%,#670 99.4%,#7e0 99.7%,#890"></i><i style="--g:#040,#120 24%,#2f0 32.8%,#8d0 47.7%,#930 53.1%,#7d0 57.6%,#200 67.6%,#0e0 71.9%,#2f0 78.1%,#3b0 80.6%,#370 86.2%,#240 89.8%,#160 91.3%,#570 96.5%,#330 97.3%,#1c0 97.7%,#020 98%,#060 98.3%,#0b0 98.5%,#4b0 98.9%,#670 99.4%,#7e0 99.7%,#890"></i><i style="--g:#040,#110 24.3%,#2e0 33.3%,#820 47.7%,#880 53.2%,#6f0 57.9%,#1c0 67.1%,#0b0 71.8%,#2e0 79.1%,#2f0 86%,#1d0 89.9%,#1b0 91.1%,#5d0 96.4%,#540 96.8%,#280 97.7%,#090 98%,#010 98.2%,#0b0 98.5%,#4b0 98.9%,#670 99.4%,#7e0 99.7%,#890"></i><i style="--g:#040,#110 24.7%,#2f0 34%,#7a0 47.8%,#7f0 53.4%,#650 58%,#1a0 66.7%,#090 71.6%,#2e0 80.6%,#290 86.6%,#1e0 90.5%,#650 95.9%,#620 96.7%,#340 97.7%,#060 98.2%,#0b0 98.5%,#4b0 98.9%,#670 99.4%,#7e0 99.7%,#890"></i><i style="--g:#030,#100 25.9%,#2d0 35.7%,#6e0 48.9%,#700 54.6%,#520 59.5%,#150 67.1%,#090 71.6%,#2f0 80.6%,#2a0 86.6%,#240 90.2%,#670 94.9%,#710 96.1%,#6c0 96.7%,#400 97.7%,#120 98.2%,#0f0 98.5%,#340 98.8%,#4b0 98.9%,#670 99.4%,#7e0 99.7%,#890"></i><i style="--g:#020,#0e0 27.9%,#2c0 38.2%,#5e0 50.5%,#5e0 56.2%,#380 61.9%,#0e0 68.3%,#0a0 71.9%,#330 80.5%,#2e0 86.5%,#2d0 89.8%,#720 94.6%,#7d0 96.1%,#740 96.8%,#4d0 97.7%,#1e0 98.2%,#1a0 98.5%,#200 98.6%,#4b0 98.9%,#670 99.4%,#7e0 99.7%,#890"></i><i style="--g:#020,#0e0 28.5%,#2c0 39.1%,#5a0 51%,#590 56.7%,#2e0 63%,#0b0 68.9%,#0c0 72.2%,#360 80.5%,#310 86.5%,#350 88.7%,#460 90.5%,#7b0 94%,#8a0 96.1%,#810 96.8%,#590 97.7%,#2a0 98.2%,#270 98.6%,#4b0 98.9%,#670 99.4%,#7e0 99.7%,#890"></i><i style="--g:#030,#0f0 27%,#2d0 37%,#660 49.8%,#670 55.5%,#450 60.7%,#120 67.6%,#0a0 71.6%,#340 80.5%,#350 87.4%,#5d0 90.8%,#890 93.8%,#970 96.1%,#8d0 96.8%,#650 97.7%,#360 98.2%,#300 98.6%,#3a0 98.8%,#4d0 98.9%,#680 99.4%,#7e0 99.7%,#890"></i><i style="--g:#030,#100 25.3%,#2e0 34.8%,#740 48.3%,#770 54%,#5b0 58.8%,#180 66.8%,#090 71.6%,#2e0 80.6%,#330 86.3%,#5e0 89.5%,#990 93.8%,#a40 96.1%,#980 96.8%,#700 97.7%,#410 98.2%,#3a0 98.6%,#570 99.1%,#7f0 99.7%,#890"></i><i style="--g:#040,#110 24.7%,#2e0 33.9%,#7b0 47.8%,#800 53.4%,#660 58%,#1b0 66.7%,#080 71.8%,#260 80.9%,#2d0 84.5%,#3c0 86.2%,#6d0 88.7%,#920 91.9%,#a80 93.8%,#af0 96.1%,#9d0 97%,#7b0 97.7%,#4b0 98.2%,#440 98.6%,#600 99.2%,#7f0 99.7%,#8a0"></i><i style="--g:#040,#110 24.6%,#2e0 33.7%,#7e0 47.8%,#820 53.4%,#680 58%,#1b0 66.8%,#080 72.1%,#1f0 81.2%,#240 83.3%,#4b0 86%,#810 88.6%,#a70 92.2%,#b70 94%,#ba0 96.1%,#a70 97%,#850 97.7%,#540 98.2%,#4f0 98.8%,#850 99.8%,#8a0"></i><i style="--g:#040,#110 24.4%,#2e0 33.6%,#7f0 47.7%,#850 53.2%,#6c0 57.9%,#1c0 67%,#080 72.4%,#1b0 81.5%,#200 82.9%,#420 84.4%,#620 86.2%,#940 88.4%,#b90 92.5%,#c50 94.4%,#c50 96.1%,#b00 97%,#8e0 97.7%,#5d0 98.2%,#550 98.8%,#6f0 99.4%,#810 99.7%,#8b0"></i><i style="--g:#040,#120 24.4%,#2f0 33.4%,#820 47.7%,#880 53.2%,#6f0 57.9%,#1c0 67.1%,#080 72.5%,#1b0 81.5%,#210 82.7%,#4f0 84.2%,#750 86.2%,#a30 88.3%,#c60 92.5%,#cf0 94.1%,#ce0 96.1%,#b90 97%,#950 97.7%,#640 98.2%,#5c0 98.8%,#720 99.4%,#870 99.8%,#8b0"></i><i style="--g:#040,#120 24.3%,#2f0 33.3%,#840 47.7%,#8a0 53.2%,#710 57.9%,#1d0 67.1%,#080 72.5%,#1c0 81.5%,#210 82.6%,#5d0 84.2%,#8c0 86.5%,#b00 88.3%,#d30 92.6%,#d90 95%,#d50 96.1%,#c00 97%,#9c0 97.7%,#6b0 98.2%,#610 98.8%,#750 99.4%,#880 99.8%,#8c0"></i><i style="--g:#040,#110 24.3%,#2e0 33.3%,#830 47.7%,#890 53.2%,#700 57.9%,#1d0 67.1%,#080 72.5%,#1d0 81.7%,#240 82.6%,#680 84.2%,#b00 87.7%,#c50 89.9%,#e00 93.5%,#dc0 96.1%,#c60 97%,#a20 97.7%,#700 98.2%,#660 98.8%,#770 99.4%,#8d0"></i><i style="--g:#040,#110 24.4%,#2e0 33.4%,#810 47.7%,#870 53.2%,#6e0 57.9%,#1d0 67%,#080 72.5%,#240 82.1%,#370 82.9%,#720 84.2%,#b40 87.5%,#cf0 90.7%,#e60 93.4%,#e10 96.1%,#ca0 97%,#a60 97.7%,#740 98.2%,#6a0 98.8%,#790 99.4%,#8d0"></i><i style="--g:#040,#110 24.4%,#2f0 33.6%,#800 47.7%,#850 53.2%,#6c0 57.9%,#1c0 67%,#070 72.7%,#1a0 79.3%,#3a0 82.3%,#5a0 83.3%,#7d0 84.2%,#b60 87.4%,#eb0 93.4%,#e50 96.1%,#ce0 97%,#a90 97.7%,#770 98.2%,#6d0 98.8%,#7b0 99.4%,#8e0"></i><i style="--g:#040,#110 24.6%,#2e0 33.9%,#7b0 47.8%,#800 53.4%,#660 58%,#1b0 66.7%,#060 72.5%,#150 77.3%,#450 81.4%,#6d0 83.3%,#8a0 84.4%,#b70 87.5%,#ee0 93.4%,#eb0 95.9%,#d10 97%,#ac0 97.7%,#7a0 98.2%,#6f0 98.8%,#7c0 99.4%,#8e0"></i><i style="--g:#030,#100 26.2%,#2d0 36%,#6c0 49%,#6f0 54.7%,#510 59.7%,#150 67.1%,#070 71.9%,#1f0 76.7%,#820 83.6%,#980 85.1%,#cf0 90.1%,#ef0 93.4%,#ed0 95.9%,#d20 97%,#ad0 97.7%,#7b0 98.2%,#700 98.8%,#7d0 99.4%,#8e0"></i><i style="--g:#020,#0e0 28.6%,#2c0 39.4%,#590 51.1%,#570 56.8%,#2b0 63.4%,#0a0 69.2%,#180 73.3%,#3b0 77.2%,#750 81.5%,#9e0 86.3%,#f00 93.2%,#ee0 95.9%,#d30 97%,#ae0 97.7%,#7c0 98.2%,#710 98.8%,#7d0 99.4%,#8f0"></i><i style="--g:#020,#0c0 30.6%,#300 44.8%,#410 54.3%,#330 59.4%,#0a0 67.1%,#1b0 71.2%,#520 76.9%,#780 80.2%,#7b0 82.7%,#800 84.4%,#940 86.3%,#ef0 93.1%,#ee0 95.9%,#d40 97%,#af0 97.7%,#7c0 98.2%,#710 98.8%,#7d0 99.4%,#8f0"></i><i style="--g:#010,#0a0 33.3%,#2a0 54.1%,#1b0 60.9%,#0d0 66.1%,#2d0 70.7%,#7b0 78.8%,#770 81.5%,#670 83.6%,#870 86.3%,#a80 88.6%,#e70 92.5%,#ef0 93.5%,#ee0 95.9%,#d40 97%,#af0 97.7%,#7c0 98.2%,#710 98.8%,#7d0 99.4%,#8f0"></i><i style="--g:#010,#0a0 33.1%,#2a0 54%,#1c0 60.6%,#120 64.8%,#350 69.1%,#720 75.4%,#7b0 78.5%,#610 81.8%,#4f0 83.3%,#950 88.4%,#c90 90.8%,#ee0 93.4%,#ee0 95.9%,#d30 97%,#af0 97.7%,#7c0 98.2%,#710 98.8%,#7d0 99.4%,#8f0"></i><i style="--g:#010,#0b0 31.5%,#370 53.2%,#2e0 58.8%,#1c0 63.6%,#3e0 67.4%,#6d0 72.1%,#7b0 76%,#6b0 78.8%,#370 83.2%,#7a0 87.8%,#830 88.4%,#c10 90.8%,#eb0 93.2%,#ed0 95.9%,#d30 97%,#ae0 97.7%,#7c0 98.2%,#710 98.8%,#7d0 99.4%,#8f0"></i><i style="--g:#020,#0c0 30.1%,#2e0 43%,#460 53.1%,#3e0 58.2%,#2a0 62.5%,#4b0 66.2%,#750 70.7%,#760 74.5%,#630 77.5%,#230 83%,#490 85.4%,#700 88.4%,#bd0 91.1%,#e70 93.2%,#ec0 95.9%,#d20 97%,#ad0 97.7%,#7b0 98.2%,#700 98.8%,#7d0 99.4%,#8e0"></i><i style="--g:#030,#0f0 27.4%,#2c0 37.6%,#620 50.1%,#620 55.8%,#440 62.2%,#750 69.1%,#710 72.5%,#4a0 77.3%,#1b0 81.8%,#170 83%,#350 85.1%,#5c0 88.4%,#c20 91.7%,#e20 93.2%,#ea0 95.9%,#d00 97%,#ab0 97.7%,#790 98.2%,#6e0 98.8%,#7c0 99.4%,#8e0"></i><i style="--g:#040,#120 24%,#2f0 32.7%,#8e0 47.7%,#950 53.1%,#7d0 57.9%,#630 62.4%,#720 68.3%,#5c0 72.4%,#150 80.6%,#130 83.2%,#480 88.4%,#c00 92%,#dc0 93.4%,#e70 95.9%,#ce0 97%,#a90 97.7%,#770 98.2%,#6c0 98.8%,#7b0 99.4%,#8e0"></i><i style="--g:#050,#140 24.4%,#300 32.7%,#690 40.2%,#b40 48.9%,#c40 53.7%,#b60 58.8%,#640 69.1%,#250 76.1%,#120 79.7%,#150 83.9%,#370 88.4%,#c10 92.5%,#d60 93.5%,#e40 95.9%,#ca0 97%,#a60 97.7%,#740 98.2%,#6a0 98.8%,#790 99.4%,#8d0"></i><i style="--g:#050,#160 24.7%,#310 32.8%,#670 39.7%,#c90 49.6%,#dd0 54.3%,#d20 59.4%,#a50 64.2%,#380 72.8%,#160 77.8%,#180 85.9%,#280 88.4%,#690 90.4%,#be0 92.8%,#d60 94.4%,#df0 95.9%,#c60 97%,#a20 97.7%,#700 98.2%,#660 98.8%,#770 99.4%,#8d0"></i><i style="--g:#050,#160 24.6%,#320 32.5%,#660 39.1%,#d30 49.6%,#e70 54.1%,#de0 58.8%,#ba0 62.8%,#3f0 72.2%,#1a0 77%,#1b0 88.3%,#4b0 90.1%,#b10 92.8%,#ce0 94.4%,#d90 95.9%,#c10 97%,#9d0 97.7%,#6c0 98.2%,#620 98.8%,#750 99.4%,#880 99.8%,#8c0"></i><i style="--g:#050,#160 24.9%,#310 33%,#660 39.9%,#c50 49.6%,#d80 54.3%,#cd0 58.9%,#a40 63.4%,#380 72.4%,#1b0 76.7%,#1f0 85.6%,#1c0 88.7%,#3b0 90.1%,#ad0 93.1%,#d20 95.6%,#cb0 96.4%,#bb0 97%,#980 97.7%,#660 98.2%,#5e0 98.8%,#730 99.4%,#870 99.8%,#8b0"></i><i style="--g:#050,#140 24.4%,#310 32.7%,#6b0 40.5%,#b10 48.9%,#bf0 53.7%,#b10 58.3%,#7c0 63.9%,#2d0 71.3%,#160 75.5%,#250 81.2%,#1f0 87.5%,#1f0 89.3%,#320 90.2%,#a30 93.2%,#cc0 95.8%,#bb0 96.8%,#910 97.7%,#600 98.2%,#580 98.8%,#710 99.4%,#860 99.8%,#8b0"></i><i style="--g:#040,#130 24%,#300 32.5%,#770 42.4%,#a00 49%,#a40 54.1%,#890 58.8%,#250 68.9%,#0f0 73.6%,#260 80.9%,#210 87.2%,#1f0 89.9%,#570 91.6%,#980 93.4%,#c30 95.8%,#b30 96.8%,#8a0 97.7%,#590 98.2%,#520 98.8%,#850 99.8%,#8a0"></i><i style="--g:#040,#120 24.3%,#2f0 33.3%,#860 47.7%,#8c0 53.2%,#730 57.9%,#1e0 67.3%,#0a0 72.2%,#250 80.9%,#200 87.2%,#1a0 90.1%,#480 91.6%,#8a0 93.4%,#b90 95.8%,#aa0 96.8%,#820 97.7%,#510 98.2%,#4c0 98.8%,#6c0 99.4%,#800 99.7%,#8a0"></i><i style="--g:#040,#110 24.7%,#2f0 34%,#7b0 47.8%,#7f0 53.4%,#650 58%,#1a0 66.7%,#080 71.9%,#240 80.9%,#1d0 87.5%,#180 90.4%,#4b0 92%,#7f0 93.5%,#af0 95.8%,#a10 96.8%,#790 97.7%,#490 98.2%,#420 98.6%,#5f0 99.2%,#7f0 99.7%,#8a0"></i><i style="--g:#040,#110 24.7%,#2e0 34%,#790 47.8%,#7d0 53.5%,#610 58.3%,#190 66.7%,#080 71.8%,#240 80.9%,#1e0 87.4%,#150 90.5%,#390 91.9%,#750 93.7%,#a40 95.8%,#970 96.8%,#6f0 97.7%,#400 98.2%,#390 98.6%,#570 99.1%,#7f0 99.7%,#890"></i><i style="--g:#040,#110 24.7%,#2e0 34%,#790 47.8%,#7d0 53.5%,#610 58.3%,#190 66.7%,#080 71.6%,#2a0 80.8%,#240 86.9%,#150 90.2%,#160 91%,#4c0 92.8%,#920 95.5%,#970 96.1%,#8d0 96.8%,#650 97.7%,#360 98.2%,#310 98.6%,#3a0 98.8%,#4d0 98.9%,#680 99.4%,#7e0 99.7%,#890"></i><i style="--g:#040,#110 24.7%,#2e0 34%,#790 47.8%,#7d0 53.5%,#610 58.3%,#190 66.7%,#090 71.5%,#300 79.3%,#2f0 86.2%,#1d0 89.9%,#140 91.1%,#350 92.5%,#860 95.5%,#8d0 95.9%,#820 96.8%,#5b0 97.7%,#2c0 98.2%,#280 98.6%,#4c0 98.9%,#670 99.4%,#7e0 99.7%,#890"></i><i style="--g:#040,#110 24.7%,#2e0 34%,#790 47.8%,#7d0 53.5%,#610 58.3%,#190 66.7%,#0a0 71.3%,#310 78.2%,#3c0 80.6%,#380 86.2%,#250 89.8%,#140 91.4%,#3d0 93.1%,#820 95.9%,#770 96.8%,#500 97.7%,#210 98.2%,#1d0 98.5%,#220 98.6%,#4b0 98.9%,#670 99.4%,#7e0 99.7%,#890"></i><i style="--g:#040,#110 24.6%,#2e0 33.7%,#7c0 47.8%,#810 53.4%,#670 58%,#1a0 66.8%,#0b0 71.3%,#320 77.8%,#420 80.3%,#3e0 86%,#280 89.8%,#110 91.6%,#320 93.1%,#760 95.9%,#700 96.7%,#450 97.7%,#170 98.2%,#130 98.5%,#1e0 98.6%,#4b0 98.9%,#670 99.4%,#7e0 99.7%,#890"></i><i style="--g:#040,#120 24.1%,#2f0 33.1%,#860 47.7%,#8d0 53.2%,#740 57.9%,#1e0 67.3%,#0d0 71.6%,#320 77.8%,#420 80.3%,#3e0 86%,#280 89.8%,#0f0 91.7%,#330 93.5%,#6b0 95.9%,#670 96.7%,#3a0 97.7%,#0c0 98.2%,#0c0 98.5%,#4b0 98.9%,#670 99.4%,#7e0 99.7%,#890"></i><i style="--g:#040,#130 23.8%,#2f0 32.5%,#930 47.7%,#9b0 52.9%,#860 57.4%,#200 68.2%,#100 72.2%,#310 78.1%,#3d0 80.5%,#380 86.2%,#250 89.8%,#0c0 91.9%,#3a0 94.3%,#600 95.9%,#5e0 96.7%,#2f0 97.7%,#010 98.2%,#0b0 98.5%,#4b0 98.9%,#670 99.4%,#7e0 99.7%,#890"></i><i style="--g:#040,#130 24%,#300 32.5%,#740 42%,#a10 48.9%,#a70 54%,#8f0 58.5%,#250 69.2%,#130 73.1%,#2d0 78.2%,#370 80.8%,#320 86.3%,#210 89.8%,#090 92%,#3b0 94.7%,#560 95.9%,#5b0 96.5%,#3a0 97.3%,#240 97.7%,#060 98%,#010 98.2%,#0b0 98.5%,#4b0 98.9%,#670 99.4%,#7e0 99.7%,#890"></i><i style="--g:#050,#140 24.1%,#300 32.5%,#6d0 40.9%,#a80 48.7%,#b30 53.7%,#a10 58.2%,#560 65.5%,#1f0 71.6%,#180 74.6%,#350 80.5%,#310 86.3%,#1f0 89.9%,#080 92.2%,#310 94.7%,#540 96.4%,#500 96.7%,#1a0 97.7%,#020 98%,#060 98.3%,#0b0 98.5%,#4b0 98.9%,#670 99.4%,#7e0 99.7%,#890"></i><i style="--g:#050,#140 24.3%,#310 32.7%,#6c0 40.6%,#ae0 48.7%,#bc0 53.7%,#ad0 58.2%,#750 64%,#2b0 71.2%,#1b0 74.5%,#3a0 80.5%,#350 86.2%,#230 89.8%,#060 92.3%,#2c0 94.9%,#520 96.5%,#370 97.1%,#040 97.9%,#010 98.2%,#0b0 98.5%,#4b0 98.9%,#670 99.4%,#7e0 99.7%,#890"></i><i style="--g:#050,#140 24.4%,#300 32.7%,#690 40.2%,#b60 49%,#c50 53.8%,#b70 58.5%,#830 64%,#2f0 71.8%,#210 74.8%,#430 80.3%,#3f0 86%,#290 89.8%,#050 92.5%,#270 95%,#500 96.5%,#350 97.1%,#080 97.7%,#010 98.2%,#0b0 98.5%,#4b0 98.9%,#670 99.4%,#7e0 99.7%,#890"></i><i style="--g:#050,#150 24.6%,#310 32.8%,#6a0 40.3%,#b70 49%,#c80 53.8%,#bb0 58.5%,#890 63.9%,#310 71.9%,#250 74.8%,#4c0 80.3%,#480 85.9%,#310 89.6%,#050 92.5%,#1b0 94.7%,#310 95.6%,#4f0 96.5%,#340 97.1%,#070 97.7%,#010 98.2%,#0b0 98.5%,#4b0 98.9%,#670 99.4%,#7e0 99.7%,#890"></i><i style="--g:#050,#140 24.4%,#300 32.7%,#6a0 40.3%,#b20 48.9%,#c10 53.7%,#b30 58.3%,#7d0 64%,#2e0 71.5%,#230 74.2%,#380 77.3%,#4f0 80.2%,#4b0 85.9%,#330 89.6%,#070 92.3%,#1d0 95.2%,#4e0 96.5%,#330 97.1%,#070 97.7%,#010 98.2%,#0b0 98.5%,#4b0 98.9%,#670 99.4%,#7e0 99.7%,#890"></i><i style="--g:#050,#140 24.3%,#310 32.7%,#6d0 40.8%,#ac0 48.7%,#b80 53.7%,#a80 58.2%,#6a0 64.5%,#270 71.2%,#1e0 73.9%,#390 77.8%,#4b0 80.3%,#470 85.9%,#300 89.6%,#0a0 92.2%,#260 95.3%,#4e0 96.5%,#330 97.1%,#070 97.7%,#010 98.2%,#0b0 98.5%,#4b0 98.9%,#670 99.4%,#7e0 99.7%,#890"></i><i style="--g:#050,#140 24.1%,#300 32.5%,#6f0 41.2%,#a60 48.7%,#af0 53.8%,#9b0 58.3%,#260 70.1%,#180 73.4%,#330 77.9%,#420 80.5%,#3e0 86%,#280 89.8%,#0d0 91.9%,#310 95.5%,#4f0 96.5%,#340 97.1%,#070 97.7%,#010 98.2%,#0b0 98.5%,#4b0 98.9%,#670 99.4%,#7e0 99.7%,#890"></i><i style="--g:#040,#130 24%,#300 32.5%,#770 42.4%,#a00 49%,#a40 54.1%,#890 58.8%,#250 68.9%,#130 72.8%,#2c0 77.9%,#390 80.6%,#340 86.3%,#220 89.8%,#100 91.6%,#3d0 95.6%,#510 96.5%,#360 97.1%,#040 97.9%,#010 98.2%,#0b0 98.5%,#4b0 98.9%,#670 99.4%,#7e0 99.7%,#890"></i><i style="--g:#040,#130 23.8%,#2f0 32.5%,#930 47.7%,#9b0 52.9%,#860 57.4%,#210 68.2%,#0f0 72.5%,#300 79.1%,#320 85.7%,#1e0 89.9%,#150 91.4%,#550 96.5%,#310 97.3%,#190 97.7%,#090 97.9%,#010 98.2%,#0b0 98.5%,#4b0 98.9%,#670 99.4%,#7e0 99.7%,#890"></i><i style="--g:#040,#120 24.1%,#2f0 33%,#890 47.7%,#900 53.1%,#790 57.6%,#1f0 67.4%,#0c0 71.9%,#2e0 78.5%,#360 80.9%,#310 86.3%,#1f0 89.9%,#1a0 91.1%,#5c0 96.5%,#3a0 97.3%,#250 97.7%,#060 98%,#010 98.2%,#0b0 98.5%,#4b0 98.9%,#670 99.4%,#7e0 99.7%,#890"></i><i style="--g:#040,#110 24.4%,#2f0 33.6%,#800 47.7%,#860 53.2%,#6d0 57.9%,#1c0 67%,#0b0 71.5%,#300 78.2%,#3b0 80.6%,#360 86.2%,#230 89.9%,#240 91.1%,#630 95.9%,#600 96.7%,#320 97.7%,#040 98.2%,#0b0 98.5%,#4b0 98.9%,#670 99.4%,#7e0 99.7%,#890"></i><i style="--g:#040,#110 24.7%,#2f0 34%,#7a0 47.8%,#7f0 53.4%,#650 58%,#1a0 66.7%,#0a0 71.2%,#300 77.8%,#3f0 80.5%,#3b0 86.2%,#2a0 90.5%,#690 95.2%,#6f0 96.4%,#600 97%,#3f0 97.7%,#110 98.2%,#0e0 98.5%,#340 98.8%,#4b0 98.9%,#670 99.4%,#7e0 99.7%,#890"></i><i style="--g:#040,#110 24.7%,#2e0 34%,#790 47.8%,#7d0 53.5%,#610 58.3%,#190 66.7%,#0a0 71.2%,#310 77.9%,#3f0 80.5%,#3a0 86.2%,#320 90.1%,#700 94.4%,#7d0 96.1%,#740 96.8%,#4c0 97.7%,#1e0 98.2%,#190 98.5%,#200 98.6%,#4b0 98.9%,#670 99.4%,#7e0 99.7%,#890"></i><i style="--g:#040,#110 24.7%,#2e0 34%,#790 47.8%,#7d0 53.5%,#610 58.3%,#190 66.7%,#0a0 71.3%,#300 78.5%,#390 80.9%,#340 86.5%,#380 88.7%,#480 90.5%,#7c0 94%,#8a0 96.1%,#800 96.8%,#590 97.7%,#2a0 98.2%,#270 98.6%,#4b0 98.9%,#670 99.4%,#7e0 99.7%,#890"></i><i style="--g:#040,#110 24.7%,#2e0 34%,#790 47.8%,#7e0 53.5%,#620 58.3%,#1a0 66.7%,#090 71.5%,#2f0 80.6%,#310 86.9%,#670 91.3%,#8b0 93.8%,#980 96.1%,#8d0 96.8%,#650 97.7%,#360 98.2%,#310 98.6%,#3b0 98.8%,#4d0 98.9%,#680 99.4%,#7e0 99.7%,#890"></i><i style="--g:#040,#110 24.6%,#2e0 33.7%,#7d0 47.8%,#820 53.4%,#680 58%,#1b0 66.8%,#090 71.9%,#270 80.9%,#2e0 85.9%,#610 89%,#860 92%,#9d0 94.1%,#a50 96.1%,#990 96.8%,#710 97.7%,#420 98.2%,#3b0 98.6%,#570 99.1%,#7f0 99.7%,#890"></i><i style="--g:#040,#120 24.3%,#2f0 33.3%,#840 47.7%,#8a0 53.2%,#710 57.9%,#1d0 67.1%,#090 72.4%,#220 81.1%,#270 83.8%,#3f0 86%,#730 88.6%,#960 91.9%,#ab0 93.8%,#b10 96.1%,#9e0 97%,#7c0 97.7%,#4c0 98.2%,#450 98.6%,#600 99.2%,#7f0 99.7%,#8a0"></i><i style="--g:#040,#120 24%,#2f0 32.8%,#8c0 47.7%,#930 53.1%,#7c0 57.6%,#1f0 67.6%,#0a0 72.7%,#210 81.2%,#270 83.3%,#560 86.2%,#8a0 88.6%,#ad0 92.3%,#ba0 94.1%,#bc0 96.1%,#a90 97%,#870 97.7%,#560 98.2%,#500 98.8%,#850 99.8%,#8a0"></i><i style="--g:#040,#130 23.8%,#2f0 32.5%,#920 47.7%,#990 52.9%,#840 57.4%,#200 68%,#0c0 73%,#220 81.1%,#260 82.9%,#4c0 84.5%,#6b0 86.2%,#9b0 88.3%,#be0 92.5%,#c80 94.3%,#c70 96.1%,#b20 97%,#900 97.7%,#5f0 98.2%,#570 98.8%,#700 99.4%,#860 99.8%,#8b0"></i><i style="--g:#040,#120 24%,#2f0 32.7%,#8f0 47.7%,#950 53.1%,#7f0 57.6%,#200 67.7%,#0b0 72.7%,#230 81.1%,#280 82.7%,#570 84.2%,#7d0 86.2%,#a80 88.1%,#d20 93.7%,#d00 96.1%,#bb0 97%,#970 97.7%,#660 98.2%,#5e0 98.8%,#730 99.4%,#870 99.8%,#8b0"></i><i style="--g:#040,#120 24.3%,#2f0 33.3%,#860 47.7%,#8c0 53.2%,#730 57.9%,#1e0 67.3%,#090 72.4%,#210 81.1%,#260 82.6%,#630 84.2%,#af0 87.8%,#c00 89.8%,#dc0 93.5%,#d80 96.1%,#c20 97%,#9e0 97.7%,#6d0 98.2%,#630 98.8%,#760 99.4%,#8c0"></i><i style="--g:#040,#110 24.6%,#2f0 33.7%,#7e0 47.7%,#840 53.2%,#6b0 57.9%,#1b0 67%,#080 72.4%,#240 82.4%,#6d0 84.2%,#b20 87.5%,#c90 90.1%,#e30 93.5%,#de0 96.1%,#c80 97%,#a40 97.7%,#720 98.2%,#680 98.8%,#780 99.4%,#8d0"></i><i style="--g:#040,#110 24.6%,#2e0 33.7%,#7c0 47.8%,#810 53.4%,#670 58%,#1a0 66.8%,#070 72.4%,#1d0 80.6%,#320 82.4%,#590 83.5%,#780 84.2%,#b50 87.4%,#e90 93.4%,#e30 96.1%,#cc0 97%,#a80 97.7%,#760 98.2%,#6b0 98.8%,#7a0 99.4%,#8e0"></i><i style="--g:#040,#110 24.4%,#2f0 33.6%,#800 47.7%,#850 53.2%,#6c0 57.9%,#1c0 67%,#0a0 72.2%,#110 77.6%,#350 81.1%,#560 82.9%,#870 84.4%,#b70 87.5%,#ed0 93.4%,#e70 96.1%,#cf0 97%,#ab0 97.7%,#790 98.2%,#6e0 98.8%,#7b0 99.4%,#8e0"></i><i style="--g:#040,#120 24.1%,#2f0 33%,#890 47.7%,#8f0 53.1%,#790 57.6%,#230 67%,#150 71.8%,#180 77%,#5b0 81.8%,#930 84.7%,#c80 89.3%,#ef0 93.4%,#ec0 95.9%,#d20 97%,#ad0 97.7%,#7b0 98.2%,#700 98.8%,#7d0 99.4%,#8e0"></i><i style="--g:#040,#130 24.1%,#300 32.5%,#720 41.7%,#a20 48.7%,#aa0 53.8%,#940 58.3%,#360 68.2%,#280 73.7%,#2b0 76.9%,#770 82.3%,#a40 86.6%,#f00 93.4%,#ee0 95.9%,#d30 97%,#ae0 97.7%,#7c0 98.2%,#710 98.8%,#7d0 99.4%,#8f0"></i><i style="--g:#050,#150 24.6%,#310 32.8%,#690 40.2%,#b70 49%,#c80 53.8%,#bb0 58.6%,#890 64.2%,#520 69.8%,#420 75.2%,#440 76.7%,#750 80.3%,#7d0 82.7%,#880 85.3%,#b70 88.7%,#f00 93.4%,#ee0 95.9%,#d40 97%,#af0 97.7%,#7c0 98.2%,#710 98.8%,#7d0 99.4%,#8f0"></i><i style="--g:#050,#160 24.9%,#320 33%,#670 39.9%,#c70 49.6%,#db0 54.3%,#d10 59.1%,#a30 64.2%,#700 69.4%,#5f0 74.9%,#620 76.9%,#7c0 79.6%,#760 82.1%,#6b0 83.6%,#860 86.2%,#a90 88.6%,#e30 92.2%,#ef0 93.4%,#ee0 95.9%,#d40 97%,#af0 97.7%,#7c0 98.2%,#710 98.8%,#7d0 99.4%,#8f0"></i><i style="--g:#050,#160 24.7%,#320 32.7%,#660 39.4%,#ce0 49.6%,#e20 54.1%,#d90 58.9%,#ae0 63.9%,#820 68.6%,#740 74.9%,#790 77.3%,#780 79.9%,#5a0 82.6%,#530 83.6%,#950 88.4%,#c70 90.7%,#ee0 93.2%,#ee0 95.9%,#d40 97%,#af0 97.7%,#7c0 98.2%,#710 98.8%,#7d0 99.4%,#8f0"></i><i style="--g:#050,#150 24.7%,#310 32.8%,#680 40%,#bd0 49.3%,#ce0 54.1%,#c10 59.2%,#7f0 67.6%,#7a0 75.4%,#740 78.2%,#430 82.3%,#3a0 83.3%,#790 87.8%,#820 88.4%,#c10 90.8%,#eb0 93.2%,#ee0 95.9%,#d30 97%,#ae0 97.7%,#7c0 98.2%,#710 98.8%,#7d0 99.4%,#8f0"></i><i style="--g:#050,#140 24.1%,#300 32.5%,#700 41.4%,#a40 48.7%,#ad0 53.8%,#970 58.6%,#620 65.5%,#650 70.1%,#6e0 76.9%,#240 83%,#540 86.3%,#6e0 88.4%,#bd0 91.1%,#e70 93.2%,#ec0 95.9%,#d20 97%,#ad0 97.7%,#7b0 98.2%,#700 98.8%,#7d0 99.4%,#8e0"></i><i style="--g:#030,#110 24.9%,#2e0 34.2%,#780 48%,#7c0 53.7%,#5f0 58.6%,#3d0 63.6%,#430 68.3%,#570 76.7%,#1e0 81.5%,#160 83%,#350 85.3%,#590 88.4%,#be0 91.6%,#e20 93.2%,#ea0 95.9%,#d00 97%,#ac0 97.7%,#790 98.2%,#6e0 98.8%,#7c0 99.4%,#8e0"></i><i style="--g:#020,#0d0 29.2%,#2c0 40.5%,#520 51.7%,#4e0 57.3%,#230 65%,#3a0 76.7%,#150 80.6%,#110 83.2%,#450 88.4%,#bf0 92%,#dc0 93.4%,#e80 95.9%,#ce0 97%,#a90 97.7%,#770 98.2%,#6c0 98.8%,#7b0 99.4%,#8e0"></i><i style="--g:#020,#0c0 30.1%,#2e0 43%,#460 53.1%,#3e0 58.2%,#130 65.9%,#200 76.9%,#110 79.9%,#150 84.2%,#330 88.4%,#880 90.8%,#cf0 93.1%,#e50 95.8%,#d10 96.8%,#a60 97.7%,#740 98.2%,#6a0 98.8%,#790 99.4%,#8d0"></i><i style="--g:#020,#0d0 29.2%,#2c0 40.6%,#510 51.7%,#4e0 57.3%,#0d0 67.9%,#140 79.6%,#1c0 87.2%,#240 88.4%,#640 90.4%,#bc0 92.8%,#d40 94.3%,#df0 95.9%,#c60 97%,#a20 97.7%,#700 98.2%,#660 98.8%,#770 99.4%,#8d0"></i><i style="--g:#030,#100 26.4%,#2d0 36.1%,#6b0 49.2%,#6d0 54.9%,#4f0 59.8%,#140 67.3%,#070 72.2%,#1a0 81.5%,#1a0 88.4%,#450 90.1%,#ae0 92.8%,#ca0 94.3%,#d90 95.9%,#c00 97%,#9d0 97.7%,#6b0 98.2%,#620 98.8%,#750 99.4%,#880 99.8%,#8c0"></i><i style="--g:#040,#110 24.4%,#2e0 33.6%,#7f0 47.7%,#850 53.2%,#6c0 57.9%,#1b0 67%,#080 72.2%,#1f0 81.2%,#1b0 88.9%,#350 90.1%,#aa0 93.1%,#d10 95.6%,#ca0 96.4%,#ba0 97%,#960 97.7%,#650 98.2%,#5d0 98.8%,#720 99.4%,#870 99.8%,#8b0"></i><i style="--g:#040,#120 24%,#2f0 32.8%,#8d0 47.7%,#940 53.1%,#7d0 57.6%,#200 67.6%,#0a0 72.7%,#210 81.2%,#1a0 88%,#1e0 89.6%,#3d0 90.7%,#9e0 93.2%,#ca0 95.8%,#b90 96.8%,#8f0 97.7%,#5f0 98.2%,#570 98.8%,#700 99.4%,#860 99.8%,#8b0"></i><i style="--g:#040,#130 24%,#300 32.5%,#7d0 43.3%,#9f0 49.6%,#9f0 54.7%,#7e0 59.5%,#240 68.6%,#0d0 73.6%,#200 81.4%,#190 88.1%,#1a0 89.9%,#4b0 91.4%,#930 93.4%,#c00 95.8%,#b10 96.8%,#870 97.7%,#570 98.2%,#510 98.8%,#850 99.8%,#8a0"></i><i style="--g:#050,#140 24.1%,#300 32.5%,#6e0 41.1%,#a70 48.7%,#b00 53.8%,#9d0 58.3%,#260 70.3%,#100 74.9%,#1f0 81.5%,#170 88.6%,#180 90.2%,#4d0 91.9%,#880 93.5%,#b60 95.8%,#a70 96.8%,#7f0 97.7%,#4e0 98.2%,#470 98.6%,#610 99.2%,#800 99.7%,#8a0"></i><i style="--g:#050,#140 24.3%,#310 32.7%,#6e0 40.9%,#aa0 48.7%,#b60 53.7%,#a50 58.2%,#630 64.8%,#240 71.3%,#120 75.5%,#1f0 81.4%,#180 88.3%,#140 90.4%,#3f0 91.9%,#7c0 93.7%,#ab0 95.8%,#9d0 96.8%,#750 97.7%,#450 98.2%,#3e0 98.6%,#5e0 99.2%,#7f0 99.7%,#8a0"></i><i style="--g:#040,#130 24.1%,#300 32.5%,#720 41.7%,#a20 48.7%,#aa0 53.8%,#940 58.3%,#250 69.5%,#100 74%,#240 81.1%,#1d0 87.5%,#140 90.7%,#3c0 92.2%,#760 94%,#9f0 95.9%,#920 96.8%,#6b0 97.7%,#3b0 98.2%,#350 98.6%,#560 99.1%,#7f0 99.7%,#890"></i><i style="--g:#040,#130 23.8%,#2f0 32.5%,#920 47.7%,#9a0 52.9%,#840 57.4%,#200 68%,#0d0 72.7%,#2c0 80.8%,#260 86.8%,#180 90.1%,#150 91.1%,#440 92.8%,#8f0 95.6%,#900 96.2%,#810 97%,#600 97.7%,#310 98.2%,#2c0 98.6%,#380 98.8%,#4c0 98.9%,#680 99.4%,#7e0 99.7%,#890"></i><i style="--g:#040,#120 24.3%,#2f0 33.3%,#850 47.7%,#8b0 53.2%,#720 57.9%,#1e0 67.1%,#0b0 71.8%,#2e0 78.7%,#350 81.4%,#2f0 86.5%,#1e0 89.9%,#130 91.3%,#330 92.6%,#860 95.8%,#7c0 96.8%,#550 97.7%,#260 98.2%,#240 98.6%,#4b0 98.9%,#670 99.4%,#7e0 99.7%,#890"></i><i style="--g:#040,#110 24.4%,#2e0 33.6%,#7f0 47.7%,#850 53.2%,#6c0 57.9%,#1b0 67%,#0b0 71.5%,#300 78.2%,#3b0 80.6%,#360 86.2%,#240 89.8%,#120 91.6%,#580 94.4%,#7b0 95.9%,#710 96.8%,#490 97.7%,#1b0 98.2%,#160 98.5%,#1f0 98.6%,#4b0 98.9%,#670 99.4%,#7e0 99.7%,#890"></i><i style="--g:#040,#110 24.4%,#2e0 33.4%,#810 47.7%,#860 53.2%,#6d0 57.9%,#1c0 67%,#0b0 71.5%,#300 78.1%,#3c0 80.5%,#370 86.2%,#240 89.8%,#0f0 91.7%,#480 94.3%,#6f0 95.9%,#6a0 96.7%,#3e0 97.7%,#0f0 98.2%,#0d0 98.5%,#340 98.8%,#4b0 98.9%,#670 99.4%,#7e0 99.7%,#890"></i><i style="--g:#040,#110 24.3%,#2e0 33.3%,#820 47.7%,#880 53.2%,#6f0 57.9%,#1c0 67.1%,#0b0 71.6%,#2f0 78.4%,#380 80.8%,#330 86.3%,#220 89.8%,#0c0 91.9%,#440 94.6%,#630 95.9%,#600 96.7%,#320 97.7%,#040 98.2%,#0b0 98.5%,#4b0 98.9%,#670 99.4%,#7e0 99.7%,#890"></i><i style="--g:#040,#120 24.4%,#2f0 33.4%,#820 47.7%,#880 53.2%,#6f0 57.9%,#1c0 67.1%,#0b0 71.8%,#2f0 79.1%,#300 85.9%,#1d0 89.9%,#0a0 92%,#3d0 94.7%,#590 95.9%,#5d0 96.5%,#3c0 97.3%,#270 97.7%,#080 98%,#010 98.2%,#0b0 98.5%,#4b0 98.9%,#670 99.4%,#7e0 99.7%,#890"></i><i style="--g:#030,#110 24.7%,#2e0 34%,#790 47.8%,#7d0 53.5%,#620 58.2%,#190 66.7%,#090 71.5%,#320 80.6%,#2d0 86.5%,#1d0 89.9%,#080 92.2%,#330 94.7%,#500 96.1%,#570 96.5%,#330 97.3%,#1c0 97.7%,#020 98%,#060 98.3%,#0b0 98.5%,#4b0 98.9%,#670 99.4%,#7e0 99.7%,#890"></i><i style="--g:#030,#0f0 26.7%,#2d0 36.6%,#680 49.5%,#6a0 55.2%,#4a0 60.3%,#130 67.4%,#090 71.5%,#320 79.1%,#350 85.4%,#210 89.8%,#060 92.3%,#2d0 94.9%,#530 96.5%,#2c0 97.3%,#040 97.9%,#010 98.2%,#0b0 98.5%,#4b0 98.9%,#670 99.4%,#7e0 99.7%,#890"></i><i style="--g:#020,#0e0 28.8%,#2c0 39.6%,#580 51.3%,#560 57%,#230 64.5%,#090 69.8%,#140 73.3%,#3f0 80.3%,#3a0 86.2%,#260 89.8%,#050 92.5%,#250 94.9%,#500 96.5%,#350 97.1%,#080 97.7%,#010 98.2%,#0b0 98.5%,#4b0 98.9%,#670 99.4%,#7e0 99.7%,#890"></i><i style="--g:#020,#0d0 29.5%,#2d0 41.2%,#4e0 52%,#4a0 57.4%,#0b0 67.9%,#0d0 71.6%,#390 77.9%,#490 80.3%,#450 85.9%,#2f0 89.6%,#030 92.5%,#1e0 94.9%,#370 95.8%,#4f0 96.5%,#340 97.1%,#070 97.7%,#010 98.2%,#0b0 98.5%,#4b0 98.9%,#670 99.4%,#7e0 99.7%,#890"></i><i style="--g:#020,#0d0 29.5%,#2c0 41.2%,#4e0 52%,#490 57.4%,#0b0 67.9%,#0e0 71.6%,#3a0 77.6%,#4e0 80.2%,#4a0 85.9%,#320 89.6%,#030 92.6%,#1a0 95%,#4e0 96.5%,#330 97.1%,#070 97.7%,#010 98.2%,#0b0 98.5%,#4b0 98.9%,#670 99.4%,#7e0 99.7%,#890"></i><i style="--g:#020,#0d0 29.2%,#2c0 40.6%,#510 51.9%,#4d0 57.3%,#0c0 68%,#0e0 71.6%,#3a0 77.8%,#4c0 80.3%,#480 85.9%,#310 89.6%,#020 92.6%,#150 95%,#4e0 96.5%,#330 97.1%,#070 97.7%,#010 98.2%,#0b0 98.5%,#4b0 98.9%,#670 99.4%,#7e0 99.7%,#890"></i><i style="--g:#020,#0e0 28.3%,#2c0 39%,#5b0 51%,#590 56.7%,#2f0 63%,#0b0 68.9%,#0f0 72.1%,#390 78.4%,#440 80.5%,#400 86%,#290 89.8%,#030 92.5%,#140 95.2%,#4e0 96.5%,#330 97.1%,#070 97.7%,#010 98.2%,#0b0 98.5%,#4b0 98.9%,#670 99.4%,#7e0 99.7%,#890"></i><i style="--g:#030,#0f0 26.7%,#2d0 36.6%,#690 49.5%,#6a0 55.2%,#4a0 60.3%,#130 67.4%,#0a0 71.5%,#340 78.7%,#3b0 80.9%,#370 86.2%,#240 89.8%,#050 92.5%,#180 95.2%,#4e0 96.5%,#330 97.1%,#070 97.7%,#010 98.2%,#0b0 98.5%,#4b0 98.9%,#670 99.4%,#7e0 99.7%,#890"></i><i style="--g:#030,#110 25%,#2e0 34.3%,#770 48%,#7b0 53.7%,#5f0 58.5%,#190 66.7%,#090 71.3%,#300 78.7%,#370 81.1%,#320 86.3%,#210 89.8%,#070 92.3%,#200 95.3%,#4e0 96.5%,#330 97.1%,#070 97.7%,#010 98.2%,#0b0 98.5%,#4b0 98.9%,#670 99.4%,#7e0 99.7%,#890"></i><i style="--g:#040,#120 24.3%,#2f0 33.3%,#860 47.7%,#8c0 53.2%,#730 57.9%,#1e0 67.3%,#0c0 71.8%,#300 78.4%,#390 80.8%,#340 86.3%,#230 89.8%,#0a0 92.2%,#2b0 95.5%,#4e0 96.5%,#330 97.1%,#070 97.7%,#010 98.2%,#0b0 98.5%,#4b0 98.9%,#670 99.4%,#7e0 99.7%,#890"></i><i style="--g:#040,#130 24%,#300 32.7%,#960 47.8%,#9e0 53.1%,#890 57.6%,#220 68.5%,#110 72.4%,#310 77.8%,#400 80.5%,#3c0 86%,#270 89.8%,#0d0 91.9%,#320 95.5%,#4f0 96.5%,#340 97.1%,#070 97.7%,#010 98.2%,#0b0 98.5%,#4b0 98.9%,#670 99.4%,#7e0 99.7%,#890"></i><i style="--g:#050,#140 24.1%,#300 32.5%,#6e0 41.1%,#a60 48.7%,#af0 53.8%,#9c0 58.3%,#260 70.1%,#190 73.3%,#330 77.5%,#460 80.3%,#420 86%,#2b0 89.8%,#120 91.7%,#3e0 95.6%,#520 96.5%,#370 97.1%,#040 97.9%,#010 98.2%,#0b0 98.5%,#4b0 98.9%,#670 99.4%,#7e0 99.7%,#890"></i><i style="--g:#050,#140 24.4%,#310 32.7%,#6a0 40.3%,#b20 48.9%,#c00 53.7%,#b30 58.2%,#7f0 63.7%,#2e0 71.3%,#210 74.3%,#3a0 78.1%,#480 80.3%,#440 85.9%,#2e0 89.6%,#170 91.4%,#560 96.5%,#310 97.3%,#190 97.7%,#020 98%,#060 98.3%,#0b0 98.5%,#4b0 98.9%,#670 99.4%,#7e0 99.7%,#890"></i><i style="--g:#050,#140 24.4%,#300 32.7%,#6a0 40.3%,#b30 48.9%,#c20 53.7%,#b40 58.3%,#800 63.9%,#2d0 71.6%,#200 74.6%,#430 80.3%,#3f0 86%,#290 89.8%,#1c0 91.1%,#5c0 96.5%,#3b0 97.3%,#260 97.7%,#070 98%,#010 98.2%,#0b0 98.5%,#4b0 98.9%,#670 99.4%,#7e0 99.7%,#890"></i><i style="--g:#050,#140 24.1%,#300 32.5%,#6d0 40.9%,#a80 48.7%,#b30 53.7%,#a10 58.2%,#560 65.5%,#1f0 71.6%,#190 74.5%,#3a0 80.5%,#350 86.2%,#210 90.8%,#630 95.9%,#600 96.7%,#320 97.7%,#040 98.2%,#0b0 98.5%,#4b0 98.9%,#670 99.4%,#7e0 99.7%,#890"></i><i style="--g:#040,#130 24%,#2f0 32.5%,#970 48%,#a00 53.2%,#8a0 57.7%,#220 68.6%,#0f0 72.8%,#2c0 79.1%,#2c0 86.2%,#250 90.2%,#670 95%,#6f0 96.2%,#670 96.8%,#3f0 97.7%,#110 98.2%,#0e0 98.5%,#340 98.8%,#4b0 98.9%,#670 99.4%,#7e0 99.7%,#890"></i><i style="--g:#040,#120 24.1%,#2f0 33.1%,#870 47.7%,#8d0 53.1%,#770 57.6%,#1e0 67.3%,#0b0 72.1%,#2a0 80.8%,#250 87.1%,#2d0 89.9%,#6e0 94.3%,#7c0 96.1%,#730 96.8%,#4c0 97.7%,#1d0 98.2%,#180 98.5%,#200 98.6%,#4b0 98.9%,#670 99.4%,#7e0 99.7%,#890"></i><i style="--g:#030,#110 24.7%,#2e0 34%,#780 47.8%,#7d0 53.5%,#620 58.2%,#190 66.7%,#080 71.6%,#2a0 80.8%,#290 87.7%,#470 90.5%,#7b0 94%,#890 96.1%,#800 96.8%,#580 97.7%,#290 98.2%,#260 98.6%,#4b0 98.9%,#670 99.4%,#7e0 99.7%,#890"></i><i style="--g:#030,#100 26.4%,#2d0 36.1%,#6b0 49.2%,#6d0 54.9%,#4f0 59.8%,#140 67.3%,#080 71.6%,#2d0 80.6%,#2f0 86.9%,#630 91.1%,#890 93.8%,#960 96.1%,#8c0 96.8%,#640 97.7%,#350 98.2%,#300 98.6%,#3a0 98.8%,#4d0 98.9%,#680 99.4%,#7e0 99.7%,#890"></i><i style="--g:#020,#0e0 27.7%,#2c0 38.1%,#5f0 50.4%,#5f0 56.1%,#3b0 61.6%,#0e0 68.2%,#0a0 71.9%,#2f0 80.6%,#350 86.3%,#5f0 89.2%,#8c0 92.6%,#a60 95.8%,#980 96.8%,#700 97.7%,#400 98.2%,#3a0 98.6%,#570 99.1%,#7f0 99.7%,#890"></i><i style="--g:#020,#0e0 27.9%,#2c0 38.4%,#5e0 50.5%,#5d0 56.2%,#380 61.9%,#0e0 68.3%,#0a0 71.9%,#2e0 80.6%,#350 84.8%,#440 86.3%,#710 88.7%,#940 91.9%,#a90 93.8%,#af0 96.1%,#9d0 97%,#7b0 97.7%,#4b0 98.2%,#430 98.6%,#600 99.2%,#7f0 99.7%,#8a0"></i><i style="--g:#030,#0f0 26.8%,#2d0 36.7%,#670 49.5%,#690 55.2%,#490 60.3%,#130 67.4%,#080 71.8%,#290 80.8%,#2e0 83.5%,#4f0 86%,#860 88.6%,#aa0 92.3%,#b80 94.1%,#bb0 96.1%,#a70 97%,#850 97.7%,#540 98.2%,#4e0 98.8%,#850 99.8%,#8a0"></i><i style="--g:#030,#100 25.5%,#2d0 34.9%,#720 48.4%,#760 54.1%,#590 58.9%,#180 66.8%,#070 71.9%,#220 81.1%,#280 83%,#490 84.5%,#660 86.2%,#980 88.4%,#bb0 92.5%,#c50 94.4%,#c50 96.1%,#b00 97%,#8e0 97.7%,#5d0 98.2%,#550 98.8%,#6f0 99.4%,#810 99.7%,#8b0"></i><i style="--g:#040,#110 24.6%,#2e0 33.7%,#7c0 47.8%,#800 53.4%,#660 58%,#1a0 66.8%,#070 72.2%,#1b0 81.5%,#220 82.7%,#530 84.2%,#790 86.2%,#a70 88.3%,#c90 92.6%,#d10 95.6%,#c00 96.8%,#950 97.7%,#640 98.2%,#5c0 98.8%,#720 99.4%,#870 99.8%,#8b0"></i><i style="--g:#040,#110 24.6%,#2e0 33.7%,#7d0 47.8%,#820 53.4%,#680 58%,#1b0 66.8%,#070 72.5%,#1b0 82.4%,#600 84.2%,#980 86.8%,#b90 88.9%,#d10 92.3%,#d90 93.8%,#d50 96.1%,#c00 97%,#9c0 97.7%,#6b0 98.2%,#610 98.8%,#750 99.4%,#880 99.8%,#8c0"></i><i style="--g:#040,#110 24.6%,#2e0 33.7%,#7c0 47.8%,#810 53.4%,#670 58%,#1a0 66.8%,#060 72.5%,#1b0 82.3%,#450 83.3%,#6b0 84.2%,#b00 87.5%,#c60 89.9%,#e10 93.5%,#dc0 96.1%,#c60 97%,#a10 97.7%,#700 98.2%,#660 98.8%,#770 99.4%,#8d0"></i><i style="--g:#040,#110 24.7%,#2e0 33.9%,#7b0 47.8%,#7f0 53.4%,#660 58%,#1a0 66.7%,#060 72.4%,#1d0 81.1%,#310 82.6%,#750 84.2%,#b40 87.4%,#e70 93.4%,#e10 96.1%,#ca0 97%,#a60 97.7%,#740 98.2%,#690 98.8%,#790 99.4%,#8d0"></i><i style="--g:#040,#110 24.6%,#2e0 33.7%,#7c0 47.8%,#800 53.4%,#660 58%,#1b0 66.7%,#090 71.9%,#140 78.1%,#360 81.5%,#550 83%,#810 84.2%,#b60 87.5%,#eb0 93.4%,#e50 96.1%,#ce0 97%,#a90 97.7%,#770 98.2%,#6c0 98.8%,#7a0 99.4%,#8e0"></i><i style="--g:#040,#120 24.1%,#2f0 33.1%,#870 47.7%,#8e0 53.1%,#770 57.6%,#220 67%,#130 71.9%,#160 77%,#490 81.1%,#770 83.5%,#8f0 84.5%,#b70 87.8%,#ed0 93.4%,#ea0 95.9%,#d00 97%,#ab0 97.7%,#790 98.2%,#6e0 98.8%,#7c0 99.4%,#8e0"></i><i style="--g:#040,#130 24%,#300 32.5%,#750 42.1%,#a10 49%,#a60 54.1%,#8c0 58.8%,#340 67.9%,#240 73.4%,#260 76.9%,#920 84.7%,#ab0 86.9%,#ee0 93.4%,#ec0 95.9%,#d10 97%,#ad0 97.7%,#7a0 98.2%,#6f0 98.8%,#7c0 99.4%,#8e0"></i><i style="--g:#050,#140 24.4%,#300 32.7%,#6a0 40.3%,#b20 48.9%,#c10 53.7%,#b30 58.3%,#810 63.9%,#4d0 69.4%,#3c0 75.2%,#3f0 76.9%,#750 80.8%,#900 85.7%,#ee0 93.1%,#ed0 95.9%,#d20 97%,#ad0 97.7%,#7b0 98.2%,#700 98.8%,#7d0 99.4%,#8e0"></i><i style="--g:#050,#160 24.9%,#310 33%,#660 39.9%,#c50 49.6%,#d80 54.3%,#ce0 59.1%,#a00 64.2%,#6c0 69.5%,#590 75.1%,#5b0 76.9%,#7b0 79.9%,#790 82.3%,#730 83.8%,#8a0 86.2%,#ad0 88.6%,#ee0 93.1%,#ed0 95.9%,#d20 97%,#ad0 97.7%,#7b0 98.2%,#700 98.8%,#7d0 99.4%,#8e0"></i><i style="--g:#050,#160 24.7%,#320 32.7%,#660 39.4%,#cd0 49.6%,#e10 54.1%,#d80 59.1%,#a80 64.3%,#7f0 68.9%,#700 75.5%,#750 77.2%,#7b0 79.7%,#650 82.4%,#5c0 83.6%,#860 86.8%,#9b0 88.4%,#cb0 90.8%,#ed0 93.4%,#ed0 95.9%,#d20 97%,#ad0 97.7%,#7b0 98.2%,#700 98.8%,#7d0 99.4%,#8e0"></i><i style="--g:#050,#150 24.6%,#310 32.8%,#680 40%,#bb0 49.2%,#cd0 54%,#c00 59.1%,#7f0 67.4%,#7b0 76.7%,#700 79.4%,#420 83.3%,#820 88%,#8f0 88.6%,#cc0 91.3%,#eb0 93.4%,#ed0 95.9%,#d20 97%,#ad0 97.7%,#7b0 98.2%,#700 98.8%,#7c0 99.4%,#8e0"></i><i style="--g:#040,#140 24.1%,#300 32.5%,#710 41.5%,#a30 48.7%,#ab0 53.8%,#940 58.8%,#650 65%,#680 69.4%,#720 77%,#2b0 83%,#760 88.4%,#bd0 91%,#e80 93.2%,#ec0 95.9%,#d10 97%,#ac0 97.7%,#7a0 98.2%,#6f0 98.8%,#7c0 99.4%,#8e0"></i><i style="--g:#040,#110 24.6%,#2e0 33.7%,#7e0 47.8%,#820 53.4%,#680 58.2%,#420 63.4%,#480 67.9%,#600 76.7%,#1b0 82.6%,#220 83.5%,#3c0 85.3%,#620 88.4%,#c20 91.6%,#e30 93.2%,#ea0 95.9%,#d00 97%,#ab0 97.7%,#790 98.2%,#6e0 98.8%,#7b0 99.4%,#8e0"></i><i style="--g:#020,#0e0 28.3%,#2c0 39%,#5b0 51%,#590 56.7%,#290 64.9%,#440 76.7%,#1c0 80.6%,#160 83.2%,#4e0 88.4%,#bf0 91.9%,#de0 93.4%,#e80 95.9%,#ce0 97%,#a90 97.7%,#770 98.2%,#6c0 98.8%,#7a0 99.4%,#8e0"></i><i style="--g:#020,#0c0 30.3%,#2e0 43.6%,#440 53.5%,#3a0 58.5%,#150 65.5%,#290 76.9%,#170 79.7%,#180 83.9%,#3b0 88.4%,#c00 92.3%,#d60 93.4%,#e40 95.9%,#ca0 97%,#a60 97.7%,#740 98.2%,#6a0 98.8%,#790 99.4%,#8d0"></i><i style="--g:#020,#0c0 30.3%,#2e0 43.5%,#450 53.4%,#3c0 58.3%,#0c0 66.8%,#150 77.2%,#1a0 85.7%,#2b0 88.4%,#6d0 90.4%,#c10 92.8%,#d80 94.4%,#e00 95.9%,#c70 97%,#a20 97.7%,#710 98.2%,#670 98.8%,#770 99.4%,#8d0"></i><i style="--g:#020,#0e0 27.7%,#2c0 38.1%,#5f0 50.4%,#5f0 56.1%,#3b0 61.6%,#0e0 68.2%,#080 73%,#140 82.9%,#1b0 88.3%,#540 90.2%,#b40 92.8%,#ce0 94.3%,#da0 95.9%,#c20 97%,#9e0 97.7%,#6c0 98.2%,#630 98.8%,#750 99.4%,#880 99.8%,#8c0"></i><i style="--g:#030,#110 24.9%,#2e0 34.2%,#780 48%,#7b0 53.7%,#5f0 58.5%,#190 66.7%,#060 72.4%,#150 82.3%,#150 88.4%,#3d0 90.1%,#ab0 92.9%,#cf0 95.2%,#d40 95.9%,#bc0 97%,#980 97.7%,#670 98.2%,#5e0 98.8%,#730 99.4%,#870 99.8%,#8c0"></i><i style="--g:#040,#120 24.3%,#2e0 33.3%,#840 47.7%,#8a0 53.2%,#710 57.9%,#1d0 67.1%,#080 72.7%,#180 82%,#160 88.9%,#340 90.2%,#a50 93.2%,#cd0 95.8%,#bc0 96.8%,#920 97.7%,#610 98.2%,#590 98.8%,#710 99.4%,#860 99.8%,#8b0"></i><i style="--g:#040,#120 24%,#2f0 32.8%,#8d0 47.7%,#930 53.1%,#7d0 57.6%,#200 67.6%,#0a0 72.8%,#1e0 81.4%,#190 89.5%,#2c0 90.4%,#970 93.2%,#c40 95.8%,#b40 96.8%,#8b0 97.7%,#5a0 98.2%,#530 98.8%,#860 99.8%,#8a0"></i><i style="--g:#040,#130 23.8%,#2f0 32.5%,#930 47.7%,#9b0 52.9%,#860 57.4%,#210 68.2%,#0c0 73%,#250 80.9%,#1f0 87.4%,#1b0 90.1%,#4a0 91.6%,#8b0 93.4%,#ba0 95.8%,#ab0 96.8%,#820 97.7%,#520 98.2%,#4d0 98.8%,#6c0 99.4%,#800 99.7%,#8a0"></i><i style="--g:#040,#120 23.8%,#2f0 32.5%,#910 47.7%,#980 53.1%,#820 57.6%,#210 67.9%,#0d0 72.5%,#2b0 80.8%,#260 86.8%,#1a0 90.4%,#410 91.7%,#810 93.5%,#b00 95.8%,#a20 96.8%,#790 97.7%,#490 98.2%,#420 98.6%,#5f0 99.2%,#7f0 99.7%,#8a0"></i><i style="--g:#040,#120 24.1%,#2f0 33%,#880 47.7%,#8f0 53.1%,#780 57.6%,#1e0 67.4%,#0b0 72.1%,#2d0 80.8%,#280 86.8%,#190 90.7%,#440 92.2%,#7a0 93.8%,#a50 95.9%,#980 96.8%,#700 97.7%,#400 98.2%,#3a0 98.6%,#570 99.1%,#7f0 99.7%,#890"></i><i style="--g:#040,#110 24.4%,#2e0 33.6%,#7f0 47.7%,#850 53.2%,#6c0 57.9%,#1b0 67%,#090 71.8%,#2c0 80.8%,#260 86.8%,#180 90.1%,#170 91%,#470 92.6%,#890 95%,#9a0 95.9%,#8d0 96.8%,#660 97.7%,#360 98.2%,#310 98.6%,#3b0 98.8%,#4d0 98.9%,#680 99.4%,#7e0 99.7%,#890"></i><i style="--g:#030,#110 25.2%,#2e0 34.6%,#760 48.1%,#790 53.8%,#5d0 58.6%,#180 66.8%,#080 71.8%,#290 80.8%,#230 86.9%,#150 90.2%,#130 91.1%,#3f0 92.8%,#8d0 95.8%,#820 96.8%,#5b0 97.7%,#2c0 98.2%,#280 98.6%,#4c0 98.9%,#670 99.4%,#7e0 99.7%,#890"></i><i style="--g:#030,#100 26.4%,#2d0 36.1%,#6b0 49.2%,#6d0 54.9%,#4f0 59.8%,#140 67.3%,#080 71.8%,#280 80.8%,#220 87.1%,#140 90.2%,#100 91.3%,#380 92.9%,#820 95.9%,#770 96.8%,#500 97.7%,#210 98.2%,#1c0 98.5%,#220 98.6%,#4b0 98.9%,#670 99.4%,#7e0 99.7%,#890"></i><i style="--g:#020,#0e0 27.7%,#2c0 38.1%,#5f0 50.4%,#5f0 56.1%,#3b0 61.6%,#0e0 68.2%,#090 71.9%,#2c0 80.6%,#270 86.8%,#180 90.1%,#0f0 91.6%,#760 95.9%,#700 96.7%,#450 97.7%,#160 98.2%,#120 98.5%,#1e0 98.6%,#4b0 98.9%,#670 99.4%,#7e0 99.7%,#890"></i><i style="--g:#020,#0e0 28.9%,#2c0 39.9%,#560 51.4%,#550 57%,#250 64%,#090 69.7%,#100 73.1%,#350 80.5%,#300 86.3%,#1e0 89.9%,#0d0 91.7%,#400 94.1%,#6b0 95.9%,#660 96.7%,#390 97.7%,#0b0 98.2%,#0c0 98.5%,#4b0 98.9%,#670 99.4%,#7e0 99.7%,#890"></i><i style="--g:#020,#0e0 28.9%,#2c0 39.9%,#560 51.4%,#540 57%,#240 64.2%,#090 69.7%,#120 73%,#3f0 80.3%,#3a0 86.2%,#260 89.8%,#0c0 91.9%,#360 94.1%,#600 95.9%,#620 96.5%,#420 97.3%,#2e0 97.7%,#010 98.2%,#0b0 98.5%,#4b0 98.9%,#670 99.4%,#7e0 99.7%,#890"></i><i style="--g:#020,#0e0 28.3%,#2c0 39%,#5b0 51%,#590 56.7%,#2f0 63%,#0b0 68.9%,#0f0 72.1%,#3a0 78.4%,#450 80.5%,#410 86%,#2a0 89.8%,#0a0 92.2%,#400 95%,#560 96.1%,#5b0 96.5%,#390 97.3%,#230 97.7%,#040 98%,#010 98.2%,#0b0 98.5%,#4b0 98.9%,#670 99.4%,#7e0 99.7%,#890"></i><i style="--g:#020,#0e0 27.6%,#2c0 37.9%,#600 50.4%,#600 56.1%,#3a0 61.8%,#0f0 68.2%,#0c0 71.5%,#370 77.9%,#460 80.3%,#410 86%,#2a0 89.8%,#080 92.2%,#2d0 94.6%,#540 96.4%,#500 96.7%,#180 97.7%,#090 97.9%,#010 98.2%,#0b0 98.5%,#4b0 98.9%,#670 99.4%,#7e0 99.7%,#890"></i><i style="--g:#030,#0f0 26.8%,#2d0 36.9%,#660 49.6%,#680 55.3%,#480 60.4%,#130 67.4%,#0a0 71.3%,#340 78.1%,#410 80.5%,#3c0 86%,#270 89.8%,#060 92.3%,#2b0 94.9%,#520 96.5%,#370 97.1%,#040 97.9%,#010 98.2%,#0b0 98.5%,#4b0 98.9%,#670 99.4%,#7e0 99.7%,#890"></i><i style="--g:#030,#100 26.1%,#2d0 35.8%,#6d0 49%,#6f0 54.7%,#510 59.7%,#150 67.1%,#090 71.3%,#310 78.5%,#3a0 80.8%,#350 86.3%,#230 89.8%,#050 92.5%,#260 95%,#500 96.5%,#340 97.1%,#070 97.7%,#010 98.2%,#0b0 98.5%,#4b0 98.9%,#670 99.4%,#7e0 99.7%,#890"></i><i style="--g:#030,#100 25.3%,#2d0 34.8%,#740 48.4%,#770 54.1%,#5a0 58.9%,#180 66.8%,#090 71.3%,#2f0 78.7%,#360 81.2%,#310 86.5%,#1f0 89.9%,#030 92.5%,#1c0 94.9%,#300 95.6%,#4e0 96.5%,#330 97.1%,#070 97.7%,#010 98.2%,#0b0 98.5%,#4b0 98.9%,#670 99.4%,#7e0 99.7%,#890"></i><i style="--g:#040,#110 24.7%,#2e0 34%,#7a0 47.8%,#7e0 53.4%,#650 58%,#1a0 66.7%,#0a0 71.3%,#300 78.4%,#390 80.8%,#340 86.3%,#230 89.8%,#030 92.6%,#190 95%,#4e0 96.5%,#330 97.1%,#070 97.7%,#010 98.2%,#0b0 98.5%,#4b0 98.9%,#670 99.4%,#7e0 99.7%,#890"></i><i style="--g:#040,#110 24.6%,#2f0 33.7%,#7e0 47.7%,#840 53.2%,#6b0 57.9%,#1b0 67%,#0b0 71.3%,#320 77.8%,#410 80.3%,#3d0 86%,#280 89.8%,#020 92.6%,#140 95%,#4e0 96.5%,#330 97.1%,#070 97.7%,#010 98.2%,#0b0 98.5%,#4b0 98.9%,#670 99.4%,#7e0 99.7%,#890"></i><i style="--g:#040,#110 24.4%,#2e0 33.4%,#810 47.7%,#870 53.2%,#6e0 57.9%,#1d0 67%,#0c0 71.3%,#360 77.5%,#4a0 80.3%,#460 85.9%,#300 89.6%,#030 92.5%,#140 95.2%,#4e0 96.5%,#330 97.1%,#070 97.7%,#010 98.2%,#0b0 98.5%,#4b0 98.9%,#670 99.4%,#7e0 99.7%,#890"></i><i style="--g:#040,#120 24.3%,#2f0 33.3%,#840 47.7%,#8a0 53.2%,#710 57.9%,#1d0 67.1%,#0d0 71.3%,#370 77.2%,#4f0 80.2%,#4a0 85.9%,#320 89.6%,#050 92.5%,#170 95.2%,#4e0 96.5%,#330 97.1%,#070 97.7%,#010 98.2%,#0b0 98.5%,#4b0 98.9%,#670 99.4%,#7e0 99.7%,#890"></i><i style="--g:#040,#120 24.1%,#2f0 33.1%,#870 47.7%,#8d0 53.1%,#760 57.6%,#1e0 67.3%,#0e0 71.5%,#360 77.3%,#4c0 80.2%,#480 85.9%,#310 89.6%,#070 92.3%,#200 95.3%,#4e0 96.5%,#330 97.1%,#070 97.7%,#010 98.2%,#0b0 98.5%,#4b0 98.9%,#670 99.4%,#7e0 99.7%,#890"></i><i style="--g:#040,#120 24.1%,#2f0 33%,#890 47.7%,#900 53.1%,#790 57.6%,#1f0 67.4%,#0e0 71.6%,#320 77.6%,#430 80.3%,#3f0 86%,#290 89.8%,#0a0 92.2%,#2a0 95.5%,#4e0 96.5%,#330 97.1%,#070 97.7%,#010 98.2%,#0b0 98.5%,#4b0 98.9%,#670 99.4%,#7e0 99.7%,#890"></i><i style="--g:#040,#120 24.1%,#2f0 33%,#8a0 47.7%,#910 53.1%,#7a0 57.6%,#1e0 67.6%,#0d0 71.9%,#300 78.4%,#3a0 80.8%,#350 86.3%,#230 89.8%,#0d0 91.9%,#310 95.5%,#4f0 96.5%,#340 97.1%,#070 97.7%,#010 98.2%,#0b0 98.5%,#4b0 98.9%,#670 99.4%,#7e0 99.7%,#890"></i><i style="--g:#040,#120 24.1%,#2f0 33.1%,#870 47.7%,#8d0 53.1%,#760 57.6%,#1e0 67.3%,#0c0 71.9%,#2f0 79%,#340 83%,#2c0 87.2%,#1e0 89.9%,#100 91.6%,#3d0 95.6%,#510 96.5%,#360 97.1%,#040 97.9%,#010 98.2%,#0b0 98.5%,#4b0 98.9%,#670 99.4%,#7e0 99.7%,#890"></i><i style="--g:#040,#110 24.4%,#2e0 33.4%,#810 47.7%,#870 53.2%,#6e0 57.9%,#1c0 67%,#0b0 71.6%,#2e0 78.8%,#340 81.8%,#2e0 86.6%,#1e0 89.9%,#150 91.4%,#550 96.5%,#310 97.3%,#180 97.7%,#090 97.9%,#010 98.2%,#0b0 98.5%,#4b0 98.9%,#670 99.4%,#7e0 99.7%,#890"></i><i style="--g:#040,#110 24.7%,#2e0 33.9%,#7b0 47.8%,#800 53.4%,#660 58%,#1a0 66.7%,#0a0 71.3%,#2f0 78.4%,#390 80.8%,#340 86.3%,#230 89.8%,#1a0 91.1%,#5b0 96.5%,#3a0 97.3%,#240 97.7%,#060 98%,#010 98.2%,#0b0 98.5%,#4b0 98.9%,#670 99.4%,#7e0 99.7%,#890"></i><i style="--g:#030,#100 25.9%,#2d0 35.5%,#6e0 48.7%,#720 54.4%,#550 59.2%,#160 67%,#0a0 71.3%,#330 78.2%,#3e0 80.5%,#390 86.2%,#260 89.8%,#220 91%,#620 95.9%,#5f0 96.7%,#310 97.7%,#030 98.2%,#0b0 98.5%,#4b0 98.9%,#670 99.4%,#7e0 99.7%,#890"></i><i style="--g:#020,#0e0 28%,#2c0 38.5%,#5d0 50.7%,#5c0 56.4%,#350 62.2%,#0d0 68.5%,#0c0 71.8%,#370 78.7%,#3f0 80.8%,#3a0 86.2%,#290 90.5%,#690 95.3%,#6e0 96.5%,#590 97.1%,#3e0 97.7%,#0f0 98.2%,#0d0 98.5%,#340 98.8%,#4b0 98.9%,#670 99.4%,#7e0 99.7%,#890"></i><i style="--g:#020,#0d0 29.2%,#2c0 40.6%,#510 51.9%,#4d0 57.3%,#0b0 68%,#0a0 71.6%,#350 79%,#3a0 81.8%,#350 86.3%,#300 90.1%,#6e0 94.4%,#7b0 96.1%,#720 96.8%,#4a0 97.7%,#1c0 98.2%,#170 98.5%,#1f0 98.6%,#4b0 98.9%,#670 99.4%,#7e0 99.7%,#890"></i><i style="--g:#020,#0e0 28.8%,#2c0 39.7%,#570 51.4%,#550 57%,#260 64%,#080 69.8%,#110 73.6%,#310 80.5%,#2f0 88.1%,#460 90.5%,#790 94%,#880 96.1%,#7e0 96.8%,#570 97.7%,#280 98.2%,#250 98.6%,#4b0 98.9%,#670 99.4%,#7e0 99.7%,#890"></i><i style="--g:#030,#0f0 27.4%,#2c0 37.6%,#610 50.1%,#620 55.8%,#400 61.2%,#100 67.9%,#080 71.9%,#290 80.8%,#2b0 86.8%,#640 91.3%,#880 93.8%,#950 96.1%,#8b0 96.8%,#630 97.7%,#340 98.2%,#2f0 98.6%,#390 98.8%,#4d0 98.9%,#680 99.4%,#7e0 99.7%,#890"></i><i style="--g:#030,#100 26.5%,#2d0 36.4%,#6a0 49.3%,#6c0 55%,#4c0 60.1%,#140 67.3%,#070 71.9%,#230 81.1%,#2a0 85.9%,#5c0 89%,#820 92%,#9a0 94.1%,#a20 96.1%,#970 96.8%,#6e0 97.7%,#3f0 98.2%,#380 98.6%,#560 99.1%,#7f0 99.7%,#890"></i><i style="--g:#030,#100 25.8%,#2d0 35.4%,#700 48.7%,#730 54.4%,#540 59.4%,#160 67%,#070 71.9%,#210 81.1%,#270 83.9%,#3b0 86%,#6f0 88.7%,#920 91.9%,#a70 93.8%,#ae0 96.1%,#9b0 97%,#790 97.7%,#490 98.2%,#420 98.6%,#5f0 99.2%,#7f0 99.7%,#8a0"></i><i style="--g:#030,#110 25.2%,#2e0 34.6%,#760 48.1%,#790 53.8%,#5d0 58.6%,#180 66.8%,#080 71.9%,#230 81.1%,#290 83.5%,#4e0 86%,#840 88.6%,#a90 92.3%,#b70 94.1%,#b90 96.1%,#a60 97%,#830 97.7%,#530 98.2%,#4d0 98.8%,#850 99.8%,#8a0"></i><i style="--g:#040,#110 24.7%,#2e0 33.9%,#7b0 47.8%,#800 53.4%,#660 58%,#1b0 66.7%,#080 71.9%,#240 80.9%,#290 83%,#480 84.5%,#650 86.2%,#970 88.4%,#b90 92.5%,#c40 94.4%,#c30 96.1%,#af0 97%,#8c0 97.7%,#5b0 98.2%,#540 98.8%,#6f0 99.4%,#810 99.7%,#8b0"></i><i style="--g:#040,#110 24.6%,#2e0 33.7%,#7d0 47.8%,#820 53.4%,#680 58%,#1b0 66.8%,#080 71.9%,#230 81.1%,#270 82.7%,#550 84.4%,#7b0 86.3%,#a50 88.3%,#c80 92.6%,#d00 95.8%,#be0 96.8%,#940 97.7%,#630 98.2%,#5a0 98.8%,#710 99.4%,#860 99.8%,#8b0"></i><i style="--g:#040,#110 24.6%,#2e0 33.7%,#7d0 47.8%,#810 53.4%,#680 58%,#1b0 66.8%,#080 72.1%,#1f0 81.2%,#240 82.6%,#5f0 84.2%,#960 86.8%,#b70 88.9%,#d10 92.5%,#d70 94%,#d40 96.1%,#be0 97%,#9b0 97.7%,#690 98.2%,#600 98.8%,#740 99.4%,#870 99.8%,#8c0"></i><i style="--g:#040,#110 24.6%,#2e0 33.7%,#7c0 47.8%,#810 53.4%,#670 58%,#1a0 66.8%,#070 72.4%,#200 82.4%,#6a0 84.2%,#af0 87.5%,#c50 89.9%,#df0 93.5%,#da0 96.1%,#c40 97%,#a00 97.7%,#6e0 98.2%,#640 98.8%,#760 99.4%,#8c0"></i><i style="--g:#040,#110 24.6%,#2e0 33.9%,#7b0 47.8%,#800 53.4%,#660 58%,#1b0 66.7%,#060 72.5%,#1b0 80.9%,#2c0 82.4%,#550 83.5%,#740 84.2%,#b30 87.4%,#e50 93.4%,#e00 96.1%,#c90 97%,#a40 97.7%,#720 98.2%,#680 98.8%,#780 99.4%,#8d0"></i><i style="--g:#040,#110 24.7%,#2f0 34%,#7a0 47.8%,#7f0 53.4%,#650 58%,#1a0 66.7%,#050 72.7%,#120 78.2%,#390 81.8%,#590 83.2%,#800 84.2%,#b50 87.4%,#e90 93.4%,#e30 96.1%,#cc0 97%,#a80 97.7%,#760 98.2%,#6b0 98.8%,#7a0 99.4%,#8d0"></i><i style="--g:#030,#110 24.9%,#2e0 34.2%,#780 48%,#7c0 53.7%,#600 58.5%,#190 66.7%,#060 72.2%,#160 77.2%,#4d0 81.4%,#760 83.5%,#8f0 84.5%,#b60 87.7%,#ec0 93.4%,#e90 95.9%,#cf0 97%,#aa0 97.7%,#780 98.2%,#6d0 98.8%,#7b0 99.4%,#8e0"></i><i style="--g:#030,#100 25.8%,#2d0 35.4%,#700 48.7%,#730 54.4%,#540 59.4%,#160 67%,#0b0 71%,#230 76.7%,#910 84.7%,#aa0 86.9%,#ed0 93.4%,#eb0 95.9%,#d00 97%,#ab0 97.7%,#790 98.2%,#6e0 98.8%,#7b0 99.4%,#8e0"></i><i style="--g:#030,#0f0 27.3%,#2c0 37.5%,#630 50.1%,#630 55.8%,#400 61.2%,#110 67.7%,#160 70.9%,#3c0 76.7%,#740 80.8%,#920 85.9%,#ed0 93.1%,#ec0 95.9%,#d10 97%,#ac0 97.7%,#7a0 98.2%,#6f0 98.8%,#7c0 99.4%,#8e0"></i><i style="--g:#020,#0e0 28.9%,#2c0 39.9%,#560 51.6%,#530 57.1%,#160 66.8%,#2d0 71.3%,#5f0 77.2%,#7b0 80%,#780 82.4%,#730 83.8%,#8a0 86.2%,#ac0 88.6%,#ed0 93.1%,#ec0 95.9%,#d10 97%,#ac0 97.7%,#7a0 98.2%,#6f0 98.8%,#7c0 99.4%,#8e0"></i><i style="--g:#020,#0d0 29.8%,#2d0 42%,#4a0 52.5%,#440 57.7%,#1c0 64.8%,#310 68.5%,#7c0 78.7%,#720 81.4%,#5c0 83.5%,#810 86.5%,#9b0 88.4%,#ca0 90.8%,#ec0 93.4%,#ec0 95.9%,#d10 97%,#ac0 97.7%,#7a0 98.2%,#6f0 98.8%,#7c0 99.4%,#8e0"></i><i style="--g:#020,#0c0 30.1%,#2e0 43%,#470 53.1%,#3e0 58.2%,#260 63.1%,#420 67.3%,#6e0 73%,#7b0 77.8%,#610 80.9%,#430 83.2%,#8a0 88.4%,#c30 90.8%,#ea0 93.2%,#eb0 95.9%,#d10 97%,#ac0 97.7%,#7a0 98.2%,#6e0 98.8%,#7c0 99.4%,#8e0"></i><i style="--g:#020,#0e0 28.9%,#2c0 39.9%,#560 51.4%,#530 57.1%,#3d0 62.5%,#630 68%,#780 72.2%,#740 76.9%,#360 82.1%,#2c0 83.2%,#660 87.1%,#760 88.4%,#bd0 91%,#e70 93.2%,#ea0 95.9%,#d00 97%,#ab0 97.7%,#790 98.2%,#6e0 98.8%,#7b0 99.4%,#8e0"></i><i style="--g:#030,#100 25.5%,#2e0 35.1%,#720 48.4%,#750 54.1%,#540 62.1%,#770 69.8%,#690 75.4%,#590 77.3%,#1a0 82.7%,#280 83.8%,#620 88.4%,#c10 91.6%,#e20 93.2%,#e90 95.9%,#cf0 97%,#aa0 97.7%,#780 98.2%,#6d0 98.8%,#7b0 99.4%,#8e0"></i><i style="--g:#040,#120 24%,#2f0 32.8%,#8c0 47.7%,#920 53.1%,#6e0 62.5%,#6d0 69.7%,#420 77%,#150 81.4%,#110 83%,#2f0 85.4%,#4e0 88.4%,#be0 91.9%,#dd0 93.4%,#e60 95.9%,#cc0 97%,#a80 97.7%,#760 98.2%,#6b0 98.8%,#7a0 99.4%,#8d0"></i><i style="--g:#040,#140 24.1%,#300 32.5%,#700 41.4%,#a40 48.7%,#ac0 53.8%,#8f0 60.9%,#230 77.5%,#090 81.8%,#0c0 83.2%,#3b0 88.4%,#bf0 92.3%,#d50 93.4%,#e30 95.9%,#c90 97%,#a50 97.7%,#730 98.2%,#690 98.8%,#780 99.4%,#8d0"></i><i style="--g:#050,#140 24.3%,#310 32.7%,#6e0 40.9%,#aa0 48.7%,#b60 53.7%,#a20 59.5%,#350 71%,#060 80.6%,#0a0 83.5%,#2b0 88.4%,#730 90.5%,#c00 92.8%,#d70 94.4%,#df0 95.9%,#c50 97%,#a10 97.7%,#700 98.2%,#660 98.8%,#770 99.4%,#8d0"></i><i style="--g:#040,#130 24.1%,#300 32.5%,#710 41.5%,#a30 48.7%,#aa0 53.8%,#930 58.9%,#530 65.2%,#200 71%,#050 79%,#090 84.2%,#1e0 88.4%,#550 90.2%,#b40 92.8%,#cf0 94.4%,#d90 95.9%,#c10 97%,#9d0 97.7%,#6b0 98.2%,#620 98.8%,#750 99.4%,#880 99.8%,#8c0"></i><i style="--g:#040,#130 23.8%,#2f0 32.5%,#930 47.7%,#9b0 52.9%,#860 57.6%,#210 68.3%,#080 74.5%,#050 84.4%,#140 88.4%,#440 90.2%,#af0 93.1%,#d20 95.6%,#c90 96.5%,#b40 97.1%,#970 97.7%,#660 98.2%,#5d0 98.8%,#730 99.4%,#870 99.8%,#8b0"></i><i style="--g:#040,#120 24.1%,#2f0 33.1%,#870 47.7%,#8d0 53.1%,#760 57.6%,#1d0 67.4%,#050 73.7%,#060 86.6%,#0e0 88.6%,#350 90.2%,#a10 93.1%,#ca0 95.6%,#c40 96.4%,#b40 97%,#910 97.7%,#600 98.2%,#580 98.8%,#700 99.4%,#860 99.8%,#8b0"></i></div><div class="low" style="height:85.6px;background:linear-gradient(#8a0,#910 1.2%,#ae0 3.5%,#b70 10.5%,#ca0 11.7%,#cc0 12.3%,#bd0 13.4%,#bd0 25.7%,#c60 26.3%,#c20 26.9%,#b20 27.4%,#950 28%,#8b0 28.6%,#770 34.4%,#6c0 35%,#3b0 36.2%,#300 36.8%,#260 41.5%,#000 45%,#020 92.2%,#190 95.2%,#1f0)"><b style="top:10.2px;height:12.8px;background:linear-gradient(90deg,#b20,#ba0 14.3%,#ec0 55.4%,#f20)"></b></div></div></div><div class="a" style="left:468.0px;top:607.8px;width:13.0px;height:3.5px;background:#333"></div><span class="t" id="t86" style="font-size:38.5px;top:590.5px;right:4016.5px;transform-origin:100% 0;transform:scaleX(0.9100);">100</span><div class="a" style="left:468.0px;top:678.8px;width:13.0px;height:3.5px;background:#333"></div><span class="t" id="t87" style="font-size:38.5px;top:661.5px;right:4016.5px;transform-origin:100% 0;transform:scaleX(0.9100);">95</span><div class="a" style="left:468.0px;top:749.7px;width:13.0px;height:3.5px;background:#333"></div><span class="t" id="t88" style="font-size:38.5px;top:732.4px;right:4016.5px;transform-origin:100% 0;transform:scaleX(0.9100);">90</span><div class="a" style="left:468.0px;top:820.7px;width:13.0px;height:3.5px;background:#333"></div><span class="t" id="t89" style="font-size:38.5px;top:803.4px;right:4016.5px;transform-origin:100% 0;transform:scaleX(0.9100);">85</span><div class="a" style="left:468.0px;top:891.6px;width:13.0px;height:3.5px;background:#333"></div><span class="t" id="t90" style="font-size:38.5px;top:874.3px;right:4016.5px;transform-origin:100% 0;transform:scaleX(0.9100);">80</span><div class="a" style="left:468.0px;top:962.5px;width:13.0px;height:3.5px;background:#333"></div><span class="t" id="t91" style="font-size:38.5px;top:945.3px;right:4016.5px;transform-origin:100% 0;transform:scaleX(0.9100);">75</span><div class="a" style="left:468.0px;top:1033.5px;width:13.0px;height:3.5px;background:#333"></div><span class="t" id="t92" style="font-size:38.5px;top:1016.2px;right:4016.5px;transform-origin:100% 0;transform:scaleX(0.9100);">70</span><div class="a" style="left:468.0px;top:1104.5px;width:13.0px;height:3.5px;background:#333"></div><span class="t" id="t93" style="font-size:38.5px;top:1087.2px;right:4016.5px;transform-origin:100% 0;transform:scaleX(0.9100);">65</span><div class="a" style="left:468.0px;top:1175.4px;width:13.0px;height:3.5px;background:#333"></div><span class="t" id="t94" style="font-size:38.5px;top:1158.1px;right:4016.5px;transform-origin:100% 0;transform:scaleX(0.9100);">60</span><div class="a" style="left:468.0px;top:1246.4px;width:13.0px;height:3.5px;background:#333"></div><span class="t" id="t95" style="font-size:38.5px;top:1229.1px;right:4016.5px;transform-origin:100% 0;transform:scaleX(0.9100);">55</span><div class="a" style="left:468.0px;top:1317.3px;width:13.0px;height:3.5px;background:#333"></div><span class="t" id="t96" style="font-size:38.5px;top:1300.0px;right:4016.5px;transform-origin:100% 0;transform:scaleX(0.9100);">50</span><div class="a" style="left:468.0px;top:1388.2px;width:13.0px;height:3.5px;background:#333"></div><span class="t" id="t97" style="font-size:38.5px;top:1371.0px;right:4016.5px;transform-origin:100% 0;transform:scaleX(0.9100);">45</span><div class="a" style="left:468.0px;top:1459.2px;width:13.0px;height:3.5px;background:#333"></div><span class="t" id="t98" style="font-size:38.5px;top:1441.9px;right:4016.5px;transform-origin:100% 0;transform:scaleX(0.9100);">40</span><div class="a" style="left:468.0px;top:1530.1px;width:13.0px;height:3.5px;background:#333"></div><span class="t" id="t99" style="font-size:38.5px;top:1512.9px;right:4016.5px;transform-origin:100% 0;transform:scaleX(0.9100);">35</span><div class="a" style="left:468.0px;top:1601.1px;width:13.0px;height:3.5px;background:#333"></div><span class="t" id="t100" style="font-size:38.5px;top:1583.8px;right:4016.5px;transform-origin:100% 0;transform:scaleX(0.9100);">30</span><div class="a" style="left:468.0px;top:1672.0px;width:13.0px;height:3.5px;background:#333"></div><span class="t" id="t101" style="font-size:38.5px;top:1654.8px;right:4016.5px;transform-origin:100% 0;transform:scaleX(0.9100);">25</span><div class="a" style="left:468.0px;top:1743.0px;width:13.0px;height:3.5px;background:#333"></div><span class="t" id="t102" style="font-size:38.5px;top:1725.7px;right:4016.5px;transform-origin:100% 0;transform:scaleX(0.9100);">20</span><div class="a" style="left:468.0px;top:1814.0px;width:13.0px;height:3.5px;background:#333"></div><span class="t" id="t103" style="font-size:38.5px;top:1796.7px;right:4016.5px;transform-origin:100% 0;transform:scaleX(0.9100);">15</span><div class="a" style="left:468.0px;top:1884.9px;width:13.0px;height:3.5px;background:#333"></div><span class="t" id="t104" style="font-size:38.5px;top:1867.6px;right:4016.5px;transform-origin:100% 0;transform:scaleX(0.9100);">10</span><div class="a" style="left:468.0px;top:1955.8px;width:13.0px;height:3.5px;background:#333"></div><span class="t" id="t105" style="font-size:38.5px;top:1938.6px;right:4016.5px;transform-origin:100% 0;transform:scaleX(0.9100);">5</span><div class="a" style="left:468.0px;top:2026.8px;width:13.0px;height:3.5px;background:#333"></div><span class="t" id="t106" style="font-size:38.5px;top:2009.5px;right:4016.5px;transform-origin:100% 0;transform:scaleX(0.9100);">0</span><span class="t" id="t107" style="font-size:35.0px;top:-29.6px;left:0.0px;transform-origin:0 0;left:352px;top:1440px;transform-origin:0 0;transform:rotate(-90deg);">Frequency (Hz)</span><div class="a" style="left:485.3px;top:2034.0px;width:3.5px;height:11.5px;background:#222"></div><div class="a" style="left:566.8px;top:2034.0px;width:3.5px;height:11.5px;background:#222"></div><div class="a" style="left:734.8px;top:2034.0px;width:3.5px;height:11.5px;background:#222"></div><div class="a" style="left:902.8px;top:2034.0px;width:3.5px;height:11.5px;background:#222"></div><div class="a" style="left:1070.8px;top:2034.0px;width:3.5px;height:11.5px;background:#222"></div><div class="a" style="left:1238.8px;top:2034.0px;width:3.5px;height:11.5px;background:#222"></div><div class="a" style="left:1406.8px;top:2034.0px;width:3.5px;height:11.5px;background:#222"></div><div class="a" style="left:1574.8px;top:2034.0px;width:3.5px;height:11.5px;background:#222"></div><div class="a" style="left:1742.8px;top:2034.0px;width:3.5px;height:11.5px;background:#222"></div><div class="a" style="left:1910.8px;top:2034.0px;width:3.5px;height:11.5px;background:#222"></div><div class="a" style="left:2078.8px;top:2034.0px;width:3.5px;height:11.5px;background:#222"></div><div class="a" style="left:2246.8px;top:2034.0px;width:3.5px;height:11.5px;background:#222"></div><div class="a" style="left:2414.8px;top:2034.0px;width:3.5px;height:11.5px;background:#222"></div><div class="a" style="left:2582.8px;top:2034.0px;width:3.5px;height:11.5px;background:#222"></div><div class="a" style="left:2750.8px;top:2034.0px;width:3.5px;height:11.5px;background:#222"></div><div class="a" style="left:2918.8px;top:2034.0px;width:3.5px;height:11.5px;background:#222"></div><div class="a" style="left:3005.3px;top:2034.0px;width:3.5px;height:11.5px;background:#222"></div><span class="t" id="t108" style="font-size:38.0px;top:2053.5px;left:484.0px;transform-origin:0 0;transform-origin:50% 0;transform:translateX(-50%) scaleX(0.9000);">150,3</span><span class="t" id="t109" style="font-size:38.0px;top:2053.5px;left:733.5px;transform-origin:0 0;transform-origin:50% 0;transform:translateX(-50%) scaleX(0.9000);">180,0</span><span class="t" id="t110" style="font-size:38.0px;top:2053.5px;left:901.5px;transform-origin:0 0;transform-origin:50% 0;transform:translateX(-50%) scaleX(0.9000);">200,0</span><span class="t" id="t111" style="font-size:38.0px;top:2053.5px;left:1069.5px;transform-origin:0 0;transform-origin:50% 0;transform:translateX(-50%) scaleX(0.9000);">220,0</span><span class="t" id="t112" style="font-size:38.0px;top:2053.5px;left:1237.5px;transform-origin:0 0;transform-origin:50% 0;transform:translateX(-50%) scaleX(0.9000);">240,0</span><span class="t" id="t113" style="font-size:38.0px;top:2053.5px;left:1405.5px;transform-origin:0 0;transform-origin:50% 0;transform:translateX(-50%) scaleX(0.9000);">260,0</span><span class="t" id="t114" style="font-size:38.0px;top:2053.5px;left:1573.5px;transform-origin:0 0;transform-origin:50% 0;transform:translateX(-50%) scaleX(0.9000);">280,0</span><span class="t" id="t115" style="font-size:38.0px;top:2053.5px;left:1741.5px;transform-origin:0 0;transform-origin:50% 0;transform:translateX(-50%) scaleX(0.9000);">300,0</span><span class="t" id="t116" style="font-size:38.0px;top:2053.5px;left:1909.5px;transform-origin:0 0;transform-origin:50% 0;transform:translateX(-50%) scaleX(0.9000);">320,0</span><span class="t" id="t117" style="font-size:38.0px;top:2053.5px;left:2077.5px;transform-origin:0 0;transform-origin:50% 0;transform:translateX(-50%) scaleX(0.9000);">340,0</span><span class="t" id="t118" style="font-size:38.0px;top:2053.5px;left:2245.5px;transform-origin:0 0;transform-origin:50% 0;transform:translateX(-50%) scaleX(0.9000);">360,0</span><span class="t" id="t119" style="font-size:38.0px;top:2053.5px;left:2413.5px;transform-origin:0 0;transform-origin:50% 0;transform:translateX(-50%) scaleX(0.9000);">380,0</span><span class="t" id="t120" style="font-size:38.0px;top:2053.5px;left:2581.5px;transform-origin:0 0;transform-origin:50% 0;transform:translateX(-50%) scaleX(0.9000);">400,0</span><span class="t" id="t121" style="font-size:38.0px;top:2053.5px;left:2749.5px;transform-origin:0 0;transform-origin:50% 0;transform:translateX(-50%) scaleX(0.9000);">420,0</span><span class="t" id="t122" style="font-size:38.0px;top:2053.5px;left:2917.5px;transform-origin:0 0;transform-origin:50% 0;transform:translateX(-50%) scaleX(0.9000);">440,0</span><span class="t" id="t123" style="font-size:38.0px;top:2053.5px;left:3002.0px;transform-origin:0 0;transform-origin:50% 0;transform:translateX(-50%) scaleX(0.9000);">450,3</span><span class="t" id="t124" style="font-size:38.5px;top:2104.4px;left:1742.6px;transform-origin:0 0;transform-origin:50% 0;transform:translateX(-50%) scaleX(1.0000);">Time (s)</span></body></html>
